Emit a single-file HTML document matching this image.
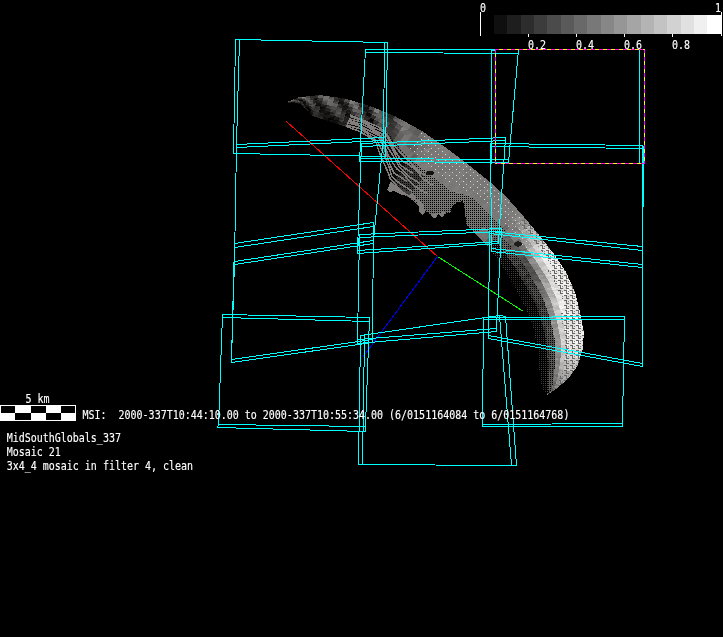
<!DOCTYPE html>
<html><head><meta charset="utf-8"><title>MSI mosaic</title>
<style>
html,body{margin:0;padding:0;background:#000;overflow:hidden}
svg{display:block}
text{font-family:"DejaVu Sans Mono","Liberation Mono",monospace;font-size:10px;fill:#fff;white-space:pre;stroke:#fff;stroke-width:0.12px}
.c{fill:none;stroke:#0ff;stroke-width:1}
</style></head><body>
<svg width="723" height="637" viewBox="0 0 723 637">
<rect width="723" height="637" fill="#000"/>
<g shape-rendering="crispEdges">
<polygon points="288.0,103.0 287.9,102.9 290.4,102.9" fill="rgb(38,35,35)"/><polygon points="288.0,103.0 290.4,102.9 290.6,103.2" fill="rgb(33,30,30)"/><polygon points="287.9,102.9 287.8,102.8 290.2,102.7" fill="rgb(59,56,56)"/><polygon points="287.9,102.9 290.2,102.7 290.4,102.9" fill="rgb(43,40,40)"/><polygon points="287.8,102.8 287.6,102.6 290.1,102.4" fill="rgb(52,49,49)"/><polygon points="287.8,102.8 290.1,102.4 290.2,102.7" fill="rgb(47,44,44)"/><polygon points="287.6,102.6 287.5,102.5 289.9,102.2" fill="rgb(22,19,19)"/><polygon points="287.6,102.6 289.9,102.2 290.1,102.4" fill="rgb(35,32,32)"/><polygon points="287.5,102.5 287.4,102.4 289.7,101.9" fill="rgb(7,4,4)"/><polygon points="287.5,102.5 289.7,101.9 289.9,102.2" fill="rgb(19,16,16)"/><polygon points="287.4,102.4 287.2,102.2 289.6,101.6" fill="rgb(15,12,12)"/><polygon points="287.4,102.4 289.6,101.6 289.7,101.9" fill="rgb(15,12,12)"/><polygon points="287.2,102.2 287.1,102.1 289.4,101.4" fill="rgb(57,54,54)"/><polygon points="287.2,102.2 289.4,101.4 289.6,101.6" fill="rgb(68,65,65)"/><polygon points="287.1,102.1 287.0,102.0 289.2,101.1" fill="rgb(92,89,89)"/><polygon points="287.1,102.1 289.2,101.1 289.4,101.4" fill="rgb(94,91,91)"/>
<polygon points="290.6,103.2 290.4,102.9 293.0,103.0" fill="rgb(45,42,42)"/><polygon points="290.6,103.2 293.0,103.0 293.2,103.4" fill="rgb(54,51,51)"/><polygon points="290.4,102.9 290.2,102.7 292.8,102.6" fill="rgb(37,34,34)"/><polygon points="290.4,102.9 292.8,102.6 293.0,103.0" fill="rgb(32,29,29)"/><polygon points="290.2,102.7 290.1,102.4 292.5,102.2" fill="rgb(35,32,32)"/><polygon points="290.2,102.7 292.5,102.2 292.8,102.6" fill="rgb(9,6,6)"/><polygon points="290.1,102.4 289.9,102.2 292.3,101.8" fill="rgb(27,24,24)"/><polygon points="290.1,102.4 292.3,101.8 292.5,102.2" fill="rgb(11,8,8)"/><polygon points="289.9,102.2 289.7,101.9 292.1,101.4" fill="rgb(23,20,20)"/><polygon points="289.9,102.2 292.1,101.4 292.3,101.8" fill="rgb(22,19,19)"/><polygon points="289.7,101.9 289.6,101.6 291.8,101.0" fill="rgb(62,59,59)"/><polygon points="289.7,101.9 291.8,101.0 292.1,101.4" fill="rgb(77,74,74)"/><polygon points="289.6,101.6 289.4,101.4 291.6,100.6" fill="rgb(95,92,92)"/><polygon points="289.6,101.6 291.6,100.6 291.8,101.0" fill="rgb(106,103,103)"/><polygon points="289.4,101.4 289.2,101.1 291.4,100.2" fill="rgb(122,119,119)"/><polygon points="289.4,101.4 291.4,100.2 291.6,100.6" fill="rgb(115,112,112)"/>
<polygon points="293.2,103.4 293.0,103.0 295.5,103.1" fill="rgb(23,20,20)"/><polygon points="293.2,103.4 295.5,103.1 295.8,103.6" fill="rgb(9,6,6)"/><polygon points="293.0,103.0 292.8,102.6 295.2,102.5" fill="rgb(1,0,0)"/><polygon points="293.0,103.0 295.2,102.5 295.5,103.1" fill="rgb(5,2,2)"/><polygon points="292.8,102.6 292.5,102.2 295.0,102.0" fill="rgb(22,19,19)"/><polygon points="292.8,102.6 295.0,102.0 295.2,102.5" fill="rgb(15,12,12)"/><polygon points="292.5,102.2 292.3,101.8 294.7,101.4" fill="rgb(34,31,31)"/><polygon points="292.5,102.2 294.7,101.4 295.0,102.0" fill="rgb(41,38,38)"/><polygon points="292.3,101.8 292.1,101.4 294.4,100.9" fill="rgb(71,68,68)"/><polygon points="292.3,101.8 294.4,100.9 294.7,101.4" fill="rgb(67,64,64)"/><polygon points="292.1,101.4 291.8,101.0 294.2,100.4" fill="rgb(107,104,104)"/><polygon points="292.1,101.4 294.2,100.4 294.4,100.9" fill="rgb(104,101,101)"/><polygon points="291.8,101.0 291.6,100.6 293.9,99.8" fill="rgb(93,90,90)"/><polygon points="291.8,101.0 293.9,99.8 294.2,100.4" fill="rgb(102,99,99)"/><polygon points="291.6,100.6 291.4,100.2 293.6,99.3" fill="rgb(75,72,72)"/><polygon points="291.6,100.6 293.6,99.3 293.9,99.8" fill="rgb(85,82,82)"/>
<polygon points="295.8,103.6 295.5,103.1 298.1,103.1" fill="rgb(16,13,13)"/><polygon points="295.8,103.6 298.1,103.1 298.4,103.8" fill="rgb(3,0,0)"/><polygon points="295.5,103.1 295.2,102.5 297.8,102.5" fill="rgb(33,30,30)"/><polygon points="295.5,103.1 297.8,102.5 298.1,103.1" fill="rgb(9,6,6)"/><polygon points="295.2,102.5 295.0,102.0 297.4,101.8" fill="rgb(41,38,38)"/><polygon points="295.2,102.5 297.4,101.8 297.8,102.5" fill="rgb(51,48,48)"/><polygon points="295.0,102.0 294.7,101.4 297.1,101.1" fill="rgb(62,59,59)"/><polygon points="295.0,102.0 297.1,101.1 297.4,101.8" fill="rgb(72,69,69)"/><polygon points="294.7,101.4 294.4,100.9 296.8,100.4" fill="rgb(74,71,71)"/><polygon points="294.7,101.4 296.8,100.4 297.1,101.1" fill="rgb(92,89,89)"/><polygon points="294.4,100.9 294.2,100.4 296.4,99.8" fill="rgb(86,83,83)"/><polygon points="294.4,100.9 296.4,99.8 296.8,100.4" fill="rgb(80,77,77)"/><polygon points="294.2,100.4 293.9,99.8 296.1,99.1" fill="rgb(62,59,59)"/><polygon points="294.2,100.4 296.1,99.1 296.4,99.8" fill="rgb(46,43,43)"/><polygon points="293.9,99.8 293.6,99.3 295.8,98.4" fill="rgb(35,32,32)"/><polygon points="293.9,99.8 295.8,98.4 296.1,99.1" fill="rgb(32,29,29)"/>
<polygon points="298.4,103.8 298.1,103.1 300.6,103.2" fill="rgb(24,21,21)"/><polygon points="298.4,103.8 300.6,103.2 301.0,104.0" fill="rgb(20,17,17)"/><polygon points="298.1,103.1 297.8,102.5 300.2,102.4" fill="rgb(54,51,51)"/><polygon points="298.1,103.1 300.2,102.4 300.6,103.2" fill="rgb(57,54,54)"/><polygon points="297.8,102.5 297.4,101.8 299.9,101.6" fill="rgb(65,62,62)"/><polygon points="297.8,102.5 299.9,101.6 300.2,102.4" fill="rgb(71,68,68)"/><polygon points="297.4,101.8 297.1,101.1 299.5,100.8" fill="rgb(59,56,56)"/><polygon points="297.4,101.8 299.5,100.8 299.9,101.6" fill="rgb(77,74,74)"/><polygon points="297.1,101.1 296.8,100.4 299.1,99.9" fill="rgb(61,58,58)"/><polygon points="297.1,101.1 299.1,99.9 299.5,100.8" fill="rgb(71,68,68)"/><polygon points="296.8,100.4 296.4,99.8 298.8,99.1" fill="rgb(43,40,40)"/><polygon points="296.8,100.4 298.8,99.1 299.1,99.9" fill="rgb(28,25,25)"/><polygon points="296.4,99.8 296.1,99.1 298.4,98.3" fill="rgb(20,17,17)"/><polygon points="296.4,99.8 298.4,98.3 298.8,99.1" fill="rgb(28,25,25)"/><polygon points="296.1,99.1 295.8,98.4 298.0,97.5" fill="rgb(29,26,26)"/><polygon points="296.1,99.1 298.0,97.5 298.4,98.3" fill="rgb(41,38,38)"/>
<polygon points="301.0,104.0 300.6,103.2 303.1,105.2" fill="rgb(32,29,29)"/><polygon points="301.0,104.0 303.1,105.2 303.2,106.4" fill="rgb(30,27,27)"/><polygon points="300.6,103.2 300.2,102.4 302.9,104.1" fill="rgb(43,40,40)"/><polygon points="300.6,103.2 302.9,104.1 303.1,105.2" fill="rgb(63,60,60)"/><polygon points="300.2,102.4 299.9,101.6 302.8,102.9" fill="rgb(44,41,41)"/><polygon points="300.2,102.4 302.8,102.9 302.9,104.1" fill="rgb(47,44,44)"/><polygon points="299.9,101.6 299.5,100.8 302.7,101.7" fill="rgb(36,33,33)"/><polygon points="299.9,101.6 302.7,101.7 302.8,102.9" fill="rgb(49,46,46)"/><polygon points="299.5,100.8 299.1,99.9 302.6,100.5" fill="rgb(10,7,7)"/><polygon points="299.5,100.8 302.6,100.5 302.7,101.7" fill="rgb(21,18,18)"/><polygon points="299.1,99.9 298.8,99.1 302.4,99.3" fill="rgb(26,23,23)"/><polygon points="299.1,99.9 302.4,99.3 302.6,100.5" fill="rgb(35,32,32)"/><polygon points="298.8,99.1 298.4,98.3 302.3,98.2" fill="rgb(62,59,59)"/><polygon points="298.8,99.1 302.3,98.2 302.4,99.3" fill="rgb(63,60,60)"/><polygon points="298.4,98.3 298.0,97.5 302.2,97.0" fill="rgb(90,87,87)"/><polygon points="298.4,98.3 302.2,97.0 302.3,98.2" fill="rgb(94,91,91)"/>
<polygon points="303.2,106.4 303.1,105.2 305.5,107.3" fill="rgb(39,36,36)"/><polygon points="303.2,106.4 305.5,107.3 305.4,108.8" fill="rgb(53,50,50)"/><polygon points="303.1,105.2 302.9,104.1 305.6,105.7" fill="rgb(51,48,48)"/><polygon points="303.1,105.2 305.6,105.7 305.5,107.3" fill="rgb(28,25,25)"/><polygon points="302.9,104.1 302.8,102.9 305.8,104.2" fill="rgb(15,12,12)"/><polygon points="302.9,104.1 305.8,104.2 305.6,105.7" fill="rgb(17,14,14)"/><polygon points="302.8,102.9 302.7,101.7 305.9,102.7" fill="rgb(9,6,6)"/><polygon points="302.8,102.9 305.9,102.7 305.8,104.2" fill="rgb(16,13,13)"/><polygon points="302.7,101.7 302.6,100.5 306.0,101.1" fill="rgb(31,28,28)"/><polygon points="302.7,101.7 306.0,101.1 305.9,102.7" fill="rgb(22,19,19)"/><polygon points="302.6,100.5 302.4,99.3 306.1,99.6" fill="rgb(48,45,45)"/><polygon points="302.6,100.5 306.1,99.6 306.0,101.1" fill="rgb(60,57,57)"/><polygon points="302.4,99.3 302.3,98.2 306.3,98.0" fill="rgb(97,94,94)"/><polygon points="302.4,99.3 306.3,98.0 306.1,99.6" fill="rgb(102,99,99)"/><polygon points="302.3,98.2 302.2,97.0 306.4,96.5" fill="rgb(133,130,130)"/><polygon points="302.3,98.2 306.4,96.5 306.3,98.0" fill="rgb(125,122,122)"/>
<polygon points="305.4,108.8 305.5,107.3 308.0,109.3" fill="rgb(24,21,21)"/><polygon points="305.4,108.8 308.0,109.3 307.6,111.2" fill="rgb(27,24,24)"/><polygon points="305.5,107.3 305.6,105.7 308.4,107.4" fill="rgb(20,17,17)"/><polygon points="305.5,107.3 308.4,107.4 308.0,109.3" fill="rgb(2,0,0)"/><polygon points="305.6,105.7 305.8,104.2 308.7,105.5" fill="rgb(27,24,24)"/><polygon points="305.6,105.7 308.7,105.5 308.4,107.4" fill="rgb(23,20,20)"/><polygon points="305.8,104.2 305.9,102.7 309.1,103.6" fill="rgb(45,42,42)"/><polygon points="305.8,104.2 309.1,103.6 308.7,105.5" fill="rgb(43,40,40)"/><polygon points="305.9,102.7 306.0,101.1 309.5,101.7" fill="rgb(65,62,62)"/><polygon points="305.9,102.7 309.5,101.7 309.1,103.6" fill="rgb(65,62,62)"/><polygon points="306.0,101.1 306.1,99.6 309.9,99.8" fill="rgb(86,83,83)"/><polygon points="306.0,101.1 309.9,99.8 309.5,101.7" fill="rgb(101,98,98)"/><polygon points="306.1,99.6 306.3,98.0 310.2,97.9" fill="rgb(91,88,88)"/><polygon points="306.1,99.6 310.2,97.9 309.9,99.8" fill="rgb(91,88,88)"/><polygon points="306.3,98.0 306.4,96.5 310.6,96.0" fill="rgb(73,70,70)"/><polygon points="306.3,98.0 310.6,96.0 310.2,97.9" fill="rgb(72,69,69)"/>
<polygon points="307.6,111.2 308.0,109.3 310.4,111.3" fill="rgb(5,2,2)"/><polygon points="307.6,111.2 310.4,111.3 309.8,113.6" fill="rgb(0,0,0)"/><polygon points="308.0,109.3 308.4,107.4 311.1,109.1" fill="rgb(3,0,0)"/><polygon points="308.0,109.3 311.1,109.1 310.4,111.3" fill="rgb(7,4,4)"/><polygon points="308.4,107.4 308.7,105.5 311.7,106.8" fill="rgb(29,26,26)"/><polygon points="308.4,107.4 311.7,106.8 311.1,109.1" fill="rgb(36,33,33)"/><polygon points="308.7,105.5 309.1,103.6 312.3,104.5" fill="rgb(56,53,53)"/><polygon points="308.7,105.5 312.3,104.5 311.7,106.8" fill="rgb(80,77,77)"/><polygon points="309.1,103.6 309.5,101.7 312.9,102.3" fill="rgb(91,88,88)"/><polygon points="309.1,103.6 312.9,102.3 312.3,104.5" fill="rgb(78,75,75)"/><polygon points="309.5,101.7 309.9,99.8 313.6,100.0" fill="rgb(76,73,73)"/><polygon points="309.5,101.7 313.6,100.0 312.9,102.3" fill="rgb(79,76,76)"/><polygon points="309.9,99.8 310.2,97.9 314.2,97.8" fill="rgb(54,51,51)"/><polygon points="309.9,99.8 314.2,97.8 313.6,100.0" fill="rgb(47,44,44)"/><polygon points="310.2,97.9 310.6,96.0 314.8,95.5" fill="rgb(42,39,39)"/><polygon points="310.2,97.9 314.8,95.5 314.2,97.8" fill="rgb(46,43,43)"/>
<polygon points="309.8,113.6 310.4,111.3 312.9,113.4" fill="rgb(18,15,15)"/><polygon points="309.8,113.6 312.9,113.4 312.0,116.0" fill="rgb(18,15,15)"/><polygon points="310.4,111.3 311.1,109.1 313.8,110.8" fill="rgb(30,27,27)"/><polygon points="310.4,111.3 313.8,110.8 312.9,113.4" fill="rgb(30,27,27)"/><polygon points="311.1,109.1 311.7,106.8 314.6,108.1" fill="rgb(61,58,58)"/><polygon points="311.1,109.1 314.6,108.1 313.8,110.8" fill="rgb(58,55,55)"/><polygon points="311.7,106.8 312.3,104.5 315.5,105.5" fill="rgb(83,80,80)"/><polygon points="311.7,106.8 315.5,105.5 314.6,108.1" fill="rgb(65,62,62)"/><polygon points="312.3,104.5 312.9,102.3 316.4,102.9" fill="rgb(49,46,46)"/><polygon points="312.3,104.5 316.4,102.9 315.5,105.5" fill="rgb(75,72,72)"/><polygon points="312.9,102.3 313.6,100.0 317.2,100.2" fill="rgb(39,36,36)"/><polygon points="312.9,102.3 317.2,100.2 316.4,102.9" fill="rgb(28,25,25)"/><polygon points="313.6,100.0 314.2,97.8 318.1,97.6" fill="rgb(25,22,22)"/><polygon points="313.6,100.0 318.1,97.6 317.2,100.2" fill="rgb(11,8,8)"/><polygon points="314.2,97.8 314.8,95.5 319.0,95.0" fill="rgb(38,35,35)"/><polygon points="314.2,97.8 319.0,95.0 318.1,97.6" fill="rgb(51,48,48)"/>
<polygon points="312.0,116.0 312.9,113.4 318.1,114.9" fill="rgb(50,47,47)"/><polygon points="312.0,116.0 318.1,114.9 317.2,117.6" fill="rgb(45,42,42)"/><polygon points="312.9,113.4 313.8,110.8 318.9,112.1" fill="rgb(49,46,46)"/><polygon points="312.9,113.4 318.9,112.1 318.1,114.9" fill="rgb(52,49,49)"/><polygon points="313.8,110.8 314.6,108.1 319.8,109.4" fill="rgb(48,45,45)"/><polygon points="313.8,110.8 319.8,109.4 318.9,112.1" fill="rgb(65,62,62)"/><polygon points="314.6,108.1 315.5,105.5 320.7,106.7" fill="rgb(44,41,41)"/><polygon points="314.6,108.1 320.7,106.7 319.8,109.4" fill="rgb(51,48,48)"/><polygon points="315.5,105.5 316.4,102.9 321.6,103.9" fill="rgb(20,17,17)"/><polygon points="315.5,105.5 321.6,103.9 320.7,106.7" fill="rgb(17,14,14)"/><polygon points="316.4,102.9 317.2,100.2 322.4,101.2" fill="rgb(31,28,28)"/><polygon points="316.4,102.9 322.4,101.2 321.6,103.9" fill="rgb(36,33,33)"/><polygon points="317.2,100.2 318.1,97.6 323.3,98.4" fill="rgb(57,54,54)"/><polygon points="317.2,100.2 323.3,98.4 322.4,101.2" fill="rgb(55,52,52)"/><polygon points="318.1,97.6 319.0,95.0 324.2,95.7" fill="rgb(99,96,96)"/><polygon points="318.1,97.6 324.2,95.7 323.3,98.4" fill="rgb(97,94,94)"/>
<polygon points="317.2,117.6 318.1,114.9 323.3,116.4" fill="rgb(36,33,33)"/><polygon points="317.2,117.6 323.3,116.4 322.4,119.2" fill="rgb(44,41,41)"/><polygon points="318.1,114.9 318.9,112.1 324.1,113.5" fill="rgb(37,34,34)"/><polygon points="318.1,114.9 324.1,113.5 323.3,116.4" fill="rgb(28,25,25)"/><polygon points="318.9,112.1 319.8,109.4 325.0,110.7" fill="rgb(14,11,11)"/><polygon points="318.9,112.1 325.0,110.7 324.1,113.5" fill="rgb(21,18,18)"/><polygon points="319.8,109.4 320.7,106.7 325.9,107.8" fill="rgb(10,7,7)"/><polygon points="319.8,109.4 325.9,107.8 325.0,110.7" fill="rgb(23,20,20)"/><polygon points="320.7,106.7 321.6,103.9 326.8,105.0" fill="rgb(38,35,35)"/><polygon points="320.7,106.7 326.8,105.0 325.9,107.8" fill="rgb(24,21,21)"/><polygon points="321.6,103.9 322.4,101.2 327.6,102.1" fill="rgb(69,66,66)"/><polygon points="321.6,103.9 327.6,102.1 326.8,105.0" fill="rgb(70,67,67)"/><polygon points="322.4,101.2 323.3,98.4 328.5,99.2" fill="rgb(109,106,106)"/><polygon points="322.4,101.2 328.5,99.2 327.6,102.1" fill="rgb(92,89,89)"/><polygon points="323.3,98.4 324.2,95.7 329.4,96.4" fill="rgb(113,110,110)"/><polygon points="323.3,98.4 329.4,96.4 328.5,99.2" fill="rgb(113,110,110)"/>
<polygon points="322.4,119.2 323.3,116.4 328.5,117.8" fill="rgb(18,15,15)"/><polygon points="322.4,119.2 328.5,117.8 327.6,120.8" fill="rgb(18,15,15)"/><polygon points="323.3,116.4 324.1,113.5 329.4,114.9" fill="rgb(20,17,17)"/><polygon points="323.3,116.4 329.4,114.9 328.5,117.8" fill="rgb(28,25,25)"/><polygon points="324.1,113.5 325.0,110.7 330.2,111.9" fill="rgb(24,21,21)"/><polygon points="324.1,113.5 330.2,111.9 329.4,114.9" fill="rgb(14,11,11)"/><polygon points="325.0,110.7 325.9,107.8 331.1,108.9" fill="rgb(35,32,32)"/><polygon points="325.0,110.7 331.1,108.9 330.2,111.9" fill="rgb(39,36,36)"/><polygon points="325.9,107.8 326.8,105.0 332.0,106.0" fill="rgb(52,49,49)"/><polygon points="325.9,107.8 332.0,106.0 331.1,108.9" fill="rgb(68,65,65)"/><polygon points="326.8,105.0 327.6,102.1 332.9,103.0" fill="rgb(107,104,104)"/><polygon points="326.8,105.0 332.9,103.0 332.0,106.0" fill="rgb(103,100,100)"/><polygon points="327.6,102.1 328.5,99.2 333.7,100.1" fill="rgb(113,110,110)"/><polygon points="327.6,102.1 333.7,100.1 332.9,103.0" fill="rgb(106,103,103)"/><polygon points="328.5,99.2 329.4,96.4 334.6,97.1" fill="rgb(79,76,76)"/><polygon points="328.5,99.2 334.6,97.1 333.7,100.1" fill="rgb(96,93,93)"/>
<polygon points="327.6,120.8 328.5,117.8 333.7,119.3" fill="rgb(5,2,2)"/><polygon points="327.6,120.8 333.7,119.3 332.8,122.4" fill="rgb(19,16,16)"/><polygon points="328.5,117.8 329.4,114.9 334.6,116.2" fill="rgb(28,25,25)"/><polygon points="328.5,117.8 334.6,116.2 333.7,119.3" fill="rgb(12,9,9)"/><polygon points="329.4,114.9 330.2,111.9 335.4,113.2" fill="rgb(33,30,30)"/><polygon points="329.4,114.9 335.4,113.2 334.6,116.2" fill="rgb(48,45,45)"/><polygon points="330.2,111.9 331.1,108.9 336.3,110.1" fill="rgb(72,69,69)"/><polygon points="330.2,111.9 336.3,110.1 335.4,113.2" fill="rgb(57,54,54)"/><polygon points="331.1,108.9 332.0,106.0 337.2,107.0" fill="rgb(78,75,75)"/><polygon points="331.1,108.9 337.2,107.0 336.3,110.1" fill="rgb(78,75,75)"/><polygon points="332.0,106.0 332.9,103.0 338.1,104.0" fill="rgb(99,96,96)"/><polygon points="332.0,106.0 338.1,104.0 337.2,107.0" fill="rgb(96,93,93)"/><polygon points="332.9,103.0 333.7,100.1 338.9,100.9" fill="rgb(54,51,51)"/><polygon points="332.9,103.0 338.9,100.9 338.1,104.0" fill="rgb(73,70,70)"/><polygon points="333.7,100.1 334.6,97.1 339.8,97.8" fill="rgb(49,46,46)"/><polygon points="333.7,100.1 339.8,97.8 338.9,100.9" fill="rgb(40,37,37)"/>
<polygon points="332.8,122.4 333.7,119.3 338.9,120.8" fill="rgb(13,10,10)"/><polygon points="332.8,122.4 338.9,120.8 338.0,124.0" fill="rgb(18,15,15)"/><polygon points="333.7,119.3 334.6,116.2 339.8,117.6" fill="rgb(28,25,25)"/><polygon points="333.7,119.3 339.8,117.6 338.9,120.8" fill="rgb(25,22,22)"/><polygon points="334.6,116.2 335.4,113.2 340.6,114.4" fill="rgb(76,73,73)"/><polygon points="334.6,116.2 340.6,114.4 339.8,117.6" fill="rgb(67,64,64)"/><polygon points="335.4,113.2 336.3,110.1 341.5,111.2" fill="rgb(77,74,74)"/><polygon points="335.4,113.2 341.5,111.2 340.6,114.4" fill="rgb(88,85,85)"/><polygon points="336.3,110.1 337.2,107.0 342.4,108.1" fill="rgb(65,62,62)"/><polygon points="336.3,110.1 342.4,108.1 341.5,111.2" fill="rgb(77,74,74)"/><polygon points="337.2,107.0 338.1,104.0 343.2,104.9" fill="rgb(52,49,49)"/><polygon points="337.2,107.0 343.2,104.9 342.4,108.1" fill="rgb(35,32,32)"/><polygon points="338.1,104.0 338.9,100.9 344.1,101.7" fill="rgb(18,15,15)"/><polygon points="338.1,104.0 344.1,101.7 343.2,104.9" fill="rgb(19,16,16)"/><polygon points="338.9,100.9 339.8,97.8 345.0,98.5" fill="rgb(26,23,23)"/><polygon points="338.9,100.9 345.0,98.5 344.1,101.7" fill="rgb(36,33,33)"/>
<polygon points="338.0,124.0 338.9,120.8 343.0,122.2" fill="rgb(31,28,28)"/><polygon points="338.0,124.0 343.0,122.2 342.0,125.4" fill="rgb(35,32,32)"/><polygon points="338.9,120.8 339.8,117.6 344.0,119.1" fill="rgb(45,42,42)"/><polygon points="338.9,120.8 344.0,119.1 343.0,122.2" fill="rgb(67,64,64)"/><polygon points="339.8,117.6 340.6,114.4 345.0,115.9" fill="rgb(56,53,53)"/><polygon points="339.8,117.6 345.0,115.9 344.0,119.1" fill="rgb(59,56,56)"/><polygon points="340.6,114.4 341.5,111.2 346.0,112.7" fill="rgb(50,47,47)"/><polygon points="340.6,114.4 346.0,112.7 345.0,115.9" fill="rgb(59,56,56)"/><polygon points="341.5,111.2 342.4,108.1 347.0,109.5" fill="rgb(26,23,23)"/><polygon points="341.5,111.2 347.0,109.5 346.0,112.7" fill="rgb(40,37,37)"/><polygon points="342.4,108.1 343.2,104.9 348.0,106.3" fill="rgb(21,18,18)"/><polygon points="342.4,108.1 348.0,106.3 347.0,109.5" fill="rgb(22,19,19)"/><polygon points="343.2,104.9 344.1,101.7 349.0,103.2" fill="rgb(42,39,39)"/><polygon points="343.2,104.9 349.0,103.2 348.0,106.3" fill="rgb(28,25,25)"/><polygon points="344.1,101.7 345.0,98.5 350.0,100.0" fill="rgb(82,79,79)"/><polygon points="344.1,101.7 350.0,100.0 349.0,103.2" fill="rgb(75,72,72)"/>
<polygon points="342.0,125.4 343.0,122.2 347.1,123.6" fill="rgb(31,28,28)"/><polygon points="342.0,125.4 347.1,123.6 346.0,126.8" fill="rgb(53,50,50)"/><polygon points="343.0,122.2 344.0,119.1 348.2,120.5" fill="rgb(35,32,32)"/><polygon points="343.0,122.2 348.2,120.5 347.1,123.6" fill="rgb(43,40,40)"/><polygon points="344.0,119.1 345.0,115.9 349.4,117.3" fill="rgb(37,34,34)"/><polygon points="344.0,119.1 349.4,117.3 348.2,120.5" fill="rgb(33,30,30)"/><polygon points="345.0,115.9 346.0,112.7 350.5,114.2" fill="rgb(14,11,11)"/><polygon points="345.0,115.9 350.5,114.2 349.4,117.3" fill="rgb(19,16,16)"/><polygon points="346.0,112.7 347.0,109.5 351.6,111.0" fill="rgb(24,21,21)"/><polygon points="346.0,112.7 351.6,111.0 350.5,114.2" fill="rgb(31,28,28)"/><polygon points="347.0,109.5 348.0,106.3 352.8,107.8" fill="rgb(40,37,37)"/><polygon points="347.0,109.5 352.8,107.8 351.6,111.0" fill="rgb(52,49,49)"/><polygon points="348.0,106.3 349.0,103.2 353.9,104.7" fill="rgb(84,81,81)"/><polygon points="348.0,106.3 353.9,104.7 352.8,107.8" fill="rgb(85,82,82)"/><polygon points="349.0,103.2 350.0,100.0 355.0,101.5" fill="rgb(128,125,125)"/><polygon points="349.0,103.2 355.0,101.5 353.9,104.7" fill="rgb(120,117,117)"/>
<polygon points="346.0,126.8 347.1,123.6 351.2,125.0" fill="rgb(31,28,28)"/><polygon points="346.0,126.8 351.2,125.0 350.0,128.2" fill="rgb(36,33,33)"/><polygon points="347.1,123.6 348.2,120.5 352.5,121.9" fill="rgb(30,27,27)"/><polygon points="347.1,123.6 352.5,121.9 351.2,125.0" fill="rgb(17,14,14)"/><polygon points="348.2,120.5 349.4,117.3 353.8,118.8" fill="rgb(17,14,14)"/><polygon points="348.2,120.5 353.8,118.8 352.5,121.9" fill="rgb(14,11,11)"/><polygon points="349.4,117.3 350.5,114.2 355.0,115.6" fill="rgb(28,25,25)"/><polygon points="349.4,117.3 355.0,115.6 353.8,118.8" fill="rgb(33,30,30)"/><polygon points="350.5,114.2 351.6,111.0 356.2,112.4" fill="rgb(57,54,54)"/><polygon points="350.5,114.2 356.2,112.4 355.0,115.6" fill="rgb(59,56,56)"/><polygon points="351.6,111.0 352.8,107.8 357.5,109.3" fill="rgb(92,89,89)"/><polygon points="351.6,111.0 357.5,109.3 356.2,112.4" fill="rgb(105,102,102)"/><polygon points="352.8,107.8 353.9,104.7 358.8,106.2" fill="rgb(114,111,111)"/><polygon points="352.8,107.8 358.8,106.2 357.5,109.3" fill="rgb(119,116,116)"/><polygon points="353.9,104.7 355.0,101.5 360.0,103.0" fill="rgb(107,104,104)"/><polygon points="353.9,104.7 360.0,103.0 358.8,106.2" fill="rgb(88,85,85)"/>
<polygon points="350.0,128.2 351.2,125.0 355.4,126.5" fill="rgb(13,10,10)"/><polygon points="350.0,128.2 355.4,126.5 354.0,129.6" fill="rgb(24,21,21)"/><polygon points="351.2,125.0 352.5,121.9 356.8,123.3" fill="rgb(23,20,20)"/><polygon points="351.2,125.0 356.8,123.3 355.4,126.5" fill="rgb(3,0,0)"/><polygon points="352.5,121.9 353.8,118.8 358.1,120.2" fill="rgb(22,19,19)"/><polygon points="352.5,121.9 358.1,120.2 356.8,123.3" fill="rgb(31,28,28)"/><polygon points="353.8,118.8 355.0,115.6 359.5,117.0" fill="rgb(50,47,47)"/><polygon points="353.8,118.8 359.5,117.0 358.1,120.2" fill="rgb(55,52,52)"/><polygon points="355.0,115.6 356.2,112.4 360.9,113.9" fill="rgb(76,73,73)"/><polygon points="355.0,115.6 360.9,113.9 359.5,117.0" fill="rgb(92,89,89)"/><polygon points="356.2,112.4 357.5,109.3 362.2,110.8" fill="rgb(99,96,96)"/><polygon points="356.2,112.4 362.2,110.8 360.9,113.9" fill="rgb(102,99,99)"/><polygon points="357.5,109.3 358.8,106.2 363.6,107.6" fill="rgb(61,58,58)"/><polygon points="357.5,109.3 363.6,107.6 362.2,110.8" fill="rgb(76,73,73)"/><polygon points="358.8,106.2 360.0,103.0 365.0,104.5" fill="rgb(45,42,42)"/><polygon points="358.8,106.2 365.0,104.5 363.6,107.6" fill="rgb(31,28,28)"/>
<polygon points="354.0,129.6 355.4,126.5 359.5,127.9" fill="rgb(25,22,22)"/><polygon points="354.0,129.6 359.5,127.9 358.0,131.0" fill="rgb(28,25,25)"/><polygon points="355.4,126.5 356.8,123.3 361.0,124.8" fill="rgb(27,24,24)"/><polygon points="355.4,126.5 361.0,124.8 359.5,127.9" fill="rgb(48,45,45)"/><polygon points="356.8,123.3 358.1,120.2 362.5,121.6" fill="rgb(58,55,55)"/><polygon points="356.8,123.3 362.5,121.6 361.0,124.8" fill="rgb(61,58,58)"/><polygon points="358.1,120.2 359.5,117.0 364.0,118.5" fill="rgb(91,88,88)"/><polygon points="358.1,120.2 364.0,118.5 362.5,121.6" fill="rgb(86,83,83)"/><polygon points="359.5,117.0 360.9,113.9 365.5,115.4" fill="rgb(62,59,59)"/><polygon points="359.5,117.0 365.5,115.4 364.0,118.5" fill="rgb(70,67,67)"/><polygon points="360.9,113.9 362.2,110.8 367.0,112.2" fill="rgb(49,46,46)"/><polygon points="360.9,113.9 367.0,112.2 365.5,115.4" fill="rgb(44,41,41)"/><polygon points="362.2,110.8 363.6,107.6 368.5,109.1" fill="rgb(19,16,16)"/><polygon points="362.2,110.8 368.5,109.1 367.0,112.2" fill="rgb(22,19,19)"/><polygon points="363.6,107.6 365.0,104.5 370.0,106.0" fill="rgb(36,33,33)"/><polygon points="363.6,107.6 370.0,106.0 368.5,109.1" fill="rgb(16,13,13)"/>
<polygon points="358.0,131.0 359.5,127.9 363.3,130.2" fill="rgb(37,34,34)"/><polygon points="358.0,131.0 363.3,130.2 361.6,133.4" fill="rgb(33,30,30)"/><polygon points="359.5,127.9 361.0,124.8 365.0,127.1" fill="rgb(42,39,39)"/><polygon points="359.5,127.9 365.0,127.1 363.3,130.2" fill="rgb(50,47,47)"/><polygon points="361.0,124.8 362.5,121.6 366.6,123.9" fill="rgb(66,63,63)"/><polygon points="361.0,124.8 366.6,123.9 365.0,127.1" fill="rgb(63,60,60)"/><polygon points="362.5,121.6 364.0,118.5 368.3,120.7" fill="rgb(40,37,37)"/><polygon points="362.5,121.6 368.3,120.7 366.6,123.9" fill="rgb(65,62,62)"/><polygon points="364.0,118.5 365.5,115.4 370.0,117.6" fill="rgb(40,37,37)"/><polygon points="364.0,118.5 370.0,117.6 368.3,120.7" fill="rgb(45,42,42)"/><polygon points="365.5,115.4 367.0,112.2 371.6,114.4" fill="rgb(10,7,7)"/><polygon points="365.5,115.4 371.6,114.4 370.0,117.6" fill="rgb(15,12,12)"/><polygon points="367.0,112.2 368.5,109.1 373.3,111.2" fill="rgb(24,21,21)"/><polygon points="367.0,112.2 373.3,111.2 371.6,114.4" fill="rgb(44,41,41)"/><polygon points="368.5,109.1 370.0,106.0 375.0,108.0" fill="rgb(70,67,67)"/><polygon points="368.5,109.1 375.0,108.0 373.3,111.2" fill="rgb(66,63,63)"/>
<polygon points="361.6,133.4 363.3,130.2 367.1,132.6" fill="rgb(43,40,40)"/><polygon points="361.6,133.4 367.1,132.6 365.2,135.8" fill="rgb(57,54,54)"/><polygon points="363.3,130.2 365.0,127.1 368.9,129.4" fill="rgb(56,53,53)"/><polygon points="363.3,130.2 368.9,129.4 367.1,132.6" fill="rgb(40,37,37)"/><polygon points="365.0,127.1 366.6,123.9 370.8,126.2" fill="rgb(25,22,22)"/><polygon points="365.0,127.1 370.8,126.2 368.9,129.4" fill="rgb(46,43,43)"/><polygon points="366.6,123.9 368.3,120.7 372.6,122.9" fill="rgb(22,19,19)"/><polygon points="366.6,123.9 372.6,122.9 370.8,126.2" fill="rgb(26,23,23)"/><polygon points="368.3,120.7 370.0,117.6 374.4,119.7" fill="rgb(9,6,6)"/><polygon points="368.3,120.7 374.4,119.7 372.6,122.9" fill="rgb(8,5,5)"/><polygon points="370.0,117.6 371.6,114.4 376.3,116.5" fill="rgb(51,48,48)"/><polygon points="370.0,117.6 376.3,116.5 374.4,119.7" fill="rgb(43,40,40)"/><polygon points="371.6,114.4 373.3,111.2 378.1,113.3" fill="rgb(74,71,71)"/><polygon points="371.6,114.4 378.1,113.3 376.3,116.5" fill="rgb(98,95,95)"/><polygon points="373.3,111.2 375.0,108.0 380.0,110.1" fill="rgb(123,120,120)"/><polygon points="373.3,111.2 380.0,110.1 378.1,113.3" fill="rgb(127,124,124)"/>
<polygon points="365.2,135.8 367.1,132.6 370.8,134.9" fill="rgb(24,21,21)"/><polygon points="365.2,135.8 370.8,134.9 368.8,138.2" fill="rgb(45,42,42)"/><polygon points="367.1,132.6 368.9,129.4 372.9,131.7" fill="rgb(14,11,11)"/><polygon points="367.1,132.6 372.9,131.7 370.8,134.9" fill="rgb(36,33,33)"/><polygon points="368.9,129.4 370.8,126.2 374.9,128.4" fill="rgb(18,15,15)"/><polygon points="368.9,129.4 374.9,128.4 372.9,131.7" fill="rgb(15,12,12)"/><polygon points="370.8,126.2 372.6,122.9 376.9,125.2" fill="rgb(30,27,27)"/><polygon points="370.8,126.2 376.9,125.2 374.9,128.4" fill="rgb(41,38,38)"/><polygon points="372.6,122.9 374.4,119.7 378.9,121.9" fill="rgb(50,47,47)"/><polygon points="372.6,122.9 378.9,121.9 376.9,125.2" fill="rgb(46,43,43)"/><polygon points="374.4,119.7 376.3,116.5 380.9,118.6" fill="rgb(91,88,88)"/><polygon points="374.4,119.7 380.9,118.6 378.9,121.9" fill="rgb(83,80,80)"/><polygon points="376.3,116.5 378.1,113.3 383.0,115.4" fill="rgb(99,96,96)"/><polygon points="376.3,116.5 383.0,115.4 380.9,118.6" fill="rgb(101,98,98)"/><polygon points="378.1,113.3 380.0,110.1 385.0,112.1" fill="rgb(89,86,86)"/><polygon points="378.1,113.3 385.0,112.1 383.0,115.4" fill="rgb(93,90,90)"/>
<polygon points="368.8,138.2 370.8,134.9 374.6,137.3" fill="rgb(21,18,18)"/><polygon points="368.8,138.2 374.6,137.3 372.4,140.6" fill="rgb(21,18,18)"/><polygon points="370.8,134.9 372.9,131.7 376.8,134.0" fill="rgb(34,31,31)"/><polygon points="370.8,134.9 376.8,134.0 374.6,137.3" fill="rgb(21,18,18)"/><polygon points="372.9,131.7 374.9,128.4 379.0,130.7" fill="rgb(41,38,38)"/><polygon points="372.9,131.7 379.0,130.7 376.8,134.0" fill="rgb(32,29,29)"/><polygon points="374.9,128.4 376.9,125.2 381.2,127.4" fill="rgb(63,60,60)"/><polygon points="374.9,128.4 381.2,127.4 379.0,130.7" fill="rgb(54,51,51)"/><polygon points="376.9,125.2 378.9,121.9 383.4,124.1" fill="rgb(84,81,81)"/><polygon points="376.9,125.2 383.4,124.1 381.2,127.4" fill="rgb(78,75,75)"/><polygon points="378.9,121.9 380.9,118.6 385.6,120.8" fill="rgb(105,102,102)"/><polygon points="378.9,121.9 385.6,120.8 383.4,124.1" fill="rgb(100,97,97)"/><polygon points="380.9,118.6 383.0,115.4 387.8,117.5" fill="rgb(74,71,71)"/><polygon points="380.9,118.6 387.8,117.5 385.6,120.8" fill="rgb(82,79,79)"/><polygon points="383.0,115.4 385.0,112.1 390.0,114.2" fill="rgb(69,66,66)"/><polygon points="383.0,115.4 390.0,114.2 387.8,117.5" fill="rgb(46,43,43)"/>
<polygon points="372.4,140.6 374.6,137.3 378.4,139.7" fill="rgb(45,42,42)"/><polygon points="372.4,140.6 378.4,139.7 376.0,143.0" fill="rgb(35,32,32)"/><polygon points="374.6,137.3 376.8,134.0 380.8,136.3" fill="rgb(52,49,49)"/><polygon points="374.6,137.3 380.8,136.3 378.4,139.7" fill="rgb(61,58,58)"/><polygon points="376.8,134.0 379.0,130.7 383.1,132.9" fill="rgb(70,67,67)"/><polygon points="376.8,134.0 383.1,132.9 380.8,136.3" fill="rgb(73,70,70)"/><polygon points="379.0,130.7 381.2,127.4 385.5,129.6" fill="rgb(93,90,90)"/><polygon points="379.0,130.7 385.5,129.6 383.1,132.9" fill="rgb(101,98,98)"/><polygon points="381.2,127.4 383.4,124.1 387.9,126.2" fill="rgb(82,79,79)"/><polygon points="381.2,127.4 387.9,126.2 385.5,129.6" fill="rgb(96,93,93)"/><polygon points="383.4,124.1 385.6,120.8 390.2,122.9" fill="rgb(76,73,73)"/><polygon points="383.4,124.1 390.2,122.9 387.9,126.2" fill="rgb(74,71,71)"/><polygon points="385.6,120.8 387.8,117.5 392.6,119.6" fill="rgb(49,46,46)"/><polygon points="385.6,120.8 392.6,119.6 390.2,122.9" fill="rgb(47,44,44)"/><polygon points="387.8,117.5 390.0,114.2 395.0,116.2" fill="rgb(37,34,34)"/><polygon points="387.8,117.5 395.0,116.2 392.6,119.6" fill="rgb(39,36,36)"/>
<polygon points="376.0,143.0 378.4,139.7 381.3,146.5" fill="rgb(47,44,44)"/><polygon points="376.0,143.0 381.3,146.5 378.6,150.4" fill="rgb(66,63,63)"/><polygon points="378.4,139.7 380.8,136.3 384.1,142.6" fill="rgb(68,65,65)"/><polygon points="378.4,139.7 384.1,142.6 381.3,146.5" fill="rgb(65,62,62)"/><polygon points="380.8,136.3 383.1,132.9 386.8,138.7" fill="rgb(71,68,68)"/><polygon points="380.8,136.3 386.8,138.7 384.1,142.6" fill="rgb(92,89,89)"/><polygon points="383.1,132.9 385.5,129.6 389.5,134.8" fill="rgb(88,85,85)"/><polygon points="383.1,132.9 389.5,134.8 386.8,138.7" fill="rgb(82,79,79)"/><polygon points="385.5,129.6 387.9,126.2 392.2,130.9" fill="rgb(58,55,55)"/><polygon points="385.5,129.6 392.2,130.9 389.5,134.8" fill="rgb(57,54,54)"/><polygon points="387.9,126.2 390.2,122.9 394.9,127.0" fill="rgb(48,45,45)"/><polygon points="387.9,126.2 394.9,127.0 392.2,130.9" fill="rgb(53,50,50)"/><polygon points="390.2,122.9 392.6,119.6 397.7,123.1" fill="rgb(52,49,49)"/><polygon points="390.2,122.9 397.7,123.1 394.9,127.0" fill="rgb(60,57,57)"/><polygon points="392.6,119.6 395.0,116.2 400.4,119.2" fill="rgb(80,77,77)"/><polygon points="392.6,119.6 400.4,119.2 397.7,123.1" fill="rgb(100,97,97)"/>
<polygon points="378.6,150.4 381.3,146.5 384.3,153.3" fill="rgb(88,85,85)"/><polygon points="378.6,150.4 384.3,153.3 381.2,157.8" fill="rgb(76,73,73)"/><polygon points="381.3,146.5 384.1,142.6 387.4,148.9" fill="rgb(71,68,68)"/><polygon points="381.3,146.5 387.4,148.9 384.3,153.3" fill="rgb(91,88,88)"/><polygon points="384.1,142.6 386.8,138.7 390.4,144.4" fill="rgb(67,64,64)"/><polygon points="384.1,142.6 390.4,144.4 387.4,148.9" fill="rgb(68,65,65)"/><polygon points="386.8,138.7 389.5,134.8 393.5,140.0" fill="rgb(50,47,47)"/><polygon points="386.8,138.7 393.5,140.0 390.4,144.4" fill="rgb(61,58,58)"/><polygon points="389.5,134.8 392.2,130.9 396.6,135.5" fill="rgb(61,58,58)"/><polygon points="389.5,134.8 396.6,135.5 393.5,140.0" fill="rgb(62,59,59)"/><polygon points="392.2,130.9 394.9,127.0 399.6,131.0" fill="rgb(66,63,63)"/><polygon points="392.2,130.9 399.6,131.0 396.6,135.5" fill="rgb(74,71,71)"/><polygon points="394.9,127.0 397.7,123.1 402.7,126.6" fill="rgb(84,81,81)"/><polygon points="394.9,127.0 402.7,126.6 399.6,131.0" fill="rgb(91,88,88)"/><polygon points="397.7,123.1 400.4,119.2 405.8,122.1" fill="rgb(108,105,105)"/><polygon points="397.7,123.1 405.8,122.1 402.7,126.6" fill="rgb(117,114,114)"/>
<polygon points="381.2,157.8 384.3,153.3 387.2,160.2" fill="rgb(62,59,59)"/><polygon points="381.2,157.8 387.2,160.2 383.8,165.2" fill="rgb(62,59,59)"/><polygon points="384.3,153.3 387.4,148.9 390.6,155.2" fill="rgb(66,63,63)"/><polygon points="384.3,153.3 390.6,155.2 387.2,160.2" fill="rgb(64,61,61)"/><polygon points="387.4,148.9 390.4,144.4 394.1,150.2" fill="rgb(70,67,67)"/><polygon points="387.4,148.9 394.1,150.2 390.6,155.2" fill="rgb(69,66,66)"/><polygon points="390.4,144.4 393.5,140.0 397.5,145.1" fill="rgb(79,76,76)"/><polygon points="390.4,144.4 397.5,145.1 394.1,150.2" fill="rgb(77,74,74)"/><polygon points="393.5,140.0 396.6,135.5 400.9,140.1" fill="rgb(92,89,89)"/><polygon points="393.5,140.0 400.9,140.1 397.5,145.1" fill="rgb(96,93,93)"/><polygon points="396.6,135.5 399.6,131.0 404.4,135.1" fill="rgb(101,98,98)"/><polygon points="396.6,135.5 404.4,135.1 400.9,140.1" fill="rgb(99,96,96)"/><polygon points="399.6,131.0 402.7,126.6 407.8,130.1" fill="rgb(130,127,127)"/><polygon points="399.6,131.0 407.8,130.1 404.4,135.1" fill="rgb(107,104,104)"/><polygon points="402.7,126.6 405.8,122.1 411.2,125.1" fill="rgb(121,118,118)"/><polygon points="402.7,126.6 411.2,125.1 407.8,130.1" fill="rgb(119,116,116)"/>
<polygon points="383.8,165.2 387.2,160.2 390.2,167.0" fill="rgb(62,59,59)"/><polygon points="383.8,165.2 390.2,167.0 386.4,172.6" fill="rgb(84,81,81)"/><polygon points="387.2,160.2 390.6,155.2 393.9,161.5" fill="rgb(86,83,83)"/><polygon points="387.2,160.2 393.9,161.5 390.2,167.0" fill="rgb(79,76,76)"/><polygon points="390.6,155.2 394.1,150.2 397.7,155.9" fill="rgb(88,85,85)"/><polygon points="390.6,155.2 397.7,155.9 393.9,161.5" fill="rgb(91,88,88)"/><polygon points="394.1,150.2 397.5,145.1 401.5,150.3" fill="rgb(85,82,82)"/><polygon points="394.1,150.2 401.5,150.3 397.7,155.9" fill="rgb(96,93,93)"/><polygon points="397.5,145.1 400.9,140.1 405.3,144.8" fill="rgb(107,104,104)"/><polygon points="397.5,145.1 405.3,144.8 401.5,150.3" fill="rgb(117,114,114)"/><polygon points="400.9,140.1 404.4,135.1 409.1,139.2" fill="rgb(121,118,118)"/><polygon points="400.9,140.1 409.1,139.2 405.3,144.8" fill="rgb(122,119,119)"/><polygon points="404.4,135.1 407.8,130.1 412.8,133.6" fill="rgb(109,106,106)"/><polygon points="404.4,135.1 412.8,133.6 409.1,139.2" fill="rgb(118,115,115)"/><polygon points="407.8,130.1 411.2,125.1 416.6,128.0" fill="rgb(99,96,96)"/><polygon points="407.8,130.1 416.6,128.0 412.8,133.6" fill="rgb(100,97,97)"/>
<polygon points="386.4,172.6 390.2,167.0 393.1,173.9" fill="rgb(76,73,73)"/><polygon points="386.4,172.6 393.1,173.9 389.0,180.0" fill="rgb(70,67,67)"/><polygon points="390.2,167.0 393.9,161.5 397.2,167.8" fill="rgb(80,77,77)"/><polygon points="390.2,167.0 397.2,167.8 393.1,173.9" fill="rgb(86,83,83)"/><polygon points="393.9,161.5 397.7,155.9 401.4,161.6" fill="rgb(89,86,86)"/><polygon points="393.9,161.5 401.4,161.6 397.2,167.8" fill="rgb(110,107,107)"/><polygon points="397.7,155.9 401.5,150.3 405.5,155.5" fill="rgb(110,107,107)"/><polygon points="397.7,155.9 405.5,155.5 401.4,161.6" fill="rgb(112,109,109)"/><polygon points="401.5,150.3 405.3,144.8 409.6,149.4" fill="rgb(113,110,110)"/><polygon points="401.5,150.3 409.6,149.4 405.5,155.5" fill="rgb(115,112,112)"/><polygon points="405.3,144.8 409.1,139.2 413.8,143.2" fill="rgb(103,100,100)"/><polygon points="405.3,144.8 413.8,143.2 409.6,149.4" fill="rgb(89,86,86)"/><polygon points="409.1,139.2 412.8,133.6 417.9,137.1" fill="rgb(103,100,100)"/><polygon points="409.1,139.2 417.9,137.1 413.8,143.2" fill="rgb(102,99,99)"/><polygon points="412.8,133.6 416.6,128.0 422.0,131.0" fill="rgb(93,90,90)"/><polygon points="412.8,133.6 422.0,131.0 417.9,137.1" fill="rgb(94,91,91)"/>
<polygon points="389.0,180.0 393.1,173.9 397.1,177.3" fill="rgb(101,98,98)"/><polygon points="389.0,180.0 397.1,177.3 392.8,183.4" fill="rgb(85,82,82)"/><polygon points="393.1,173.9 397.2,167.8 401.3,171.1" fill="rgb(110,107,107)"/><polygon points="393.1,173.9 401.3,171.1 397.1,177.3" fill="rgb(97,94,94)"/><polygon points="397.2,167.8 401.4,161.6 405.6,165.0" fill="rgb(97,94,94)"/><polygon points="397.2,167.8 405.6,165.0 401.3,171.1" fill="rgb(102,99,99)"/><polygon points="401.4,161.6 405.5,155.5 409.8,158.9" fill="rgb(115,112,112)"/><polygon points="401.4,161.6 409.8,158.9 405.6,165.0" fill="rgb(101,98,98)"/><polygon points="405.5,155.5 409.6,149.4 414.1,152.7" fill="rgb(111,108,108)"/><polygon points="405.5,155.5 414.1,152.7 409.8,158.9" fill="rgb(118,115,115)"/><polygon points="409.6,149.4 413.8,143.2 418.3,146.6" fill="rgb(101,98,98)"/><polygon points="409.6,149.4 418.3,146.6 414.1,152.7" fill="rgb(97,94,94)"/><polygon points="413.8,143.2 417.9,137.1 422.6,140.5" fill="rgb(101,98,98)"/><polygon points="413.8,143.2 422.6,140.5 418.3,146.6" fill="rgb(107,104,104)"/><polygon points="417.9,137.1 422.0,131.0 426.8,134.3" fill="rgb(117,114,114)"/><polygon points="417.9,137.1 426.8,134.3 422.6,140.5" fill="rgb(113,110,110)"/>
<polygon points="392.8,183.4 397.1,177.3 401.0,180.7" fill="rgb(111,108,108)"/><polygon points="392.8,183.4 401.0,180.7 396.6,186.8" fill="rgb(95,92,92)"/><polygon points="397.1,177.3 401.3,171.1 405.4,174.5" fill="rgb(100,97,97)"/><polygon points="397.1,177.3 405.4,174.5 401.0,180.7" fill="rgb(103,100,100)"/><polygon points="401.3,171.1 405.6,165.0 409.7,168.4" fill="rgb(117,114,114)"/><polygon points="401.3,171.1 409.7,168.4 405.4,174.5" fill="rgb(105,102,102)"/><polygon points="405.6,165.0 409.8,158.9 414.1,162.2" fill="rgb(112,109,109)"/><polygon points="405.6,165.0 414.1,162.2 409.7,168.4" fill="rgb(96,93,93)"/><polygon points="409.8,158.9 414.1,152.7 418.5,156.1" fill="rgb(97,94,94)"/><polygon points="409.8,158.9 418.5,156.1 414.1,162.2" fill="rgb(103,100,100)"/><polygon points="414.1,152.7 418.3,146.6 422.9,150.0" fill="rgb(116,113,113)"/><polygon points="414.1,152.7 422.9,150.0 418.5,156.1" fill="rgb(117,114,114)"/><polygon points="418.3,146.6 422.6,140.5 427.2,143.8" fill="rgb(122,119,119)"/><polygon points="418.3,146.6 427.2,143.8 422.9,150.0" fill="rgb(111,108,108)"/><polygon points="422.6,140.5 426.8,134.3 431.6,137.7" fill="rgb(123,120,120)"/><polygon points="422.6,140.5 431.6,137.7 427.2,143.8" fill="rgb(121,118,118)"/>
<polygon points="396.6,186.8 401.0,180.7 404.9,184.1" fill="rgb(112,109,109)"/><polygon points="396.6,186.8 404.9,184.1 400.4,190.2" fill="rgb(102,99,99)"/><polygon points="401.0,180.7 405.4,174.5 409.4,177.9" fill="rgb(126,123,123)"/><polygon points="401.0,180.7 409.4,177.9 404.9,184.1" fill="rgb(106,103,103)"/><polygon points="405.4,174.5 409.7,168.4 413.9,171.8" fill="rgb(130,127,127)"/><polygon points="405.4,174.5 413.9,171.8 409.4,177.9" fill="rgb(128,125,125)"/><polygon points="409.7,168.4 414.1,162.2 418.4,165.6" fill="rgb(105,102,102)"/><polygon points="409.7,168.4 418.4,165.6 413.9,171.8" fill="rgb(117,114,114)"/><polygon points="414.1,162.2 418.5,156.1 422.9,159.5" fill="rgb(129,126,126)"/><polygon points="414.1,162.2 422.9,159.5 418.4,165.6" fill="rgb(133,130,130)"/><polygon points="418.5,156.1 422.9,150.0 427.4,153.3" fill="rgb(120,117,117)"/><polygon points="418.5,156.1 427.4,153.3 422.9,159.5" fill="rgb(115,112,112)"/><polygon points="422.9,150.0 427.2,143.8 431.9,147.2" fill="rgb(115,112,112)"/><polygon points="422.9,150.0 431.9,147.2 427.4,153.3" fill="rgb(135,132,132)"/><polygon points="427.2,143.8 431.6,137.7 436.4,141.0" fill="rgb(115,112,112)"/><polygon points="427.2,143.8 436.4,141.0 431.9,147.2" fill="rgb(125,122,122)"/>
<polygon points="400.4,190.2 404.9,184.1 408.8,187.4" fill="rgb(113,110,110)"/><polygon points="400.4,190.2 408.8,187.4 404.2,193.6" fill="rgb(117,114,114)"/><polygon points="404.9,184.1 409.4,177.9 413.4,181.3" fill="rgb(123,120,120)"/><polygon points="404.9,184.1 413.4,181.3 408.8,187.4" fill="rgb(115,112,112)"/><polygon points="409.4,177.9 413.9,171.8 418.1,175.1" fill="rgb(124,121,121)"/><polygon points="409.4,177.9 418.1,175.1 413.4,181.3" fill="rgb(121,118,118)"/><polygon points="413.9,171.8 418.4,165.6 422.7,169.0" fill="rgb(127,124,124)"/><polygon points="413.9,171.8 422.7,169.0 418.1,175.1" fill="rgb(125,122,122)"/><polygon points="418.4,165.6 422.9,159.5 427.3,162.8" fill="rgb(121,118,118)"/><polygon points="418.4,165.6 427.3,162.8 422.7,169.0" fill="rgb(127,124,124)"/><polygon points="422.9,159.5 427.4,153.3 431.9,156.7" fill="rgb(123,120,120)"/><polygon points="422.9,159.5 431.9,156.7 427.3,162.8" fill="rgb(119,116,116)"/><polygon points="427.4,153.3 431.9,147.2 436.6,150.5" fill="rgb(119,116,116)"/><polygon points="427.4,153.3 436.6,150.5 431.9,156.7" fill="rgb(123,120,120)"/><polygon points="431.9,147.2 436.4,141.0 441.2,144.4" fill="rgb(123,120,120)"/><polygon points="431.9,147.2 441.2,144.4 436.6,150.5" fill="rgb(122,119,119)"/>
<polygon points="404.2,193.6 408.8,187.4 412.8,190.8" fill="rgb(113,110,110)"/><polygon points="404.2,193.6 412.8,190.8 408.0,197.0" fill="rgb(115,112,112)"/><polygon points="408.8,187.4 413.4,181.3 417.5,184.7" fill="rgb(117,114,114)"/><polygon points="408.8,187.4 417.5,184.7 412.8,190.8" fill="rgb(122,119,119)"/><polygon points="413.4,181.3 418.1,175.1 422.2,178.5" fill="rgb(116,113,113)"/><polygon points="413.4,181.3 422.2,178.5 417.5,184.7" fill="rgb(124,121,121)"/><polygon points="418.1,175.1 422.7,169.0 427.0,172.3" fill="rgb(127,124,124)"/><polygon points="418.1,175.1 427.0,172.3 422.2,178.5" fill="rgb(119,116,116)"/><polygon points="422.7,169.0 427.3,162.8 431.8,166.2" fill="rgb(128,125,125)"/><polygon points="422.7,169.0 431.8,166.2 427.0,172.3" fill="rgb(126,123,123)"/><polygon points="427.3,162.8 431.9,156.7 436.5,160.0" fill="rgb(128,125,125)"/><polygon points="427.3,162.8 436.5,160.0 431.8,166.2" fill="rgb(121,118,118)"/><polygon points="431.9,156.7 436.6,150.5 441.2,153.9" fill="rgb(122,119,119)"/><polygon points="431.9,156.7 441.2,153.9 436.5,160.0" fill="rgb(122,119,119)"/><polygon points="436.6,150.5 441.2,144.4 446.0,147.7" fill="rgb(128,125,125)"/><polygon points="436.6,150.5 446.0,147.7 441.2,153.9" fill="rgb(124,121,121)"/>
<polygon points="408.0,197.0 412.8,190.8 417.6,194.6" fill="rgb(115,112,112)"/><polygon points="408.0,197.0 417.6,194.6 412.8,200.8" fill="rgb(116,113,113)"/><polygon points="412.8,190.8 417.5,184.7 422.4,188.5" fill="rgb(117,114,114)"/><polygon points="412.8,190.8 422.4,188.5 417.6,194.6" fill="rgb(114,111,111)"/><polygon points="417.5,184.7 422.2,178.5 427.1,182.3" fill="rgb(117,114,114)"/><polygon points="417.5,184.7 427.1,182.3 422.4,188.5" fill="rgb(124,121,121)"/><polygon points="422.2,178.5 427.0,172.3 431.9,176.2" fill="rgb(121,118,118)"/><polygon points="422.2,178.5 431.9,176.2 427.1,182.3" fill="rgb(128,125,125)"/><polygon points="427.0,172.3 431.8,166.2 436.7,170.0" fill="rgb(121,118,118)"/><polygon points="427.0,172.3 436.7,170.0 431.9,176.2" fill="rgb(121,118,118)"/><polygon points="431.8,166.2 436.5,160.0 441.4,163.8" fill="rgb(124,121,121)"/><polygon points="431.8,166.2 441.4,163.8 436.7,170.0" fill="rgb(120,117,117)"/><polygon points="436.5,160.0 441.2,153.9 446.2,157.7" fill="rgb(122,119,119)"/><polygon points="436.5,160.0 446.2,157.7 441.4,163.8" fill="rgb(128,125,125)"/><polygon points="441.2,153.9 446.0,147.7 451.0,151.5" fill="rgb(127,124,124)"/><polygon points="441.2,153.9 451.0,151.5 446.2,157.7" fill="rgb(127,124,124)"/>
<polygon points="412.8,200.8 417.6,194.6 422.4,198.4" fill="rgb(118,115,115)"/><polygon points="412.8,200.8 422.4,198.4 417.6,204.6" fill="rgb(121,118,118)"/><polygon points="417.6,194.6 422.4,188.5 427.2,192.3" fill="rgb(123,120,120)"/><polygon points="417.6,194.6 427.2,192.3 422.4,198.4" fill="rgb(119,116,116)"/><polygon points="422.4,188.5 427.1,182.3 432.0,186.1" fill="rgb(123,120,120)"/><polygon points="422.4,188.5 432.0,186.1 427.2,192.3" fill="rgb(116,113,113)"/><polygon points="427.1,182.3 431.9,176.2 436.8,179.9" fill="rgb(126,123,123)"/><polygon points="427.1,182.3 436.8,179.9 432.0,186.1" fill="rgb(123,120,120)"/><polygon points="431.9,176.2 436.7,170.0 441.6,173.8" fill="rgb(126,123,123)"/><polygon points="431.9,176.2 441.6,173.8 436.8,179.9" fill="rgb(125,122,122)"/><polygon points="436.7,170.0 441.4,163.8 446.4,167.6" fill="rgb(121,118,118)"/><polygon points="436.7,170.0 446.4,167.6 441.6,173.8" fill="rgb(119,116,116)"/><polygon points="441.4,163.8 446.2,157.7 451.2,161.5" fill="rgb(128,125,125)"/><polygon points="441.4,163.8 451.2,161.5 446.4,167.6" fill="rgb(120,117,117)"/><polygon points="446.2,157.7 451.0,151.5 456.0,155.3" fill="rgb(123,120,120)"/><polygon points="446.2,157.7 456.0,155.3 451.2,161.5" fill="rgb(122,119,119)"/>
<polygon points="417.6,204.6 422.4,198.4 427.2,202.2" fill="rgb(115,112,112)"/><polygon points="417.6,204.6 427.2,202.2 422.4,208.4" fill="rgb(119,116,116)"/><polygon points="422.4,198.4 427.2,192.3 432.0,196.1" fill="rgb(124,121,121)"/><polygon points="422.4,198.4 432.0,196.1 427.2,202.2" fill="rgb(116,113,113)"/><polygon points="427.2,192.3 432.0,186.1 436.9,189.9" fill="rgb(123,120,120)"/><polygon points="427.2,192.3 436.9,189.9 432.0,196.1" fill="rgb(119,116,116)"/><polygon points="432.0,186.1 436.8,179.9 441.7,183.8" fill="rgb(124,121,121)"/><polygon points="432.0,186.1 441.7,183.8 436.9,189.9" fill="rgb(122,119,119)"/><polygon points="436.8,179.9 441.6,173.8 446.5,177.6" fill="rgb(120,117,117)"/><polygon points="436.8,179.9 446.5,177.6 441.7,183.8" fill="rgb(120,117,117)"/><polygon points="441.6,173.8 446.4,167.6 451.4,171.4" fill="rgb(121,118,118)"/><polygon points="441.6,173.8 451.4,171.4 446.5,177.6" fill="rgb(128,125,125)"/><polygon points="446.4,167.6 451.2,161.5 456.2,165.3" fill="rgb(123,120,120)"/><polygon points="446.4,167.6 456.2,165.3 451.4,171.4" fill="rgb(121,118,118)"/><polygon points="451.2,161.5 456.0,155.3 461.0,159.1" fill="rgb(128,125,125)"/><polygon points="451.2,161.5 461.0,159.1 456.2,165.3" fill="rgb(128,125,125)"/>
<polygon points="422.4,208.4 427.2,202.2 432.1,206.0" fill="rgb(116,113,113)"/><polygon points="422.4,208.4 432.1,206.0 427.2,212.2" fill="rgb(113,110,110)"/><polygon points="427.2,202.2 432.0,196.1 436.9,199.9" fill="rgb(116,113,113)"/><polygon points="427.2,202.2 436.9,199.9 432.1,206.0" fill="rgb(115,112,112)"/><polygon points="432.0,196.1 436.9,189.9 441.8,193.7" fill="rgb(119,116,116)"/><polygon points="432.0,196.1 441.8,193.7 436.9,199.9" fill="rgb(117,114,114)"/><polygon points="436.9,189.9 441.7,183.8 446.6,187.5" fill="rgb(121,118,118)"/><polygon points="436.9,189.9 446.6,187.5 441.8,193.7" fill="rgb(121,118,118)"/><polygon points="441.7,183.8 446.5,177.6 451.4,181.4" fill="rgb(124,121,121)"/><polygon points="441.7,183.8 451.4,181.4 446.6,187.5" fill="rgb(127,124,124)"/><polygon points="446.5,177.6 451.4,171.4 456.3,175.2" fill="rgb(126,123,123)"/><polygon points="446.5,177.6 456.3,175.2 451.4,181.4" fill="rgb(123,120,120)"/><polygon points="451.4,171.4 456.2,165.3 461.1,169.1" fill="rgb(123,120,120)"/><polygon points="451.4,171.4 461.1,169.1 456.3,175.2" fill="rgb(124,121,121)"/><polygon points="456.2,165.3 461.0,159.1 466.0,162.9" fill="rgb(122,119,119)"/><polygon points="456.2,165.3 466.0,162.9 461.1,169.1" fill="rgb(122,119,119)"/>
<polygon points="427.2,212.2 432.1,206.0 436.9,209.8" fill="rgb(112,109,109)"/><polygon points="427.2,212.2 436.9,209.8 432.0,216.0" fill="rgb(114,111,111)"/><polygon points="432.1,206.0 436.9,199.9 441.8,203.7" fill="rgb(123,120,120)"/><polygon points="432.1,206.0 441.8,203.7 436.9,209.8" fill="rgb(115,112,112)"/><polygon points="436.9,199.9 441.8,193.7 446.6,197.5" fill="rgb(121,118,118)"/><polygon points="436.9,199.9 446.6,197.5 441.8,203.7" fill="rgb(122,119,119)"/><polygon points="441.8,193.7 446.6,187.5 451.5,191.3" fill="rgb(127,124,124)"/><polygon points="441.8,193.7 451.5,191.3 446.6,197.5" fill="rgb(120,117,117)"/><polygon points="446.6,187.5 451.4,181.4 456.4,185.2" fill="rgb(121,118,118)"/><polygon points="446.6,187.5 456.4,185.2 451.5,191.3" fill="rgb(121,118,118)"/><polygon points="451.4,181.4 456.3,175.2 461.2,179.0" fill="rgb(122,119,119)"/><polygon points="451.4,181.4 461.2,179.0 456.4,185.2" fill="rgb(123,120,120)"/><polygon points="456.3,175.2 461.1,169.1 466.1,172.9" fill="rgb(128,125,125)"/><polygon points="456.3,175.2 466.1,172.9 461.2,179.0" fill="rgb(127,124,124)"/><polygon points="461.1,169.1 466.0,162.9 471.0,166.7" fill="rgb(127,124,124)"/><polygon points="461.1,169.1 471.0,166.7 466.1,172.9" fill="rgb(119,116,116)"/>
<polygon points="432.0,216.0 436.9,209.8 441.4,209.5" fill="rgb(112,109,109)"/><polygon points="432.0,216.0 441.4,209.5 436.6,215.2" fill="rgb(119,116,116)"/><polygon points="436.9,209.8 441.8,203.7 446.2,203.9" fill="rgb(123,120,120)"/><polygon points="436.9,209.8 446.2,203.9 441.4,209.5" fill="rgb(119,116,116)"/><polygon points="441.8,203.7 446.6,197.5 451.0,198.2" fill="rgb(122,119,119)"/><polygon points="441.8,203.7 451.0,198.2 446.2,203.9" fill="rgb(116,113,113)"/><polygon points="446.6,197.5 451.5,191.3 455.8,192.6" fill="rgb(122,119,119)"/><polygon points="446.6,197.5 455.8,192.6 451.0,198.2" fill="rgb(127,124,124)"/><polygon points="451.5,191.3 456.4,185.2 460.6,186.9" fill="rgb(127,124,124)"/><polygon points="451.5,191.3 460.6,186.9 455.8,192.6" fill="rgb(127,124,124)"/><polygon points="456.4,185.2 461.2,179.0 465.4,181.3" fill="rgb(128,125,125)"/><polygon points="456.4,185.2 465.4,181.3 460.6,186.9" fill="rgb(121,118,118)"/><polygon points="461.2,179.0 466.1,172.9 470.2,175.6" fill="rgb(120,117,117)"/><polygon points="461.2,179.0 470.2,175.6 465.4,181.3" fill="rgb(120,117,117)"/><polygon points="466.1,172.9 471.0,166.7 475.0,170.0" fill="rgb(124,121,121)"/><polygon points="466.1,172.9 475.0,170.0 470.2,175.6" fill="rgb(125,122,122)"/>
<polygon points="436.6,215.2 441.4,209.5 445.9,209.3" fill="rgb(121,118,118)"/><polygon points="436.6,215.2 445.9,209.3 441.2,214.4" fill="rgb(119,116,116)"/><polygon points="441.4,209.5 446.2,203.9 450.6,204.1" fill="rgb(120,117,117)"/><polygon points="441.4,209.5 450.6,204.1 445.9,209.3" fill="rgb(121,118,118)"/><polygon points="446.2,203.9 451.0,198.2 455.4,199.0" fill="rgb(121,118,118)"/><polygon points="446.2,203.9 455.4,199.0 450.6,204.1" fill="rgb(122,119,119)"/><polygon points="451.0,198.2 455.8,192.6 460.1,193.8" fill="rgb(119,116,116)"/><polygon points="451.0,198.2 460.1,193.8 455.4,199.0" fill="rgb(126,123,123)"/><polygon points="455.8,192.6 460.6,186.9 464.8,188.7" fill="rgb(121,118,118)"/><polygon points="455.8,192.6 464.8,188.7 460.1,193.8" fill="rgb(128,125,125)"/><polygon points="460.6,186.9 465.4,181.3 469.6,183.5" fill="rgb(125,122,122)"/><polygon points="460.6,186.9 469.6,183.5 464.8,188.7" fill="rgb(122,119,119)"/><polygon points="465.4,181.3 470.2,175.6 474.3,178.4" fill="rgb(120,117,117)"/><polygon points="465.4,181.3 474.3,178.4 469.6,183.5" fill="rgb(121,118,118)"/><polygon points="470.2,175.6 475.0,170.0 479.0,173.2" fill="rgb(125,122,122)"/><polygon points="470.2,175.6 479.0,173.2 474.3,178.4" fill="rgb(125,122,122)"/>
<polygon points="441.2,214.4 445.9,209.3 450.4,209.0" fill="rgb(113,110,110)"/><polygon points="441.2,214.4 450.4,209.0 445.8,213.6" fill="rgb(112,109,109)"/><polygon points="445.9,209.3 450.6,204.1 455.1,204.3" fill="rgb(119,116,116)"/><polygon points="445.9,209.3 455.1,204.3 450.4,209.0" fill="rgb(120,117,117)"/><polygon points="450.6,204.1 455.4,199.0 459.8,199.7" fill="rgb(120,117,117)"/><polygon points="450.6,204.1 459.8,199.7 455.1,204.3" fill="rgb(118,115,115)"/><polygon points="455.4,199.0 460.1,193.8 464.4,195.0" fill="rgb(124,121,121)"/><polygon points="455.4,199.0 464.4,195.0 459.8,199.7" fill="rgb(118,115,115)"/><polygon points="460.1,193.8 464.8,188.7 469.1,190.4" fill="rgb(122,119,119)"/><polygon points="460.1,193.8 469.1,190.4 464.4,195.0" fill="rgb(123,120,120)"/><polygon points="464.8,188.7 469.6,183.5 473.7,185.8" fill="rgb(128,125,125)"/><polygon points="464.8,188.7 473.7,185.8 469.1,190.4" fill="rgb(125,122,122)"/><polygon points="469.6,183.5 474.3,178.4 478.4,181.1" fill="rgb(127,124,124)"/><polygon points="469.6,183.5 478.4,181.1 473.7,185.8" fill="rgb(123,120,120)"/><polygon points="474.3,178.4 479.0,173.2 483.0,176.5" fill="rgb(121,118,118)"/><polygon points="474.3,178.4 483.0,176.5 478.4,181.1" fill="rgb(121,118,118)"/>
<polygon points="445.8,213.6 450.4,209.0 455.0,208.7" fill="rgb(121,118,118)"/><polygon points="445.8,213.6 455.0,208.7 450.4,212.8" fill="rgb(119,116,116)"/><polygon points="450.4,209.0 455.1,204.3 459.5,204.5" fill="rgb(117,114,114)"/><polygon points="450.4,209.0 459.5,204.5 455.0,208.7" fill="rgb(114,111,111)"/><polygon points="455.1,204.3 459.8,199.7 464.1,200.4" fill="rgb(121,118,118)"/><polygon points="455.1,204.3 464.1,200.4 459.5,204.5" fill="rgb(123,120,120)"/><polygon points="459.8,199.7 464.4,195.0 468.7,196.3" fill="rgb(122,119,119)"/><polygon points="459.8,199.7 468.7,196.3 464.1,200.4" fill="rgb(121,118,118)"/><polygon points="464.4,195.0 469.1,190.4 473.3,192.1" fill="rgb(125,122,122)"/><polygon points="464.4,195.0 473.3,192.1 468.7,196.3" fill="rgb(128,125,125)"/><polygon points="469.1,190.4 473.7,185.8 477.9,188.0" fill="rgb(121,118,118)"/><polygon points="469.1,190.4 477.9,188.0 473.3,192.1" fill="rgb(119,116,116)"/><polygon points="473.7,185.8 478.4,181.1 482.4,183.9" fill="rgb(122,119,119)"/><polygon points="473.7,185.8 482.4,183.9 477.9,188.0" fill="rgb(123,120,120)"/><polygon points="478.4,181.1 483.0,176.5 487.0,179.7" fill="rgb(125,122,122)"/><polygon points="478.4,181.1 487.0,179.7 482.4,183.9" fill="rgb(120,117,117)"/>
<polygon points="450.4,212.8 455.0,208.7 459.5,208.4" fill="rgb(120,117,117)"/><polygon points="450.4,212.8 459.5,208.4 455.0,212.0" fill="rgb(119,116,116)"/><polygon points="455.0,208.7 459.5,204.5 464.0,204.8" fill="rgb(119,116,116)"/><polygon points="455.0,208.7 464.0,204.8 459.5,208.4" fill="rgb(116,113,113)"/><polygon points="459.5,204.5 464.1,200.4 468.5,201.1" fill="rgb(126,123,123)"/><polygon points="459.5,204.5 468.5,201.1 464.0,204.8" fill="rgb(119,116,116)"/><polygon points="464.1,200.4 468.7,196.3 473.0,197.5" fill="rgb(126,123,123)"/><polygon points="464.1,200.4 473.0,197.5 468.5,201.1" fill="rgb(121,118,118)"/><polygon points="468.7,196.3 473.3,192.1 477.5,193.9" fill="rgb(121,118,118)"/><polygon points="468.7,196.3 477.5,193.9 473.0,197.5" fill="rgb(126,123,123)"/><polygon points="473.3,192.1 477.9,188.0 482.0,190.2" fill="rgb(121,118,118)"/><polygon points="473.3,192.1 482.0,190.2 477.5,193.9" fill="rgb(128,125,125)"/><polygon points="477.9,188.0 482.4,183.9 486.5,186.6" fill="rgb(123,120,120)"/><polygon points="477.9,188.0 486.5,186.6 482.0,190.2" fill="rgb(120,117,117)"/><polygon points="482.4,183.9 487.0,179.7 491.0,183.0" fill="rgb(121,118,118)"/><polygon points="482.4,183.9 491.0,183.0 486.5,186.6" fill="rgb(123,120,120)"/>
<polygon points="455.0,212.0 459.5,208.4 462.5,211.7" fill="rgb(118,115,115)"/><polygon points="455.0,212.0 462.5,211.7 458.0,215.4" fill="rgb(121,118,118)"/><polygon points="459.5,208.4 464.0,204.8 467.0,208.0" fill="rgb(115,112,112)"/><polygon points="459.5,208.4 467.0,208.0 462.5,211.7" fill="rgb(118,115,115)"/><polygon points="464.0,204.8 468.5,201.1 471.5,204.3" fill="rgb(118,115,115)"/><polygon points="464.0,204.8 471.5,204.3 467.0,208.0" fill="rgb(126,123,123)"/><polygon points="468.5,201.1 473.0,197.5 476.0,200.6" fill="rgb(120,117,117)"/><polygon points="468.5,201.1 476.0,200.6 471.5,204.3" fill="rgb(119,116,116)"/><polygon points="473.0,197.5 477.5,193.9 480.5,196.8" fill="rgb(119,116,116)"/><polygon points="473.0,197.5 480.5,196.8 476.0,200.6" fill="rgb(122,119,119)"/><polygon points="477.5,193.9 482.0,190.2 485.0,193.1" fill="rgb(127,124,124)"/><polygon points="477.5,193.9 485.0,193.1 480.5,196.8" fill="rgb(127,124,124)"/><polygon points="482.0,190.2 486.5,186.6 489.5,189.4" fill="rgb(126,123,123)"/><polygon points="482.0,190.2 489.5,189.4 485.0,193.1" fill="rgb(128,125,125)"/><polygon points="486.5,186.6 491.0,183.0 494.0,185.7" fill="rgb(128,125,125)"/><polygon points="486.5,186.6 494.0,185.7 489.5,189.4" fill="rgb(122,119,119)"/>
<polygon points="458.0,215.4 462.5,211.7 465.5,215.0" fill="rgb(113,110,110)"/><polygon points="458.0,215.4 465.5,215.0 461.0,218.8" fill="rgb(121,118,118)"/><polygon points="462.5,211.7 467.0,208.0 470.0,211.2" fill="rgb(121,118,118)"/><polygon points="462.5,211.7 470.0,211.2 465.5,215.0" fill="rgb(114,111,111)"/><polygon points="467.0,208.0 471.5,204.3 474.5,207.4" fill="rgb(123,120,120)"/><polygon points="467.0,208.0 474.5,207.4 470.0,211.2" fill="rgb(120,117,117)"/><polygon points="471.5,204.3 476.0,200.6 479.0,203.6" fill="rgb(122,119,119)"/><polygon points="471.5,204.3 479.0,203.6 474.5,207.4" fill="rgb(122,119,119)"/><polygon points="476.0,200.6 480.5,196.8 483.5,199.8" fill="rgb(120,117,117)"/><polygon points="476.0,200.6 483.5,199.8 479.0,203.6" fill="rgb(119,116,116)"/><polygon points="480.5,196.8 485.0,193.1 488.0,196.0" fill="rgb(121,118,118)"/><polygon points="480.5,196.8 488.0,196.0 483.5,199.8" fill="rgb(122,119,119)"/><polygon points="485.0,193.1 489.5,189.4 492.5,192.2" fill="rgb(128,125,125)"/><polygon points="485.0,193.1 492.5,192.2 488.0,196.0" fill="rgb(120,117,117)"/><polygon points="489.5,189.4 494.0,185.7 497.0,188.4" fill="rgb(128,125,125)"/><polygon points="489.5,189.4 497.0,188.4 492.5,192.2" fill="rgb(121,118,118)"/>
<polygon points="461.0,218.8 465.5,215.0 468.5,218.3" fill="rgb(115,112,112)"/><polygon points="461.0,218.8 468.5,218.3 464.0,222.2" fill="rgb(120,117,117)"/><polygon points="465.5,215.0 470.0,211.2 473.0,214.4" fill="rgb(122,119,119)"/><polygon points="465.5,215.0 473.0,214.4 468.5,218.3" fill="rgb(118,115,115)"/><polygon points="470.0,211.2 474.5,207.4 477.5,210.5" fill="rgb(116,113,113)"/><polygon points="470.0,211.2 477.5,210.5 473.0,214.4" fill="rgb(121,118,118)"/><polygon points="474.5,207.4 479.0,203.6 482.0,206.6" fill="rgb(122,119,119)"/><polygon points="474.5,207.4 482.0,206.6 477.5,210.5" fill="rgb(127,124,124)"/><polygon points="479.0,203.6 483.5,199.8 486.5,202.8" fill="rgb(120,117,117)"/><polygon points="479.0,203.6 486.5,202.8 482.0,206.6" fill="rgb(122,119,119)"/><polygon points="483.5,199.8 488.0,196.0 491.0,198.9" fill="rgb(127,124,124)"/><polygon points="483.5,199.8 491.0,198.9 486.5,202.8" fill="rgb(119,116,116)"/><polygon points="488.0,196.0 492.5,192.2 495.5,195.0" fill="rgb(123,120,120)"/><polygon points="488.0,196.0 495.5,195.0 491.0,198.9" fill="rgb(127,124,124)"/><polygon points="492.5,192.2 497.0,188.4 500.0,191.1" fill="rgb(126,123,123)"/><polygon points="492.5,192.2 500.0,191.1 495.5,195.0" fill="rgb(119,116,116)"/>
<polygon points="464.0,222.2 468.5,218.3 471.5,221.6" fill="rgb(112,109,109)"/><polygon points="464.0,222.2 471.5,221.6 467.0,225.6" fill="rgb(112,109,109)"/><polygon points="468.5,218.3 473.0,214.4 476.0,217.7" fill="rgb(123,120,120)"/><polygon points="468.5,218.3 476.0,217.7 471.5,221.6" fill="rgb(116,113,113)"/><polygon points="473.0,214.4 477.5,210.5 480.5,213.7" fill="rgb(123,120,120)"/><polygon points="473.0,214.4 480.5,213.7 476.0,217.7" fill="rgb(125,122,122)"/><polygon points="477.5,210.5 482.0,206.6 485.0,209.7" fill="rgb(122,119,119)"/><polygon points="477.5,210.5 485.0,209.7 480.5,213.7" fill="rgb(121,118,118)"/><polygon points="482.0,206.6 486.5,202.8 489.5,205.7" fill="rgb(128,125,125)"/><polygon points="482.0,206.6 489.5,205.7 485.0,209.7" fill="rgb(125,122,122)"/><polygon points="486.5,202.8 491.0,198.9 494.0,201.8" fill="rgb(121,118,118)"/><polygon points="486.5,202.8 494.0,201.8 489.5,205.7" fill="rgb(126,123,123)"/><polygon points="491.0,198.9 495.5,195.0 498.5,197.8" fill="rgb(122,119,119)"/><polygon points="491.0,198.9 498.5,197.8 494.0,201.8" fill="rgb(121,118,118)"/><polygon points="495.5,195.0 500.0,191.1 503.0,193.8" fill="rgb(119,116,116)"/><polygon points="495.5,195.0 503.0,193.8 498.5,197.8" fill="rgb(126,123,123)"/>
<polygon points="467.0,225.6 471.5,221.6 474.5,224.9" fill="rgb(121,118,118)"/><polygon points="467.0,225.6 474.5,224.9 470.0,229.0" fill="rgb(118,115,115)"/><polygon points="471.5,221.6 476.0,217.7 479.0,220.9" fill="rgb(123,120,120)"/><polygon points="471.5,221.6 479.0,220.9 474.5,224.9" fill="rgb(114,111,111)"/><polygon points="476.0,217.7 480.5,213.7 483.5,216.8" fill="rgb(118,115,115)"/><polygon points="476.0,217.7 483.5,216.8 479.0,220.9" fill="rgb(121,118,118)"/><polygon points="480.5,213.7 485.0,209.7 488.0,212.8" fill="rgb(128,125,125)"/><polygon points="480.5,213.7 488.0,212.8 483.5,216.8" fill="rgb(128,125,125)"/><polygon points="485.0,209.7 489.5,205.7 492.5,208.7" fill="rgb(122,119,119)"/><polygon points="485.0,209.7 492.5,208.7 488.0,212.8" fill="rgb(121,118,118)"/><polygon points="489.5,205.7 494.0,201.8 497.0,204.6" fill="rgb(123,120,120)"/><polygon points="489.5,205.7 497.0,204.6 492.5,208.7" fill="rgb(123,120,120)"/><polygon points="494.0,201.8 498.5,197.8 501.5,200.6" fill="rgb(128,125,125)"/><polygon points="494.0,201.8 501.5,200.6 497.0,204.6" fill="rgb(120,117,117)"/><polygon points="498.5,197.8 503.0,193.8 506.0,196.5" fill="rgb(127,124,124)"/><polygon points="498.5,197.8 506.0,196.5 501.5,200.6" fill="rgb(126,123,123)"/>
<polygon points="470.0,229.0 474.5,224.9 477.3,227.6" fill="rgb(120,117,117)"/><polygon points="470.0,229.0 477.3,227.6 472.8,231.6" fill="rgb(119,116,116)"/><polygon points="474.5,224.9 479.0,220.9 481.9,223.7" fill="rgb(120,117,117)"/><polygon points="474.5,224.9 481.9,223.7 477.3,227.6" fill="rgb(117,114,114)"/><polygon points="479.0,220.9 483.5,216.8 486.4,219.7" fill="rgb(119,116,116)"/><polygon points="479.0,220.9 486.4,219.7 481.9,223.7" fill="rgb(120,117,117)"/><polygon points="483.5,216.8 488.0,212.8 490.9,215.8" fill="rgb(126,123,123)"/><polygon points="483.5,216.8 490.9,215.8 486.4,219.7" fill="rgb(119,116,116)"/><polygon points="488.0,212.8 492.5,208.7 495.4,211.8" fill="rgb(120,117,117)"/><polygon points="488.0,212.8 495.4,211.8 490.9,215.8" fill="rgb(126,123,123)"/><polygon points="492.5,208.7 497.0,204.6 499.9,207.8" fill="rgb(121,118,118)"/><polygon points="492.5,208.7 499.9,207.8 495.4,211.8" fill="rgb(119,116,116)"/><polygon points="497.0,204.6 501.5,200.6 504.5,203.9" fill="rgb(119,116,116)"/><polygon points="497.0,204.6 504.5,203.9 499.9,207.8" fill="rgb(124,121,121)"/><polygon points="501.5,200.6 506.0,196.5 509.0,199.9" fill="rgb(122,119,119)"/><polygon points="501.5,200.6 509.0,199.9 504.5,203.9" fill="rgb(128,125,125)"/>
<polygon points="472.8,231.6 477.3,227.6 480.2,230.3" fill="rgb(120,117,117)"/><polygon points="472.8,231.6 480.2,230.3 475.6,234.2" fill="rgb(121,118,118)"/><polygon points="477.3,227.6 481.9,223.7 484.7,226.5" fill="rgb(116,113,113)"/><polygon points="477.3,227.6 484.7,226.5 480.2,230.3" fill="rgb(115,112,112)"/><polygon points="481.9,223.7 486.4,219.7 489.2,222.6" fill="rgb(117,114,114)"/><polygon points="481.9,223.7 489.2,222.6 484.7,226.5" fill="rgb(121,118,118)"/><polygon points="486.4,219.7 490.9,215.8 493.8,218.8" fill="rgb(125,122,122)"/><polygon points="486.4,219.7 493.8,218.8 489.2,222.6" fill="rgb(123,120,120)"/><polygon points="490.9,215.8 495.4,211.8 498.4,214.9" fill="rgb(121,118,118)"/><polygon points="490.9,215.8 498.4,214.9 493.8,218.8" fill="rgb(123,120,120)"/><polygon points="495.4,211.8 499.9,207.8 502.9,211.0" fill="rgb(125,122,122)"/><polygon points="495.4,211.8 502.9,211.0 498.4,214.9" fill="rgb(125,122,122)"/><polygon points="499.9,207.8 504.5,203.9 507.4,207.2" fill="rgb(126,123,123)"/><polygon points="499.9,207.8 507.4,207.2 502.9,211.0" fill="rgb(127,124,124)"/><polygon points="504.5,203.9 509.0,199.9 512.0,203.3" fill="rgb(125,122,122)"/><polygon points="504.5,203.9 512.0,203.3 507.4,207.2" fill="rgb(120,117,117)"/>
<polygon points="475.6,234.2 480.2,230.3 483.0,233.0" fill="rgb(120,117,117)"/><polygon points="475.6,234.2 483.0,233.0 478.4,236.8" fill="rgb(115,112,112)"/><polygon points="480.2,230.3 484.7,226.5 487.5,229.3" fill="rgb(119,116,116)"/><polygon points="480.2,230.3 487.5,229.3 483.0,233.0" fill="rgb(118,115,115)"/><polygon points="484.7,226.5 489.2,222.6 492.1,225.5" fill="rgb(123,120,120)"/><polygon points="484.7,226.5 492.1,225.5 487.5,229.3" fill="rgb(118,115,115)"/><polygon points="489.2,222.6 493.8,218.8 496.7,221.8" fill="rgb(121,118,118)"/><polygon points="489.2,222.6 496.7,221.8 492.1,225.5" fill="rgb(121,118,118)"/><polygon points="493.8,218.8 498.4,214.9 501.3,218.0" fill="rgb(120,117,117)"/><polygon points="493.8,218.8 501.3,218.0 496.7,221.8" fill="rgb(127,124,124)"/><polygon points="498.4,214.9 502.9,211.0 505.9,214.2" fill="rgb(124,121,121)"/><polygon points="498.4,214.9 505.9,214.2 501.3,218.0" fill="rgb(122,119,119)"/><polygon points="502.9,211.0 507.4,207.2 510.4,210.5" fill="rgb(122,119,119)"/><polygon points="502.9,211.0 510.4,210.5 505.9,214.2" fill="rgb(128,125,125)"/><polygon points="507.4,207.2 512.0,203.3 515.0,206.7" fill="rgb(124,121,121)"/><polygon points="507.4,207.2 515.0,206.7 510.4,210.5" fill="rgb(121,118,118)"/>
<polygon points="478.4,236.8 483.0,233.0 485.8,235.7" fill="rgb(120,117,117)"/><polygon points="478.4,236.8 485.8,235.7 481.2,239.4" fill="rgb(118,115,115)"/><polygon points="483.0,233.0 487.5,229.3 490.4,232.1" fill="rgb(124,121,121)"/><polygon points="483.0,233.0 490.4,232.1 485.8,235.7" fill="rgb(115,112,112)"/><polygon points="487.5,229.3 492.1,225.5 495.0,228.4" fill="rgb(121,118,118)"/><polygon points="487.5,229.3 495.0,228.4 490.4,232.1" fill="rgb(124,121,121)"/><polygon points="492.1,225.5 496.7,221.8 499.6,224.8" fill="rgb(127,124,124)"/><polygon points="492.1,225.5 499.6,224.8 495.0,228.4" fill="rgb(127,124,124)"/><polygon points="496.7,221.8 501.3,218.0 504.2,221.1" fill="rgb(119,116,116)"/><polygon points="496.7,221.8 504.2,221.1 499.6,224.8" fill="rgb(121,118,118)"/><polygon points="501.3,218.0 505.9,214.2 508.8,217.4" fill="rgb(120,117,117)"/><polygon points="501.3,218.0 508.8,217.4 504.2,221.1" fill="rgb(120,117,117)"/><polygon points="505.9,214.2 510.4,210.5 513.4,213.8" fill="rgb(128,125,125)"/><polygon points="505.9,214.2 513.4,213.8 508.8,217.4" fill="rgb(124,121,121)"/><polygon points="510.4,210.5 515.0,206.7 518.0,210.1" fill="rgb(128,125,125)"/><polygon points="510.4,210.5 518.0,210.1 513.4,213.8" fill="rgb(122,119,119)"/>
<polygon points="481.2,239.4 485.8,235.7 488.6,238.4" fill="rgb(117,114,114)"/><polygon points="481.2,239.4 488.6,238.4 484.0,242.0" fill="rgb(113,110,110)"/><polygon points="485.8,235.7 490.4,232.1 493.2,234.9" fill="rgb(113,110,110)"/><polygon points="485.8,235.7 493.2,234.9 488.6,238.4" fill="rgb(119,116,116)"/><polygon points="490.4,232.1 495.0,228.4 497.9,231.3" fill="rgb(123,120,120)"/><polygon points="490.4,232.1 497.9,231.3 493.2,234.9" fill="rgb(114,111,111)"/><polygon points="495.0,228.4 499.6,224.8 502.5,227.8" fill="rgb(122,119,119)"/><polygon points="495.0,228.4 502.5,227.8 497.9,231.3" fill="rgb(122,119,119)"/><polygon points="499.6,224.8 504.2,221.1 507.1,224.2" fill="rgb(119,116,116)"/><polygon points="499.6,224.8 507.1,224.2 502.5,227.8" fill="rgb(121,118,118)"/><polygon points="504.2,221.1 508.8,217.4 511.8,220.6" fill="rgb(122,119,119)"/><polygon points="504.2,221.1 511.8,220.6 507.1,224.2" fill="rgb(122,119,119)"/><polygon points="508.8,217.4 513.4,213.8 516.4,217.1" fill="rgb(126,123,123)"/><polygon points="508.8,217.4 516.4,217.1 511.8,220.6" fill="rgb(129,126,126)"/><polygon points="513.4,213.8 518.0,210.1 521.0,213.5" fill="rgb(131,128,128)"/><polygon points="513.4,213.8 521.0,213.5 516.4,217.1" fill="rgb(127,124,124)"/>
<polygon points="484.0,242.0 488.6,238.4 491.3,241.7" fill="rgb(94,91,91)"/><polygon points="484.0,242.0 491.3,241.7 486.6,245.2" fill="rgb(103,100,100)"/><polygon points="488.6,238.4 493.2,234.9 496.0,238.2" fill="rgb(116,113,113)"/><polygon points="488.6,238.4 496.0,238.2 491.3,241.7" fill="rgb(102,99,99)"/><polygon points="493.2,234.9 497.9,231.3 500.7,234.7" fill="rgb(108,105,105)"/><polygon points="493.2,234.9 500.7,234.7 496.0,238.2" fill="rgb(105,102,102)"/><polygon points="497.9,231.3 502.5,227.8 505.4,231.2" fill="rgb(124,121,121)"/><polygon points="497.9,231.3 505.4,231.2 500.7,234.7" fill="rgb(118,115,115)"/><polygon points="502.5,227.8 507.1,224.2 510.1,227.8" fill="rgb(107,104,104)"/><polygon points="502.5,227.8 510.1,227.8 505.4,231.2" fill="rgb(108,105,105)"/><polygon points="507.1,224.2 511.8,220.6 514.8,224.3" fill="rgb(126,123,123)"/><polygon points="507.1,224.2 514.8,224.3 510.1,227.8" fill="rgb(130,127,127)"/><polygon points="511.8,220.6 516.4,217.1 519.5,220.8" fill="rgb(140,137,137)"/><polygon points="511.8,220.6 519.5,220.8 514.8,224.3" fill="rgb(125,122,122)"/><polygon points="516.4,217.1 521.0,213.5 524.2,217.3" fill="rgb(130,127,127)"/><polygon points="516.4,217.1 524.2,217.3 519.5,220.8" fill="rgb(145,142,142)"/>
<polygon points="486.6,245.2 491.3,241.7 494.0,245.0" fill="rgb(100,97,97)"/><polygon points="486.6,245.2 494.0,245.0 489.2,248.4" fill="rgb(97,94,94)"/><polygon points="491.3,241.7 496.0,238.2 498.8,241.6" fill="rgb(100,97,97)"/><polygon points="491.3,241.7 498.8,241.6 494.0,245.0" fill="rgb(118,115,115)"/><polygon points="496.0,238.2 500.7,234.7 503.5,238.2" fill="rgb(104,101,101)"/><polygon points="496.0,238.2 503.5,238.2 498.8,241.6" fill="rgb(111,108,108)"/><polygon points="500.7,234.7 505.4,231.2 508.3,234.8" fill="rgb(108,105,105)"/><polygon points="500.7,234.7 508.3,234.8 503.5,238.2" fill="rgb(110,107,107)"/><polygon points="505.4,231.2 510.1,227.8 513.1,231.3" fill="rgb(127,124,124)"/><polygon points="505.4,231.2 513.1,231.3 508.3,234.8" fill="rgb(131,128,128)"/><polygon points="510.1,227.8 514.8,224.3 517.9,227.9" fill="rgb(128,125,125)"/><polygon points="510.1,227.8 517.9,227.9 513.1,231.3" fill="rgb(123,120,120)"/><polygon points="514.8,224.3 519.5,220.8 522.6,224.5" fill="rgb(151,148,148)"/><polygon points="514.8,224.3 522.6,224.5 517.9,227.9" fill="rgb(136,133,133)"/><polygon points="519.5,220.8 524.2,217.3 527.4,221.1" fill="rgb(136,133,133)"/><polygon points="519.5,220.8 527.4,221.1 522.6,224.5" fill="rgb(161,158,158)"/>
<polygon points="489.2,248.4 494.0,245.0 496.7,248.3" fill="rgb(95,92,92)"/><polygon points="489.2,248.4 496.7,248.3 491.8,251.6" fill="rgb(106,103,103)"/><polygon points="494.0,245.0 498.8,241.6 501.5,244.9" fill="rgb(98,95,95)"/><polygon points="494.0,245.0 501.5,244.9 496.7,248.3" fill="rgb(111,108,108)"/><polygon points="498.8,241.6 503.5,238.2 506.4,241.6" fill="rgb(103,100,100)"/><polygon points="498.8,241.6 506.4,241.6 501.5,244.9" fill="rgb(95,92,92)"/><polygon points="503.5,238.2 508.3,234.8 511.2,238.2" fill="rgb(94,91,91)"/><polygon points="503.5,238.2 511.2,238.2 506.4,241.6" fill="rgb(109,106,106)"/><polygon points="508.3,234.8 513.1,231.3 516.1,234.9" fill="rgb(119,116,116)"/><polygon points="508.3,234.8 516.1,234.9 511.2,238.2" fill="rgb(126,123,123)"/><polygon points="513.1,231.3 517.9,227.9 520.9,231.6" fill="rgb(124,121,121)"/><polygon points="513.1,231.3 520.9,231.6 516.1,234.9" fill="rgb(139,136,136)"/><polygon points="517.9,227.9 522.6,224.5 525.8,228.2" fill="rgb(149,146,146)"/><polygon points="517.9,227.9 525.8,228.2 520.9,231.6" fill="rgb(153,150,150)"/><polygon points="522.6,224.5 527.4,221.1 530.6,224.9" fill="rgb(150,147,147)"/><polygon points="522.6,224.5 530.6,224.9 525.8,228.2" fill="rgb(154,151,151)"/>
<polygon points="491.8,251.6 496.7,248.3 499.3,251.5" fill="rgb(92,89,89)"/><polygon points="491.8,251.6 499.3,251.5 494.4,254.8" fill="rgb(104,101,101)"/><polygon points="496.7,248.3 501.5,244.9 504.2,248.3" fill="rgb(85,82,82)"/><polygon points="496.7,248.3 504.2,248.3 499.3,251.5" fill="rgb(95,92,92)"/><polygon points="501.5,244.9 506.4,241.6 509.2,245.0" fill="rgb(108,105,105)"/><polygon points="501.5,244.9 509.2,245.0 504.2,248.3" fill="rgb(113,110,110)"/><polygon points="506.4,241.6 511.2,238.2 514.1,241.8" fill="rgb(95,92,92)"/><polygon points="506.4,241.6 514.1,241.8 509.2,245.0" fill="rgb(93,90,90)"/><polygon points="511.2,238.2 516.1,234.9 519.0,238.5" fill="rgb(127,124,124)"/><polygon points="511.2,238.2 519.0,238.5 514.1,241.8" fill="rgb(128,125,125)"/><polygon points="516.1,234.9 520.9,231.6 523.9,235.2" fill="rgb(140,137,137)"/><polygon points="516.1,234.9 523.9,235.2 519.0,238.5" fill="rgb(128,125,125)"/><polygon points="520.9,231.6 525.8,228.2 528.9,232.0" fill="rgb(174,171,171)"/><polygon points="520.9,231.6 528.9,232.0 523.9,235.2" fill="rgb(159,156,156)"/><polygon points="525.8,228.2 530.6,224.9 533.8,228.7" fill="rgb(181,178,178)"/><polygon points="525.8,228.2 533.8,228.7 528.9,232.0" fill="rgb(173,170,170)"/>
<polygon points="494.4,254.8 499.3,251.5 502.0,254.8" fill="rgb(96,93,93)"/><polygon points="494.4,254.8 502.0,254.8 497.0,258.0" fill="rgb(77,74,74)"/><polygon points="499.3,251.5 504.2,248.3 507.0,251.6" fill="rgb(99,96,96)"/><polygon points="499.3,251.5 507.0,251.6 502.0,254.8" fill="rgb(83,80,80)"/><polygon points="504.2,248.3 509.2,245.0 512.0,248.4" fill="rgb(92,89,89)"/><polygon points="504.2,248.3 512.0,248.4 507.0,251.6" fill="rgb(105,102,102)"/><polygon points="509.2,245.0 514.1,241.8 517.0,245.2" fill="rgb(108,105,105)"/><polygon points="509.2,245.0 517.0,245.2 512.0,248.4" fill="rgb(90,87,87)"/><polygon points="514.1,241.8 519.0,238.5 522.0,242.1" fill="rgb(108,105,105)"/><polygon points="514.1,241.8 522.0,242.1 517.0,245.2" fill="rgb(113,110,110)"/><polygon points="519.0,238.5 523.9,235.2 527.0,238.9" fill="rgb(148,145,145)"/><polygon points="519.0,238.5 527.0,238.9 522.0,242.1" fill="rgb(144,141,141)"/><polygon points="523.9,235.2 528.9,232.0 532.0,235.7" fill="rgb(161,158,158)"/><polygon points="523.9,235.2 532.0,235.7 527.0,238.9" fill="rgb(165,162,162)"/><polygon points="528.9,232.0 533.8,228.7 537.0,232.5" fill="rgb(186,183,183)"/><polygon points="528.9,232.0 537.0,232.5 532.0,235.7" fill="rgb(191,188,188)"/>
<polygon points="497.0,258.0 502.0,254.8 504.3,258.3" fill="rgb(68,65,65)"/><polygon points="497.0,258.0 504.3,258.3 499.2,261.4" fill="rgb(83,80,80)"/><polygon points="502.0,254.8 507.0,251.6 509.4,255.1" fill="rgb(93,90,90)"/><polygon points="502.0,254.8 509.4,255.1 504.3,258.3" fill="rgb(73,70,70)"/><polygon points="507.0,251.6 512.0,248.4 514.5,252.0" fill="rgb(100,97,97)"/><polygon points="507.0,251.6 514.5,252.0 509.4,255.1" fill="rgb(80,77,77)"/><polygon points="512.0,248.4 517.0,245.2 519.6,248.9" fill="rgb(98,95,95)"/><polygon points="512.0,248.4 519.6,248.9 514.5,252.0" fill="rgb(97,94,94)"/><polygon points="517.0,245.2 522.0,242.1 524.8,245.8" fill="rgb(121,118,118)"/><polygon points="517.0,245.2 524.8,245.8 519.6,248.9" fill="rgb(112,109,109)"/><polygon points="522.0,242.1 527.0,238.9 529.9,242.7" fill="rgb(152,149,149)"/><polygon points="522.0,242.1 529.9,242.7 524.8,245.8" fill="rgb(157,154,154)"/><polygon points="527.0,238.9 532.0,235.7 535.0,239.5" fill="rgb(180,177,177)"/><polygon points="527.0,238.9 535.0,239.5 529.9,242.7" fill="rgb(187,184,184)"/><polygon points="532.0,235.7 537.0,232.5 540.1,236.4" fill="rgb(189,186,186)"/><polygon points="532.0,235.7 540.1,236.4 535.0,239.5" fill="rgb(188,185,185)"/>
<polygon points="499.2,261.4 504.3,258.3 506.6,261.7" fill="rgb(63,60,60)"/><polygon points="499.2,261.4 506.6,261.7 501.4,264.8" fill="rgb(79,76,76)"/><polygon points="504.3,258.3 509.4,255.1 511.9,258.7" fill="rgb(81,78,78)"/><polygon points="504.3,258.3 511.9,258.7 506.6,261.7" fill="rgb(74,71,71)"/><polygon points="509.4,255.1 514.5,252.0 517.1,255.6" fill="rgb(94,91,91)"/><polygon points="509.4,255.1 517.1,255.6 511.9,258.7" fill="rgb(94,91,91)"/><polygon points="514.5,252.0 519.6,248.9 522.3,252.6" fill="rgb(90,87,87)"/><polygon points="514.5,252.0 522.3,252.6 517.1,255.6" fill="rgb(82,79,79)"/><polygon points="519.6,248.9 524.8,245.8 527.5,249.5" fill="rgb(119,116,116)"/><polygon points="519.6,248.9 527.5,249.5 522.3,252.6" fill="rgb(109,106,106)"/><polygon points="524.8,245.8 529.9,242.7 532.8,246.4" fill="rgb(153,150,150)"/><polygon points="524.8,245.8 532.8,246.4 527.5,249.5" fill="rgb(161,158,158)"/><polygon points="529.9,242.7 535.0,239.5 538.0,243.4" fill="rgb(181,178,178)"/><polygon points="529.9,242.7 538.0,243.4 532.8,246.4" fill="rgb(191,188,188)"/><polygon points="535.0,239.5 540.1,236.4 543.2,240.3" fill="rgb(200,197,197)"/><polygon points="535.0,239.5 543.2,240.3 538.0,243.4" fill="rgb(187,184,184)"/>
<polygon points="501.4,264.8 506.6,261.7 508.9,265.2" fill="rgb(74,71,71)"/><polygon points="501.4,264.8 508.9,265.2 503.6,268.2" fill="rgb(59,56,56)"/><polygon points="506.6,261.7 511.9,258.7 514.3,262.2" fill="rgb(83,80,80)"/><polygon points="506.6,261.7 514.3,262.2 508.9,265.2" fill="rgb(84,81,81)"/><polygon points="511.9,258.7 517.1,255.6 519.6,259.2" fill="rgb(82,79,79)"/><polygon points="511.9,258.7 519.6,259.2 514.3,262.2" fill="rgb(69,66,66)"/><polygon points="517.1,255.6 522.3,252.6 525.0,256.2" fill="rgb(88,85,85)"/><polygon points="517.1,255.6 525.0,256.2 519.6,259.2" fill="rgb(84,81,81)"/><polygon points="522.3,252.6 527.5,249.5 530.3,253.2" fill="rgb(136,133,133)"/><polygon points="522.3,252.6 530.3,253.2 525.0,256.2" fill="rgb(113,110,110)"/><polygon points="527.5,249.5 532.8,246.4 535.6,250.2" fill="rgb(182,179,179)"/><polygon points="527.5,249.5 535.6,250.2 530.3,253.2" fill="rgb(186,183,183)"/><polygon points="532.8,246.4 538.0,243.4 541.0,247.2" fill="rgb(211,208,208)"/><polygon points="532.8,246.4 541.0,247.2 535.6,250.2" fill="rgb(213,210,210)"/><polygon points="538.0,243.4 543.2,240.3 546.3,244.2" fill="rgb(202,199,199)"/><polygon points="538.0,243.4 546.3,244.2 541.0,247.2" fill="rgb(224,221,221)"/>
<polygon points="503.6,268.2 508.9,265.2 511.2,268.7" fill="rgb(65,62,62)"/><polygon points="503.6,268.2 511.2,268.7 505.8,271.6" fill="rgb(78,75,75)"/><polygon points="508.9,265.2 514.3,262.2 516.7,265.7" fill="rgb(83,80,80)"/><polygon points="508.9,265.2 516.7,265.7 511.2,268.7" fill="rgb(62,59,59)"/><polygon points="514.3,262.2 519.6,259.2 522.1,262.8" fill="rgb(86,83,83)"/><polygon points="514.3,262.2 522.1,262.8 516.7,265.7" fill="rgb(90,87,87)"/><polygon points="519.6,259.2 525.0,256.2 527.6,259.9" fill="rgb(72,69,69)"/><polygon points="519.6,259.2 527.6,259.9 522.1,262.8" fill="rgb(80,77,77)"/><polygon points="525.0,256.2 530.3,253.2 533.0,256.9" fill="rgb(135,132,132)"/><polygon points="525.0,256.2 533.0,256.9 527.6,259.9" fill="rgb(118,115,115)"/><polygon points="530.3,253.2 535.6,250.2 538.5,254.0" fill="rgb(194,191,191)"/><polygon points="530.3,253.2 538.5,254.0 533.0,256.9" fill="rgb(176,173,173)"/><polygon points="535.6,250.2 541.0,247.2 543.9,251.0" fill="rgb(224,221,221)"/><polygon points="535.6,250.2 543.9,251.0 538.5,254.0" fill="rgb(206,203,203)"/><polygon points="541.0,247.2 546.3,244.2 549.4,248.1" fill="rgb(220,217,217)"/><polygon points="541.0,247.2 549.4,248.1 543.9,251.0" fill="rgb(232,229,229)"/>
<polygon points="505.8,271.6 511.2,268.7 513.6,272.1" fill="rgb(52,49,49)"/><polygon points="505.8,271.6 513.6,272.1 508.0,275.0" fill="rgb(53,50,50)"/><polygon points="511.2,268.7 516.7,265.7 519.1,269.2" fill="rgb(67,64,64)"/><polygon points="511.2,268.7 519.1,269.2 513.6,272.1" fill="rgb(62,59,59)"/><polygon points="516.7,265.7 522.1,262.8 524.7,266.4" fill="rgb(61,58,58)"/><polygon points="516.7,265.7 524.7,266.4 519.1,269.2" fill="rgb(65,62,62)"/><polygon points="522.1,262.8 527.6,259.9 530.2,263.5" fill="rgb(71,68,68)"/><polygon points="522.1,262.8 530.2,263.5 524.7,266.4" fill="rgb(92,89,89)"/><polygon points="527.6,259.9 533.0,256.9 535.8,260.6" fill="rgb(139,136,136)"/><polygon points="527.6,259.9 535.8,260.6 530.2,263.5" fill="rgb(145,142,142)"/><polygon points="533.0,256.9 538.5,254.0 541.4,257.8" fill="rgb(184,181,181)"/><polygon points="533.0,256.9 541.4,257.8 535.8,260.6" fill="rgb(202,199,199)"/><polygon points="538.5,254.0 543.9,251.0 546.9,254.9" fill="rgb(217,214,214)"/><polygon points="538.5,254.0 546.9,254.9 541.4,257.8" fill="rgb(229,226,226)"/><polygon points="543.9,251.0 549.4,248.1 552.5,252.0" fill="rgb(234,231,231)"/><polygon points="543.9,251.0 552.5,252.0 546.9,254.9" fill="rgb(227,224,224)"/>
<polygon points="508.0,275.0 513.6,272.1 515.5,275.6" fill="rgb(68,65,65)"/><polygon points="508.0,275.0 515.5,275.6 509.8,278.4" fill="rgb(60,57,57)"/><polygon points="513.6,272.1 519.1,269.2 521.1,272.8" fill="rgb(67,64,64)"/><polygon points="513.6,272.1 521.1,272.8 515.5,275.6" fill="rgb(76,73,73)"/><polygon points="519.1,269.2 524.7,266.4 526.8,270.0" fill="rgb(61,58,58)"/><polygon points="519.1,269.2 526.8,270.0 521.1,272.8" fill="rgb(86,83,83)"/><polygon points="524.7,266.4 530.2,263.5 532.5,267.2" fill="rgb(83,80,80)"/><polygon points="524.7,266.4 532.5,267.2 526.8,270.0" fill="rgb(76,73,73)"/><polygon points="530.2,263.5 535.8,260.6 538.2,264.4" fill="rgb(147,144,144)"/><polygon points="530.2,263.5 538.2,264.4 532.5,267.2" fill="rgb(133,130,130)"/><polygon points="535.8,260.6 541.4,257.8 543.9,261.6" fill="rgb(215,212,212)"/><polygon points="535.8,260.6 543.9,261.6 538.2,264.4" fill="rgb(204,201,201)"/><polygon points="541.4,257.8 546.9,254.9 549.5,258.8" fill="rgb(230,227,227)"/><polygon points="541.4,257.8 549.5,258.8 543.9,261.6" fill="rgb(242,239,239)"/><polygon points="546.9,254.9 552.5,252.0 555.2,256.0" fill="rgb(233,230,230)"/><polygon points="546.9,254.9 555.2,256.0 549.5,258.8" fill="rgb(225,222,222)"/>
<polygon points="509.8,278.4 515.5,275.6 517.4,279.1" fill="rgb(65,62,62)"/><polygon points="509.8,278.4 517.4,279.1 511.6,281.8" fill="rgb(45,42,42)"/><polygon points="515.5,275.6 521.1,272.8 523.2,276.4" fill="rgb(74,71,71)"/><polygon points="515.5,275.6 523.2,276.4 517.4,279.1" fill="rgb(58,55,55)"/><polygon points="521.1,272.8 526.8,270.0 529.0,273.6" fill="rgb(76,73,73)"/><polygon points="521.1,272.8 529.0,273.6 523.2,276.4" fill="rgb(86,83,83)"/><polygon points="526.8,270.0 532.5,267.2 534.8,270.9" fill="rgb(84,81,81)"/><polygon points="526.8,270.0 534.8,270.9 529.0,273.6" fill="rgb(86,83,83)"/><polygon points="532.5,267.2 538.2,264.4 540.5,268.2" fill="rgb(139,136,136)"/><polygon points="532.5,267.2 540.5,268.2 534.8,270.9" fill="rgb(130,127,127)"/><polygon points="538.2,264.4 543.9,261.6 546.3,265.4" fill="rgb(193,190,190)"/><polygon points="538.2,264.4 546.3,265.4 540.5,268.2" fill="rgb(196,193,193)"/><polygon points="543.9,261.6 549.5,258.8 552.1,262.7" fill="rgb(238,235,235)"/><polygon points="543.9,261.6 552.1,262.7 546.3,265.4" fill="rgb(233,230,230)"/><polygon points="549.5,258.8 555.2,256.0 557.9,260.0" fill="rgb(235,232,232)"/><polygon points="549.5,258.8 557.9,260.0 552.1,262.7" fill="rgb(246,243,243)"/>
<polygon points="511.6,281.8 517.4,279.1 519.3,282.6" fill="rgb(48,45,45)"/><polygon points="511.6,281.8 519.3,282.6 513.4,285.2" fill="rgb(51,48,48)"/><polygon points="517.4,279.1 523.2,276.4 525.2,279.9" fill="rgb(70,67,67)"/><polygon points="517.4,279.1 525.2,279.9 519.3,282.6" fill="rgb(52,49,49)"/><polygon points="523.2,276.4 529.0,273.6 531.1,277.2" fill="rgb(59,56,56)"/><polygon points="523.2,276.4 531.1,277.2 525.2,279.9" fill="rgb(69,66,66)"/><polygon points="529.0,273.6 534.8,270.9 537.0,274.6" fill="rgb(76,73,73)"/><polygon points="529.0,273.6 537.0,274.6 531.1,277.2" fill="rgb(83,80,80)"/><polygon points="534.8,270.9 540.5,268.2 542.9,271.9" fill="rgb(142,139,139)"/><polygon points="534.8,270.9 542.9,271.9 537.0,274.6" fill="rgb(152,149,149)"/><polygon points="540.5,268.2 546.3,265.4 548.8,269.3" fill="rgb(211,208,208)"/><polygon points="540.5,268.2 548.8,269.3 542.9,271.9" fill="rgb(200,197,197)"/><polygon points="546.3,265.4 552.1,262.7 554.7,266.6" fill="rgb(238,235,235)"/><polygon points="546.3,265.4 554.7,266.6 548.8,269.3" fill="rgb(234,231,231)"/><polygon points="552.1,262.7 557.9,260.0 560.6,264.0" fill="rgb(224,221,221)"/><polygon points="552.1,262.7 560.6,264.0 554.7,266.6" fill="rgb(247,244,244)"/>
<polygon points="513.4,285.2 519.3,282.6 521.2,286.0" fill="rgb(51,48,48)"/><polygon points="513.4,285.2 521.2,286.0 515.2,288.6" fill="rgb(48,45,45)"/><polygon points="519.3,282.6 525.2,279.9 527.2,283.5" fill="rgb(55,52,52)"/><polygon points="519.3,282.6 527.2,283.5 521.2,286.0" fill="rgb(70,67,67)"/><polygon points="525.2,279.9 531.1,277.2 533.2,280.9" fill="rgb(84,81,81)"/><polygon points="525.2,279.9 533.2,280.9 527.2,283.5" fill="rgb(81,78,78)"/><polygon points="531.1,277.2 537.0,274.6 539.2,278.3" fill="rgb(90,87,87)"/><polygon points="531.1,277.2 539.2,278.3 533.2,280.9" fill="rgb(86,83,83)"/><polygon points="537.0,274.6 542.9,271.9 545.3,275.7" fill="rgb(141,138,138)"/><polygon points="537.0,274.6 545.3,275.7 539.2,278.3" fill="rgb(159,156,156)"/><polygon points="542.9,271.9 548.8,269.3 551.3,273.1" fill="rgb(213,210,210)"/><polygon points="542.9,271.9 551.3,273.1 545.3,275.7" fill="rgb(207,204,204)"/><polygon points="548.8,269.3 554.7,266.6 557.3,270.6" fill="rgb(239,236,236)"/><polygon points="548.8,269.3 557.3,270.6 551.3,273.1" fill="rgb(233,230,230)"/><polygon points="554.7,266.6 560.6,264.0 563.3,268.0" fill="rgb(247,244,244)"/><polygon points="554.7,266.6 563.3,268.0 557.3,270.6" fill="rgb(241,238,238)"/>
<polygon points="515.2,288.6 521.2,286.0 523.1,289.5" fill="rgb(51,48,48)"/><polygon points="515.2,288.6 523.1,289.5 517.0,292.0" fill="rgb(70,67,67)"/><polygon points="521.2,286.0 527.2,283.5 529.2,287.0" fill="rgb(53,50,50)"/><polygon points="521.2,286.0 529.2,287.0 523.1,289.5" fill="rgb(67,64,64)"/><polygon points="527.2,283.5 533.2,280.9 535.4,284.5" fill="rgb(71,68,68)"/><polygon points="527.2,283.5 535.4,284.5 529.2,287.0" fill="rgb(67,64,64)"/><polygon points="533.2,280.9 539.2,278.3 541.5,282.0" fill="rgb(85,82,82)"/><polygon points="533.2,280.9 541.5,282.0 535.4,284.5" fill="rgb(105,102,102)"/><polygon points="539.2,278.3 545.3,275.7 547.6,279.5" fill="rgb(146,143,143)"/><polygon points="539.2,278.3 547.6,279.5 541.5,282.0" fill="rgb(161,158,158)"/><polygon points="545.3,275.7 551.3,273.1 553.8,277.0" fill="rgb(226,223,223)"/><polygon points="545.3,275.7 553.8,277.0 547.6,279.5" fill="rgb(204,201,201)"/><polygon points="551.3,273.1 557.3,270.6 559.9,274.5" fill="rgb(226,223,223)"/><polygon points="551.3,273.1 559.9,274.5 553.8,277.0" fill="rgb(238,235,235)"/><polygon points="557.3,270.6 563.3,268.0 566.0,272.0" fill="rgb(235,232,232)"/><polygon points="557.3,270.6 566.0,272.0 559.9,274.5" fill="rgb(238,235,235)"/>
<polygon points="517.0,292.0 523.1,289.5 524.9,292.8" fill="rgb(67,64,64)"/><polygon points="517.0,292.0 524.9,292.8 518.8,295.2" fill="rgb(49,46,46)"/><polygon points="523.1,289.5 529.2,287.0 531.0,290.4" fill="rgb(61,58,58)"/><polygon points="523.1,289.5 531.0,290.4 524.9,292.8" fill="rgb(61,58,58)"/><polygon points="529.2,287.0 535.4,284.5 537.2,288.0" fill="rgb(62,59,59)"/><polygon points="529.2,287.0 537.2,288.0 531.0,290.4" fill="rgb(85,82,82)"/><polygon points="535.4,284.5 541.5,282.0 543.3,285.6" fill="rgb(111,108,108)"/><polygon points="535.4,284.5 543.3,285.6 537.2,288.0" fill="rgb(109,106,106)"/><polygon points="541.5,282.0 547.6,279.5 549.4,283.2" fill="rgb(151,148,148)"/><polygon points="541.5,282.0 549.4,283.2 543.3,285.6" fill="rgb(175,172,172)"/><polygon points="547.6,279.5 553.8,277.0 555.5,280.8" fill="rgb(223,220,220)"/><polygon points="547.6,279.5 555.5,280.8 549.4,283.2" fill="rgb(215,212,212)"/><polygon points="553.8,277.0 559.9,274.5 561.7,278.4" fill="rgb(241,238,238)"/><polygon points="553.8,277.0 561.7,278.4 555.5,280.8" fill="rgb(233,230,230)"/><polygon points="559.9,274.5 566.0,272.0 567.8,276.0" fill="rgb(227,224,224)"/><polygon points="559.9,274.5 567.8,276.0 561.7,278.4" fill="rgb(223,220,220)"/>
<polygon points="518.8,295.2 524.9,292.8 526.7,296.1" fill="rgb(51,48,48)"/><polygon points="518.8,295.2 526.7,296.1 520.6,298.4" fill="rgb(46,43,43)"/><polygon points="524.9,292.8 531.0,290.4 532.9,293.8" fill="rgb(62,59,59)"/><polygon points="524.9,292.8 532.9,293.8 526.7,296.1" fill="rgb(74,71,71)"/><polygon points="531.0,290.4 537.2,288.0 539.0,291.5" fill="rgb(80,77,77)"/><polygon points="531.0,290.4 539.0,291.5 532.9,293.8" fill="rgb(85,82,82)"/><polygon points="537.2,288.0 543.3,285.6 545.1,289.2" fill="rgb(114,111,111)"/><polygon points="537.2,288.0 545.1,289.2 539.0,291.5" fill="rgb(101,98,98)"/><polygon points="543.3,285.6 549.4,283.2 551.2,286.9" fill="rgb(172,169,169)"/><polygon points="543.3,285.6 551.2,286.9 545.1,289.2" fill="rgb(169,166,166)"/><polygon points="549.4,283.2 555.5,280.8 557.4,284.6" fill="rgb(227,224,224)"/><polygon points="549.4,283.2 557.4,284.6 551.2,286.9" fill="rgb(219,216,216)"/><polygon points="555.5,280.8 561.7,278.4 563.5,282.3" fill="rgb(228,225,225)"/><polygon points="555.5,280.8 563.5,282.3 557.4,284.6" fill="rgb(238,235,235)"/><polygon points="561.7,278.4 567.8,276.0 569.6,280.0" fill="rgb(248,245,245)"/><polygon points="561.7,278.4 569.6,280.0 563.5,282.3" fill="rgb(227,224,224)"/>
<polygon points="520.6,298.4 526.7,296.1 528.5,299.4" fill="rgb(69,66,66)"/><polygon points="520.6,298.4 528.5,299.4 522.4,301.6" fill="rgb(45,42,42)"/><polygon points="526.7,296.1 532.9,293.8 534.6,297.2" fill="rgb(60,57,57)"/><polygon points="526.7,296.1 534.6,297.2 528.5,299.4" fill="rgb(60,57,57)"/><polygon points="532.9,293.8 539.0,291.5 540.8,295.0" fill="rgb(82,79,79)"/><polygon points="532.9,293.8 540.8,295.0 534.6,297.2" fill="rgb(88,85,85)"/><polygon points="539.0,291.5 545.1,289.2 546.9,292.8" fill="rgb(120,117,117)"/><polygon points="539.0,291.5 546.9,292.8 540.8,295.0" fill="rgb(108,105,105)"/><polygon points="545.1,289.2 551.2,286.9 553.0,290.6" fill="rgb(186,183,183)"/><polygon points="545.1,289.2 553.0,290.6 546.9,292.8" fill="rgb(171,168,168)"/><polygon points="551.2,286.9 557.4,284.6 559.1,288.4" fill="rgb(214,211,211)"/><polygon points="551.2,286.9 559.1,288.4 553.0,290.6" fill="rgb(233,230,230)"/><polygon points="557.4,284.6 563.5,282.3 565.3,286.2" fill="rgb(238,235,235)"/><polygon points="557.4,284.6 565.3,286.2 559.1,288.4" fill="rgb(240,237,237)"/><polygon points="563.5,282.3 569.6,280.0 571.4,284.0" fill="rgb(239,236,236)"/><polygon points="563.5,282.3 571.4,284.0 565.3,286.2" fill="rgb(248,245,245)"/>
<polygon points="522.4,301.6 528.5,299.4 530.3,302.7" fill="rgb(58,55,55)"/><polygon points="522.4,301.6 530.3,302.7 524.2,304.8" fill="rgb(68,65,65)"/><polygon points="528.5,299.4 534.6,297.2 536.5,300.6" fill="rgb(73,70,70)"/><polygon points="528.5,299.4 536.5,300.6 530.3,302.7" fill="rgb(78,75,75)"/><polygon points="534.6,297.2 540.8,295.0 542.6,298.5" fill="rgb(74,71,71)"/><polygon points="534.6,297.2 542.6,298.5 536.5,300.6" fill="rgb(83,80,80)"/><polygon points="540.8,295.0 546.9,292.8 548.7,296.4" fill="rgb(120,117,117)"/><polygon points="540.8,295.0 548.7,296.4 542.6,298.5" fill="rgb(113,110,110)"/><polygon points="546.9,292.8 553.0,290.6 554.8,294.3" fill="rgb(173,170,170)"/><polygon points="546.9,292.8 554.8,294.3 548.7,296.4" fill="rgb(184,181,181)"/><polygon points="553.0,290.6 559.1,288.4 561.0,292.2" fill="rgb(212,209,209)"/><polygon points="553.0,290.6 561.0,292.2 554.8,294.3" fill="rgb(235,232,232)"/><polygon points="559.1,288.4 565.3,286.2 567.1,290.1" fill="rgb(225,222,222)"/><polygon points="559.1,288.4 567.1,290.1 561.0,292.2" fill="rgb(221,218,218)"/><polygon points="565.3,286.2 571.4,284.0 573.2,288.0" fill="rgb(223,220,220)"/><polygon points="565.3,286.2 573.2,288.0 567.1,290.1" fill="rgb(247,244,244)"/>
<polygon points="524.2,304.8 530.3,302.7 532.1,306.0" fill="rgb(55,52,52)"/><polygon points="524.2,304.8 532.1,306.0 526.0,308.0" fill="rgb(49,46,46)"/><polygon points="530.3,302.7 536.5,300.6 538.2,304.0" fill="rgb(55,52,52)"/><polygon points="530.3,302.7 538.2,304.0 532.1,306.0" fill="rgb(55,52,52)"/><polygon points="536.5,300.6 542.6,298.5 544.4,302.0" fill="rgb(82,79,79)"/><polygon points="536.5,300.6 544.4,302.0 538.2,304.0" fill="rgb(81,78,78)"/><polygon points="542.6,298.5 548.7,296.4 550.5,300.0" fill="rgb(129,126,126)"/><polygon points="542.6,298.5 550.5,300.0 544.4,302.0" fill="rgb(130,127,127)"/><polygon points="548.7,296.4 554.8,294.3 556.6,298.0" fill="rgb(174,171,171)"/><polygon points="548.7,296.4 556.6,298.0 550.5,300.0" fill="rgb(189,186,186)"/><polygon points="554.8,294.3 561.0,292.2 562.8,296.0" fill="rgb(223,220,220)"/><polygon points="554.8,294.3 562.8,296.0 556.6,298.0" fill="rgb(235,232,232)"/><polygon points="561.0,292.2 567.1,290.1 568.9,294.0" fill="rgb(243,240,240)"/><polygon points="561.0,292.2 568.9,294.0 562.8,296.0" fill="rgb(245,242,242)"/><polygon points="567.1,290.1 573.2,288.0 575.0,292.0" fill="rgb(222,219,219)"/><polygon points="567.1,290.1 575.0,292.0 568.9,294.0" fill="rgb(245,242,242)"/>
<polygon points="526.0,308.0 532.1,306.0 533.5,309.7" fill="rgb(71,68,68)"/><polygon points="526.0,308.0 533.5,309.7 527.4,311.6" fill="rgb(72,69,69)"/><polygon points="532.1,306.0 538.2,304.0 539.5,307.7" fill="rgb(57,54,54)"/><polygon points="532.1,306.0 539.5,307.7 533.5,309.7" fill="rgb(60,57,57)"/><polygon points="538.2,304.0 544.4,302.0 545.6,305.8" fill="rgb(67,64,64)"/><polygon points="538.2,304.0 545.6,305.8 539.5,307.7" fill="rgb(65,62,62)"/><polygon points="544.4,302.0 550.5,300.0 551.7,303.8" fill="rgb(139,136,136)"/><polygon points="544.4,302.0 551.7,303.8 545.6,305.8" fill="rgb(138,135,135)"/><polygon points="550.5,300.0 556.6,298.0 557.8,301.9" fill="rgb(195,192,192)"/><polygon points="550.5,300.0 557.8,301.9 551.7,303.8" fill="rgb(201,198,198)"/><polygon points="556.6,298.0 562.8,296.0 563.9,299.9" fill="rgb(233,230,230)"/><polygon points="556.6,298.0 563.9,299.9 557.8,301.9" fill="rgb(223,220,220)"/><polygon points="562.8,296.0 568.9,294.0 569.9,297.9" fill="rgb(223,220,220)"/><polygon points="562.8,296.0 569.9,297.9 563.9,299.9" fill="rgb(223,220,220)"/><polygon points="568.9,294.0 575.0,292.0 576.0,296.0" fill="rgb(242,239,239)"/><polygon points="568.9,294.0 576.0,296.0 569.9,297.9" fill="rgb(226,223,223)"/>
<polygon points="527.4,311.6 533.5,309.7 534.8,313.3" fill="rgb(54,51,51)"/><polygon points="527.4,311.6 534.8,313.3 528.8,315.2" fill="rgb(57,54,54)"/><polygon points="533.5,309.7 539.5,307.7 540.8,311.4" fill="rgb(55,52,52)"/><polygon points="533.5,309.7 540.8,311.4 534.8,313.3" fill="rgb(62,59,59)"/><polygon points="539.5,307.7 545.6,305.8 546.9,309.5" fill="rgb(72,69,69)"/><polygon points="539.5,307.7 546.9,309.5 540.8,311.4" fill="rgb(84,81,81)"/><polygon points="545.6,305.8 551.7,303.8 552.9,307.6" fill="rgb(130,127,127)"/><polygon points="545.6,305.8 552.9,307.6 546.9,309.5" fill="rgb(129,126,126)"/><polygon points="551.7,303.8 557.8,301.9 558.9,305.7" fill="rgb(210,207,207)"/><polygon points="551.7,303.8 558.9,305.7 552.9,307.6" fill="rgb(197,194,194)"/><polygon points="557.8,301.9 563.9,299.9 565.0,303.8" fill="rgb(242,239,239)"/><polygon points="557.8,301.9 565.0,303.8 558.9,305.7" fill="rgb(235,232,232)"/><polygon points="563.9,299.9 569.9,297.9 571.0,301.9" fill="rgb(221,218,218)"/><polygon points="563.9,299.9 571.0,301.9 565.0,303.8" fill="rgb(232,229,229)"/><polygon points="569.9,297.9 576.0,296.0 577.0,300.0" fill="rgb(233,230,230)"/><polygon points="569.9,297.9 577.0,300.0 571.0,301.9" fill="rgb(242,239,239)"/>
<polygon points="528.8,315.2 534.8,313.3 536.2,316.9" fill="rgb(55,52,52)"/><polygon points="528.8,315.2 536.2,316.9 530.2,318.8" fill="rgb(65,62,62)"/><polygon points="534.8,313.3 540.8,311.4 542.2,315.1" fill="rgb(70,67,67)"/><polygon points="534.8,313.3 542.2,315.1 536.2,316.9" fill="rgb(61,58,58)"/><polygon points="540.8,311.4 546.9,309.5 548.1,313.2" fill="rgb(89,86,86)"/><polygon points="540.8,311.4 548.1,313.2 542.2,315.1" fill="rgb(68,65,65)"/><polygon points="546.9,309.5 552.9,307.6 554.1,311.4" fill="rgb(148,145,145)"/><polygon points="546.9,309.5 554.1,311.4 548.1,313.2" fill="rgb(130,127,127)"/><polygon points="552.9,307.6 558.9,305.7 560.1,309.6" fill="rgb(188,185,185)"/><polygon points="552.9,307.6 560.1,309.6 554.1,311.4" fill="rgb(194,191,191)"/><polygon points="558.9,305.7 565.0,303.8 566.0,307.7" fill="rgb(242,239,239)"/><polygon points="558.9,305.7 566.0,307.7 560.1,309.6" fill="rgb(248,245,245)"/><polygon points="565.0,303.8 571.0,301.9 572.0,305.9" fill="rgb(221,218,218)"/><polygon points="565.0,303.8 572.0,305.9 566.0,307.7" fill="rgb(234,231,231)"/><polygon points="571.0,301.9 577.0,300.0 578.0,304.0" fill="rgb(234,231,231)"/><polygon points="571.0,301.9 578.0,304.0 572.0,305.9" fill="rgb(243,240,240)"/>
<polygon points="530.2,318.8 536.2,316.9 537.5,320.6" fill="rgb(51,48,48)"/><polygon points="530.2,318.8 537.5,320.6 531.6,322.4" fill="rgb(59,56,56)"/><polygon points="536.2,316.9 542.2,315.1 543.5,318.8" fill="rgb(65,62,62)"/><polygon points="536.2,316.9 543.5,318.8 537.5,320.6" fill="rgb(79,76,76)"/><polygon points="542.2,315.1 548.1,313.2 549.4,317.0" fill="rgb(75,72,72)"/><polygon points="542.2,315.1 549.4,317.0 543.5,318.8" fill="rgb(95,92,92)"/><polygon points="548.1,313.2 554.1,311.4 555.3,315.2" fill="rgb(139,136,136)"/><polygon points="548.1,313.2 555.3,315.2 549.4,317.0" fill="rgb(137,134,134)"/><polygon points="554.1,311.4 560.1,309.6 561.2,313.4" fill="rgb(211,208,208)"/><polygon points="554.1,311.4 561.2,313.4 555.3,315.2" fill="rgb(206,203,203)"/><polygon points="560.1,309.6 566.0,307.7 567.1,311.6" fill="rgb(224,221,221)"/><polygon points="560.1,309.6 567.1,311.6 561.2,313.4" fill="rgb(238,235,235)"/><polygon points="566.0,307.7 572.0,305.9 573.1,309.8" fill="rgb(223,220,220)"/><polygon points="566.0,307.7 573.1,309.8 567.1,311.6" fill="rgb(243,240,240)"/><polygon points="572.0,305.9 578.0,304.0 579.0,308.0" fill="rgb(240,237,237)"/><polygon points="572.0,305.9 579.0,308.0 573.1,309.8" fill="rgb(243,240,240)"/>
<polygon points="531.6,322.4 537.5,320.6 538.9,324.2" fill="rgb(63,60,60)"/><polygon points="531.6,322.4 538.9,324.2 533.0,326.0" fill="rgb(56,53,53)"/><polygon points="537.5,320.6 543.5,318.8 544.8,322.5" fill="rgb(67,64,64)"/><polygon points="537.5,320.6 544.8,322.5 538.9,324.2" fill="rgb(67,64,64)"/><polygon points="543.5,318.8 549.4,317.0 550.6,320.8" fill="rgb(97,94,94)"/><polygon points="543.5,318.8 550.6,320.8 544.8,322.5" fill="rgb(74,71,71)"/><polygon points="549.4,317.0 555.3,315.2 556.5,319.0" fill="rgb(159,156,156)"/><polygon points="549.4,317.0 556.5,319.0 550.6,320.8" fill="rgb(135,132,132)"/><polygon points="555.3,315.2 561.2,313.4 562.4,317.2" fill="rgb(199,196,196)"/><polygon points="555.3,315.2 562.4,317.2 556.5,319.0" fill="rgb(201,198,198)"/><polygon points="561.2,313.4 567.1,311.6 568.2,315.5" fill="rgb(246,243,243)"/><polygon points="561.2,313.4 568.2,315.5 562.4,317.2" fill="rgb(235,232,232)"/><polygon points="567.1,311.6 573.1,309.8 574.1,313.8" fill="rgb(231,228,228)"/><polygon points="567.1,311.6 574.1,313.8 568.2,315.5" fill="rgb(245,242,242)"/><polygon points="573.1,309.8 579.0,308.0 580.0,312.0" fill="rgb(227,224,224)"/><polygon points="573.1,309.8 580.0,312.0 574.1,313.8" fill="rgb(233,230,230)"/>
<polygon points="533.0,326.0 538.9,324.2 539.7,328.1" fill="rgb(61,58,58)"/><polygon points="533.0,326.0 539.7,328.1 533.8,329.8" fill="rgb(67,64,64)"/><polygon points="538.9,324.2 544.8,322.5 545.5,326.4" fill="rgb(77,74,74)"/><polygon points="538.9,324.2 545.5,326.4 539.7,328.1" fill="rgb(74,71,71)"/><polygon points="544.8,322.5 550.6,320.8 551.4,324.6" fill="rgb(82,79,79)"/><polygon points="544.8,322.5 551.4,324.6 545.5,326.4" fill="rgb(81,78,78)"/><polygon points="550.6,320.8 556.5,319.0 557.3,322.9" fill="rgb(139,136,136)"/><polygon points="550.6,320.8 557.3,322.9 551.4,324.6" fill="rgb(158,155,155)"/><polygon points="556.5,319.0 562.4,317.2 563.2,321.2" fill="rgb(212,209,209)"/><polygon points="556.5,319.0 563.2,321.2 557.3,322.9" fill="rgb(214,211,211)"/><polygon points="562.4,317.2 568.2,315.5 569.0,319.4" fill="rgb(225,222,222)"/><polygon points="562.4,317.2 569.0,319.4 563.2,321.2" fill="rgb(233,230,230)"/><polygon points="568.2,315.5 574.1,313.8 574.9,317.7" fill="rgb(242,239,239)"/><polygon points="568.2,315.5 574.9,317.7 569.0,319.4" fill="rgb(237,234,234)"/><polygon points="574.1,313.8 580.0,312.0 580.8,316.0" fill="rgb(224,221,221)"/><polygon points="574.1,313.8 580.8,316.0 574.9,317.7" fill="rgb(233,230,230)"/>
<polygon points="533.8,329.8 539.7,328.1 540.5,331.9" fill="rgb(70,67,67)"/><polygon points="533.8,329.8 540.5,331.9 534.6,333.6" fill="rgb(52,49,49)"/><polygon points="539.7,328.1 545.5,326.4 546.4,330.2" fill="rgb(61,58,58)"/><polygon points="539.7,328.1 546.4,330.2 540.5,331.9" fill="rgb(65,62,62)"/><polygon points="545.5,326.4 551.4,324.6 552.2,328.5" fill="rgb(91,88,88)"/><polygon points="545.5,326.4 552.2,328.5 546.4,330.2" fill="rgb(95,92,92)"/><polygon points="551.4,324.6 557.3,322.9 558.1,326.8" fill="rgb(139,136,136)"/><polygon points="551.4,324.6 558.1,326.8 552.2,328.5" fill="rgb(139,136,136)"/><polygon points="557.3,322.9 563.2,321.2 564.0,325.1" fill="rgb(201,198,198)"/><polygon points="557.3,322.9 564.0,325.1 558.1,326.8" fill="rgb(203,200,200)"/><polygon points="563.2,321.2 569.0,319.4 569.9,323.4" fill="rgb(235,232,232)"/><polygon points="563.2,321.2 569.9,323.4 564.0,325.1" fill="rgb(225,222,222)"/><polygon points="569.0,319.4 574.9,317.7 575.7,321.7" fill="rgb(230,227,227)"/><polygon points="569.0,319.4 575.7,321.7 569.9,323.4" fill="rgb(226,223,223)"/><polygon points="574.9,317.7 580.8,316.0 581.6,320.0" fill="rgb(248,245,245)"/><polygon points="574.9,317.7 581.6,320.0 575.7,321.7" fill="rgb(241,238,238)"/>
<polygon points="534.6,333.6 540.5,331.9 541.3,335.7" fill="rgb(49,46,46)"/><polygon points="534.6,333.6 541.3,335.7 535.4,337.4" fill="rgb(73,70,70)"/><polygon points="540.5,331.9 546.4,330.2 547.1,334.0" fill="rgb(59,56,56)"/><polygon points="540.5,331.9 547.1,334.0 541.3,335.7" fill="rgb(67,64,64)"/><polygon points="546.4,330.2 552.2,328.5 553.0,332.4" fill="rgb(99,96,96)"/><polygon points="546.4,330.2 553.0,332.4 547.1,334.0" fill="rgb(94,91,91)"/><polygon points="552.2,328.5 558.1,326.8 558.9,330.7" fill="rgb(155,152,152)"/><polygon points="552.2,328.5 558.9,330.7 553.0,332.4" fill="rgb(146,143,143)"/><polygon points="558.1,326.8 564.0,325.1 564.8,329.0" fill="rgb(199,196,196)"/><polygon points="558.1,326.8 564.8,329.0 558.9,330.7" fill="rgb(211,208,208)"/><polygon points="564.0,325.1 569.9,323.4 570.6,327.4" fill="rgb(223,220,220)"/><polygon points="564.0,325.1 570.6,327.4 564.8,329.0" fill="rgb(226,223,223)"/><polygon points="569.9,323.4 575.7,321.7 576.5,325.7" fill="rgb(231,228,228)"/><polygon points="569.9,323.4 576.5,325.7 570.6,327.4" fill="rgb(221,218,218)"/><polygon points="575.7,321.7 581.6,320.0 582.4,324.0" fill="rgb(232,229,229)"/><polygon points="575.7,321.7 582.4,324.0 576.5,325.7" fill="rgb(243,240,240)"/>
<polygon points="535.4,337.4 541.3,335.7 542.1,339.6" fill="rgb(65,62,62)"/><polygon points="535.4,337.4 542.1,339.6 536.2,341.2" fill="rgb(60,57,57)"/><polygon points="541.3,335.7 547.1,334.0 548.0,337.9" fill="rgb(74,71,71)"/><polygon points="541.3,335.7 548.0,337.9 542.1,339.6" fill="rgb(69,66,66)"/><polygon points="547.1,334.0 553.0,332.4 553.8,336.2" fill="rgb(76,73,73)"/><polygon points="547.1,334.0 553.8,336.2 548.0,337.9" fill="rgb(89,86,86)"/><polygon points="553.0,332.4 558.9,330.7 559.7,334.6" fill="rgb(146,143,143)"/><polygon points="553.0,332.4 559.7,334.6 553.8,336.2" fill="rgb(155,152,152)"/><polygon points="558.9,330.7 564.8,329.0 565.6,332.9" fill="rgb(219,216,216)"/><polygon points="558.9,330.7 565.6,332.9 559.7,334.6" fill="rgb(206,203,203)"/><polygon points="564.8,329.0 570.6,327.4 571.5,331.3" fill="rgb(237,234,234)"/><polygon points="564.8,329.0 571.5,331.3 565.6,332.9" fill="rgb(241,238,238)"/><polygon points="570.6,327.4 576.5,325.7 577.3,329.6" fill="rgb(232,229,229)"/><polygon points="570.6,327.4 577.3,329.6 571.5,331.3" fill="rgb(227,224,224)"/><polygon points="576.5,325.7 582.4,324.0 583.2,328.0" fill="rgb(241,238,238)"/><polygon points="576.5,325.7 583.2,328.0 577.3,329.6" fill="rgb(245,242,242)"/>
<polygon points="536.2,341.2 542.1,339.6 542.9,343.4" fill="rgb(67,64,64)"/><polygon points="536.2,341.2 542.9,343.4 537.0,345.0" fill="rgb(65,62,62)"/><polygon points="542.1,339.6 548.0,337.9 548.8,341.8" fill="rgb(80,77,77)"/><polygon points="542.1,339.6 548.8,341.8 542.9,343.4" fill="rgb(75,72,72)"/><polygon points="548.0,337.9 553.8,336.2 554.6,340.1" fill="rgb(90,87,87)"/><polygon points="548.0,337.9 554.6,340.1 548.8,341.8" fill="rgb(84,81,81)"/><polygon points="553.8,336.2 559.7,334.6 560.5,338.5" fill="rgb(143,140,140)"/><polygon points="553.8,336.2 560.5,338.5 554.6,340.1" fill="rgb(152,149,149)"/><polygon points="559.7,334.6 565.6,332.9 566.4,336.9" fill="rgb(196,193,193)"/><polygon points="559.7,334.6 566.4,336.9 560.5,338.5" fill="rgb(205,202,202)"/><polygon points="565.6,332.9 571.5,331.3 572.2,335.2" fill="rgb(242,239,239)"/><polygon points="565.6,332.9 572.2,335.2 566.4,336.9" fill="rgb(240,237,237)"/><polygon points="571.5,331.3 577.3,329.6 578.1,333.6" fill="rgb(238,235,235)"/><polygon points="571.5,331.3 578.1,333.6 572.2,335.2" fill="rgb(228,225,225)"/><polygon points="577.3,329.6 583.2,328.0 584.0,332.0" fill="rgb(232,229,229)"/><polygon points="577.3,329.6 584.0,332.0 578.1,333.6" fill="rgb(233,230,230)"/>
<polygon points="537.0,345.0 542.9,343.4 543.2,346.8" fill="rgb(63,60,60)"/><polygon points="537.0,345.0 543.2,346.8 537.4,348.4" fill="rgb(57,54,54)"/><polygon points="542.9,343.4 548.8,341.8 549.0,345.2" fill="rgb(75,72,72)"/><polygon points="542.9,343.4 549.0,345.2 543.2,346.8" fill="rgb(82,79,79)"/><polygon points="548.8,341.8 554.6,340.1 554.8,343.6" fill="rgb(77,74,74)"/><polygon points="548.8,341.8 554.8,343.6 549.0,345.2" fill="rgb(90,87,87)"/><polygon points="554.6,340.1 560.5,338.5 560.5,342.0" fill="rgb(156,153,153)"/><polygon points="554.6,340.1 560.5,342.0 554.8,343.6" fill="rgb(145,142,142)"/><polygon points="560.5,338.5 566.4,336.9 566.3,340.4" fill="rgb(207,204,204)"/><polygon points="560.5,338.5 566.3,340.4 560.5,342.0" fill="rgb(221,218,218)"/><polygon points="566.4,336.9 572.2,335.2 572.1,338.8" fill="rgb(222,219,219)"/><polygon points="566.4,336.9 572.1,338.8 566.3,340.4" fill="rgb(236,233,233)"/><polygon points="572.2,335.2 578.1,333.6 577.9,337.2" fill="rgb(225,222,222)"/><polygon points="572.2,335.2 577.9,337.2 572.1,338.8" fill="rgb(242,239,239)"/><polygon points="578.1,333.6 584.0,332.0 583.7,335.6" fill="rgb(247,244,244)"/><polygon points="578.1,333.6 583.7,335.6 577.9,337.2" fill="rgb(235,232,232)"/>
<polygon points="537.4,348.4 543.2,346.8 543.5,350.2" fill="rgb(49,46,46)"/><polygon points="537.4,348.4 543.5,350.2 537.8,351.8" fill="rgb(62,59,59)"/><polygon points="543.2,346.8 549.0,345.2 549.2,348.6" fill="rgb(71,68,68)"/><polygon points="543.2,346.8 549.2,348.6 543.5,350.2" fill="rgb(76,73,73)"/><polygon points="549.0,345.2 554.8,343.6 554.9,347.1" fill="rgb(86,83,83)"/><polygon points="549.0,345.2 554.9,347.1 549.2,348.6" fill="rgb(90,87,87)"/><polygon points="554.8,343.6 560.5,342.0 560.6,345.5" fill="rgb(157,154,154)"/><polygon points="554.8,343.6 560.6,345.5 554.9,347.1" fill="rgb(149,146,146)"/><polygon points="560.5,342.0 566.3,340.4 566.3,343.9" fill="rgb(205,202,202)"/><polygon points="560.5,342.0 566.3,343.9 560.6,345.5" fill="rgb(220,217,217)"/><polygon points="566.3,340.4 572.1,338.8 572.0,342.4" fill="rgb(226,223,223)"/><polygon points="566.3,340.4 572.0,342.4 566.3,343.9" fill="rgb(240,237,237)"/><polygon points="572.1,338.8 577.9,337.2 577.7,340.8" fill="rgb(231,228,228)"/><polygon points="572.1,338.8 577.7,340.8 572.0,342.4" fill="rgb(242,239,239)"/><polygon points="577.9,337.2 583.7,335.6 583.4,339.2" fill="rgb(224,221,221)"/><polygon points="577.9,337.2 583.4,339.2 577.7,340.8" fill="rgb(248,245,245)"/>
<polygon points="537.8,351.8 543.5,350.2 543.8,353.6" fill="rgb(56,53,53)"/><polygon points="537.8,351.8 543.8,353.6 538.2,355.2" fill="rgb(47,44,44)"/><polygon points="543.5,350.2 549.2,348.6 549.4,352.1" fill="rgb(64,61,61)"/><polygon points="543.5,350.2 549.4,352.1 543.8,353.6" fill="rgb(67,64,64)"/><polygon points="549.2,348.6 554.9,347.1 555.0,350.6" fill="rgb(72,69,69)"/><polygon points="549.2,348.6 555.0,350.6 549.4,352.1" fill="rgb(83,80,80)"/><polygon points="554.9,347.1 560.6,345.5 560.7,349.0" fill="rgb(146,143,143)"/><polygon points="554.9,347.1 560.7,349.0 555.0,350.6" fill="rgb(154,151,151)"/><polygon points="560.6,345.5 566.3,343.9 566.3,347.4" fill="rgb(203,200,200)"/><polygon points="560.6,345.5 566.3,347.4 560.7,349.0" fill="rgb(201,198,198)"/><polygon points="566.3,343.9 572.0,342.4 571.9,345.9" fill="rgb(227,224,224)"/><polygon points="566.3,343.9 571.9,345.9 566.3,347.4" fill="rgb(241,238,238)"/><polygon points="572.0,342.4 577.7,340.8 577.5,344.4" fill="rgb(247,244,244)"/><polygon points="572.0,342.4 577.5,344.4 571.9,345.9" fill="rgb(235,232,232)"/><polygon points="577.7,340.8 583.4,339.2 583.1,342.8" fill="rgb(227,224,224)"/><polygon points="577.7,340.8 583.1,342.8 577.5,344.4" fill="rgb(243,240,240)"/>
<polygon points="538.2,355.2 543.8,353.6 544.1,357.1" fill="rgb(57,54,54)"/><polygon points="538.2,355.2 544.1,357.1 538.6,358.6" fill="rgb(52,49,49)"/><polygon points="543.8,353.6 549.4,352.1 549.6,355.6" fill="rgb(60,57,57)"/><polygon points="543.8,353.6 549.6,355.6 544.1,357.1" fill="rgb(78,75,75)"/><polygon points="549.4,352.1 555.0,350.6 555.2,354.0" fill="rgb(94,91,91)"/><polygon points="549.4,352.1 555.2,354.0 549.6,355.6" fill="rgb(89,86,86)"/><polygon points="555.0,350.6 560.7,349.0 560.7,352.5" fill="rgb(146,143,143)"/><polygon points="555.0,350.6 560.7,352.5 555.2,354.0" fill="rgb(148,145,145)"/><polygon points="560.7,349.0 566.3,347.4 566.2,351.0" fill="rgb(197,194,194)"/><polygon points="560.7,349.0 566.2,351.0 560.7,352.5" fill="rgb(218,215,215)"/><polygon points="566.3,347.4 571.9,345.9 571.8,349.4" fill="rgb(227,224,224)"/><polygon points="566.3,347.4 571.8,349.4 566.2,351.0" fill="rgb(235,232,232)"/><polygon points="571.9,345.9 577.5,344.4 577.3,347.9" fill="rgb(240,237,237)"/><polygon points="571.9,345.9 577.3,347.9 571.8,349.4" fill="rgb(240,237,237)"/><polygon points="577.5,344.4 583.1,342.8 582.8,346.4" fill="rgb(231,228,228)"/><polygon points="577.5,344.4 582.8,346.4 577.3,347.9" fill="rgb(226,223,223)"/>
<polygon points="538.6,358.6 544.1,357.1 544.4,360.5" fill="rgb(61,58,58)"/><polygon points="538.6,358.6 544.4,360.5 539.0,362.0" fill="rgb(49,46,46)"/><polygon points="544.1,357.1 549.6,355.6 549.9,359.0" fill="rgb(80,77,77)"/><polygon points="544.1,357.1 549.9,359.0 544.4,360.5" fill="rgb(66,63,63)"/><polygon points="549.6,355.6 555.2,354.0 555.3,357.5" fill="rgb(95,92,92)"/><polygon points="549.6,355.6 555.3,357.5 549.9,359.0" fill="rgb(79,76,76)"/><polygon points="555.2,354.0 560.7,352.5 560.8,356.0" fill="rgb(140,137,137)"/><polygon points="555.2,354.0 560.8,356.0 555.3,357.5" fill="rgb(137,134,134)"/><polygon points="560.7,352.5 566.2,351.0 566.2,354.5" fill="rgb(196,193,193)"/><polygon points="560.7,352.5 566.2,354.5 560.8,356.0" fill="rgb(190,187,187)"/><polygon points="566.2,351.0 571.8,349.4 571.6,353.0" fill="rgb(210,207,207)"/><polygon points="566.2,351.0 571.6,353.0 566.2,354.5" fill="rgb(230,227,227)"/><polygon points="571.8,349.4 577.3,347.9 577.1,351.5" fill="rgb(219,216,216)"/><polygon points="571.8,349.4 577.1,351.5 571.6,353.0" fill="rgb(218,215,215)"/><polygon points="577.3,347.9 582.8,346.4 582.5,350.0" fill="rgb(221,218,218)"/><polygon points="577.3,347.9 582.5,350.0 577.1,351.5" fill="rgb(226,223,223)"/>
<polygon points="539.0,362.0 544.4,360.5 544.5,363.7" fill="rgb(58,55,55)"/><polygon points="539.0,362.0 544.5,363.7 539.2,365.2" fill="rgb(64,61,61)"/><polygon points="544.4,360.5 549.9,359.0 549.8,362.2" fill="rgb(75,72,72)"/><polygon points="544.4,360.5 549.8,362.2 544.5,363.7" fill="rgb(67,64,64)"/><polygon points="549.9,359.0 555.3,357.5 555.1,360.7" fill="rgb(98,95,95)"/><polygon points="549.9,359.0 555.1,360.7 549.8,362.2" fill="rgb(95,92,92)"/><polygon points="555.3,357.5 560.8,356.0 560.4,359.2" fill="rgb(128,125,125)"/><polygon points="555.3,357.5 560.4,359.2 555.1,360.7" fill="rgb(150,147,147)"/><polygon points="560.8,356.0 566.2,354.5 565.6,357.7" fill="rgb(204,201,201)"/><polygon points="560.8,356.0 565.6,357.7 560.4,359.2" fill="rgb(200,197,197)"/><polygon points="566.2,354.5 571.6,353.0 570.9,356.2" fill="rgb(207,204,204)"/><polygon points="566.2,354.5 570.9,356.2 565.6,357.7" fill="rgb(226,223,223)"/><polygon points="571.6,353.0 577.1,351.5 576.2,354.7" fill="rgb(223,220,220)"/><polygon points="571.6,353.0 576.2,354.7 570.9,356.2" fill="rgb(205,202,202)"/><polygon points="577.1,351.5 582.5,350.0 581.5,353.2" fill="rgb(207,204,204)"/><polygon points="577.1,351.5 581.5,353.2 576.2,354.7" fill="rgb(233,230,230)"/>
<polygon points="539.2,365.2 544.5,363.7 544.5,366.9" fill="rgb(64,61,61)"/><polygon points="539.2,365.2 544.5,366.9 539.4,368.4" fill="rgb(53,50,50)"/><polygon points="544.5,363.7 549.8,362.2 549.7,365.4" fill="rgb(59,56,56)"/><polygon points="544.5,363.7 549.7,365.4 544.5,366.9" fill="rgb(61,58,58)"/><polygon points="549.8,362.2 555.1,360.7 554.8,363.9" fill="rgb(78,75,75)"/><polygon points="549.8,362.2 554.8,363.9 549.7,365.4" fill="rgb(93,90,90)"/><polygon points="555.1,360.7 560.4,359.2 560.0,362.4" fill="rgb(133,130,130)"/><polygon points="555.1,360.7 560.0,362.4 554.8,363.9" fill="rgb(127,124,124)"/><polygon points="560.4,359.2 565.6,357.7 565.1,360.9" fill="rgb(198,195,195)"/><polygon points="560.4,359.2 565.1,360.9 560.0,362.4" fill="rgb(195,192,192)"/><polygon points="565.6,357.7 570.9,356.2 570.2,359.4" fill="rgb(201,198,198)"/><polygon points="565.6,357.7 570.2,359.4 565.1,360.9" fill="rgb(221,218,218)"/><polygon points="570.9,356.2 576.2,354.7 575.4,357.9" fill="rgb(216,213,213)"/><polygon points="570.9,356.2 575.4,357.9 570.2,359.4" fill="rgb(221,218,218)"/><polygon points="576.2,354.7 581.5,353.2 580.5,356.4" fill="rgb(220,217,217)"/><polygon points="576.2,354.7 580.5,356.4 575.4,357.9" fill="rgb(226,223,223)"/>
<polygon points="539.4,368.4 544.5,366.9 544.6,370.1" fill="rgb(68,65,65)"/><polygon points="539.4,368.4 544.6,370.1 539.6,371.6" fill="rgb(69,66,66)"/><polygon points="544.5,366.9 549.7,365.4 549.6,368.6" fill="rgb(62,59,59)"/><polygon points="544.5,366.9 549.6,368.6 544.6,370.1" fill="rgb(76,73,73)"/><polygon points="549.7,365.4 554.8,363.9 554.6,367.1" fill="rgb(86,83,83)"/><polygon points="549.7,365.4 554.6,367.1 549.6,368.6" fill="rgb(92,89,89)"/><polygon points="554.8,363.9 560.0,362.4 559.5,365.6" fill="rgb(132,129,129)"/><polygon points="554.8,363.9 559.5,365.6 554.6,367.1" fill="rgb(145,142,142)"/><polygon points="560.0,362.4 565.1,360.9 564.5,364.1" fill="rgb(182,179,179)"/><polygon points="560.0,362.4 564.5,364.1 559.5,365.6" fill="rgb(174,171,171)"/><polygon points="565.1,360.9 570.2,359.4 569.5,362.6" fill="rgb(196,193,193)"/><polygon points="565.1,360.9 569.5,362.6 564.5,364.1" fill="rgb(193,190,190)"/><polygon points="570.2,359.4 575.4,357.9 574.5,361.1" fill="rgb(206,203,203)"/><polygon points="570.2,359.4 574.5,361.1 569.5,362.6" fill="rgb(194,191,191)"/><polygon points="575.4,357.9 580.5,356.4 579.5,359.6" fill="rgb(209,206,206)"/><polygon points="575.4,357.9 579.5,359.6 574.5,361.1" fill="rgb(200,197,197)"/>
<polygon points="539.6,371.6 544.6,370.1 544.6,373.3" fill="rgb(60,57,57)"/><polygon points="539.6,371.6 544.6,373.3 539.8,374.8" fill="rgb(60,57,57)"/><polygon points="544.6,370.1 549.6,368.6 549.5,371.8" fill="rgb(72,69,69)"/><polygon points="544.6,370.1 549.5,371.8 544.6,373.3" fill="rgb(81,78,78)"/><polygon points="549.6,368.6 554.6,367.1 554.3,370.3" fill="rgb(71,68,68)"/><polygon points="549.6,368.6 554.3,370.3 549.5,371.8" fill="rgb(95,92,92)"/><polygon points="554.6,367.1 559.5,365.6 559.1,368.8" fill="rgb(130,127,127)"/><polygon points="554.6,367.1 559.1,368.8 554.3,370.3" fill="rgb(133,130,130)"/><polygon points="559.5,365.6 564.5,364.1 564.0,367.3" fill="rgb(179,176,176)"/><polygon points="559.5,365.6 564.0,367.3 559.1,368.8" fill="rgb(184,181,181)"/><polygon points="564.5,364.1 569.5,362.6 568.8,365.8" fill="rgb(193,190,190)"/><polygon points="564.5,364.1 568.8,365.8 564.0,367.3" fill="rgb(194,191,191)"/><polygon points="569.5,362.6 574.5,361.1 573.7,364.3" fill="rgb(213,210,210)"/><polygon points="569.5,362.6 573.7,364.3 568.8,365.8" fill="rgb(188,185,185)"/><polygon points="574.5,361.1 579.5,359.6 578.5,362.8" fill="rgb(208,205,205)"/><polygon points="574.5,361.1 578.5,362.8 573.7,364.3" fill="rgb(208,205,205)"/>
<polygon points="539.8,374.8 544.6,373.3 544.7,376.5" fill="rgb(47,44,44)"/><polygon points="539.8,374.8 544.7,376.5 540.0,378.0" fill="rgb(63,60,60)"/><polygon points="544.6,373.3 549.5,371.8 549.4,375.0" fill="rgb(76,73,73)"/><polygon points="544.6,373.3 549.4,375.0 544.7,376.5" fill="rgb(83,80,80)"/><polygon points="549.5,371.8 554.3,370.3 554.1,373.5" fill="rgb(80,77,77)"/><polygon points="549.5,371.8 554.1,373.5 549.4,375.0" fill="rgb(99,96,96)"/><polygon points="554.3,370.3 559.1,368.8 558.8,372.0" fill="rgb(128,125,125)"/><polygon points="554.3,370.3 558.8,372.0 554.1,373.5" fill="rgb(127,124,124)"/><polygon points="559.1,368.8 564.0,367.3 563.4,370.5" fill="rgb(179,176,176)"/><polygon points="559.1,368.8 563.4,370.5 558.8,372.0" fill="rgb(155,152,152)"/><polygon points="564.0,367.3 568.8,365.8 568.1,369.0" fill="rgb(195,192,192)"/><polygon points="564.0,367.3 568.1,369.0 563.4,370.5" fill="rgb(193,190,190)"/><polygon points="568.8,365.8 573.7,364.3 572.8,367.5" fill="rgb(189,186,186)"/><polygon points="568.8,365.8 572.8,367.5 568.1,369.0" fill="rgb(204,201,201)"/><polygon points="573.7,364.3 578.5,362.8 577.5,366.0" fill="rgb(195,192,192)"/><polygon points="573.7,364.3 577.5,366.0 572.8,367.5" fill="rgb(198,195,195)"/>
<polygon points="540.0,378.0 544.7,376.5 545.0,378.9" fill="rgb(61,58,58)"/><polygon points="540.0,378.0 545.0,378.9 540.6,380.4" fill="rgb(68,65,65)"/><polygon points="544.7,376.5 549.4,375.0 549.4,377.4" fill="rgb(63,60,60)"/><polygon points="544.7,376.5 549.4,377.4 545.0,378.9" fill="rgb(69,66,66)"/><polygon points="549.4,375.0 554.1,373.5 553.7,376.0" fill="rgb(83,80,80)"/><polygon points="549.4,375.0 553.7,376.0 549.4,377.4" fill="rgb(87,84,84)"/><polygon points="554.1,373.5 558.8,372.0 558.1,374.5" fill="rgb(134,131,131)"/><polygon points="554.1,373.5 558.1,374.5 553.7,376.0" fill="rgb(119,116,116)"/><polygon points="558.8,372.0 563.4,370.5 562.5,373.0" fill="rgb(171,168,168)"/><polygon points="558.8,372.0 562.5,373.0 558.1,374.5" fill="rgb(160,157,157)"/><polygon points="563.4,370.5 568.1,369.0 566.9,371.6" fill="rgb(182,179,179)"/><polygon points="563.4,370.5 566.9,371.6 562.5,373.0" fill="rgb(176,173,173)"/><polygon points="568.1,369.0 572.8,367.5 571.2,370.1" fill="rgb(188,185,185)"/><polygon points="568.1,369.0 571.2,370.1 566.9,371.6" fill="rgb(201,198,198)"/><polygon points="572.8,367.5 577.5,366.0 575.6,368.6" fill="rgb(197,194,194)"/><polygon points="572.8,367.5 575.6,368.6 571.2,370.1" fill="rgb(201,198,198)"/>
<polygon points="540.6,380.4 545.0,378.9 545.3,381.4" fill="rgb(55,52,52)"/><polygon points="540.6,380.4 545.3,381.4 541.2,382.8" fill="rgb(55,52,52)"/><polygon points="545.0,378.9 549.4,377.4 549.3,379.9" fill="rgb(66,63,63)"/><polygon points="545.0,378.9 549.3,379.9 545.3,381.4" fill="rgb(74,71,71)"/><polygon points="549.4,377.4 553.7,376.0 553.4,378.4" fill="rgb(89,86,86)"/><polygon points="549.4,377.4 553.4,378.4 549.3,379.9" fill="rgb(93,90,90)"/><polygon points="553.7,376.0 558.1,374.5 557.5,377.0" fill="rgb(108,105,105)"/><polygon points="553.7,376.0 557.5,377.0 553.4,378.4" fill="rgb(128,125,125)"/><polygon points="558.1,374.5 562.5,373.0 561.5,375.6" fill="rgb(167,164,164)"/><polygon points="558.1,374.5 561.5,375.6 557.5,377.0" fill="rgb(158,155,155)"/><polygon points="562.5,373.0 566.9,371.6 565.6,374.1" fill="rgb(163,160,160)"/><polygon points="562.5,373.0 565.6,374.1 561.5,375.6" fill="rgb(170,167,167)"/><polygon points="566.9,371.6 571.2,370.1 569.6,372.6" fill="rgb(168,165,165)"/><polygon points="566.9,371.6 569.6,372.6 565.6,374.1" fill="rgb(173,170,170)"/><polygon points="571.2,370.1 575.6,368.6 573.7,371.2" fill="rgb(199,196,196)"/><polygon points="571.2,370.1 573.7,371.2 569.6,372.6" fill="rgb(191,188,188)"/>
<polygon points="541.2,382.8 545.3,381.4 545.5,383.8" fill="rgb(65,62,62)"/><polygon points="541.2,382.8 545.5,383.8 541.8,385.2" fill="rgb(68,65,65)"/><polygon points="545.3,381.4 549.3,379.9 549.3,382.4" fill="rgb(83,80,80)"/><polygon points="545.3,381.4 549.3,382.4 545.5,383.8" fill="rgb(75,72,72)"/><polygon points="549.3,379.9 553.4,378.4 553.0,380.9" fill="rgb(88,85,85)"/><polygon points="549.3,379.9 553.0,380.9 549.3,382.4" fill="rgb(88,85,85)"/><polygon points="553.4,378.4 557.5,377.0 556.8,379.5" fill="rgb(124,121,121)"/><polygon points="553.4,378.4 556.8,379.5 553.0,380.9" fill="rgb(121,118,118)"/><polygon points="557.5,377.0 561.5,375.6 560.5,378.1" fill="rgb(155,152,152)"/><polygon points="557.5,377.0 560.5,378.1 556.8,379.5" fill="rgb(142,139,139)"/><polygon points="561.5,375.6 565.6,374.1 564.3,376.6" fill="rgb(173,170,170)"/><polygon points="561.5,375.6 564.3,376.6 560.5,378.1" fill="rgb(167,164,164)"/><polygon points="565.6,374.1 569.6,372.6 568.0,375.2" fill="rgb(183,180,180)"/><polygon points="565.6,374.1 568.0,375.2 564.3,376.6" fill="rgb(164,161,161)"/><polygon points="569.6,372.6 573.7,371.2 571.8,373.8" fill="rgb(173,170,170)"/><polygon points="569.6,372.6 571.8,373.8 568.0,375.2" fill="rgb(169,166,166)"/>
<polygon points="541.8,385.2 545.5,383.8 545.8,386.2" fill="rgb(68,65,65)"/><polygon points="541.8,385.2 545.8,386.2 542.4,387.6" fill="rgb(72,69,69)"/><polygon points="545.5,383.8 549.3,382.4 549.3,384.8" fill="rgb(76,73,73)"/><polygon points="545.5,383.8 549.3,384.8 545.8,386.2" fill="rgb(68,65,65)"/><polygon points="549.3,382.4 553.0,380.9 552.7,383.4" fill="rgb(94,91,91)"/><polygon points="549.3,382.4 552.7,383.4 549.3,384.8" fill="rgb(93,90,90)"/><polygon points="553.0,380.9 556.8,379.5 556.1,382.0" fill="rgb(117,114,114)"/><polygon points="553.0,380.9 556.1,382.0 552.7,383.4" fill="rgb(108,105,105)"/><polygon points="556.8,379.5 560.5,378.1 559.6,380.6" fill="rgb(139,136,136)"/><polygon points="556.8,379.5 559.6,380.6 556.1,382.0" fill="rgb(142,139,139)"/><polygon points="560.5,378.1 564.3,376.6 563.0,379.2" fill="rgb(156,153,153)"/><polygon points="560.5,378.1 563.0,379.2 559.6,380.6" fill="rgb(160,157,157)"/><polygon points="564.3,376.6 568.0,375.2 566.5,377.8" fill="rgb(173,170,170)"/><polygon points="564.3,376.6 566.5,377.8 563.0,379.2" fill="rgb(181,178,178)"/><polygon points="568.0,375.2 571.8,373.8 569.9,376.4" fill="rgb(164,161,161)"/><polygon points="568.0,375.2 569.9,376.4 566.5,377.8" fill="rgb(179,176,176)"/>
<polygon points="542.4,387.6 545.8,386.2 546.1,388.6" fill="rgb(47,44,44)"/><polygon points="542.4,387.6 546.1,388.6 543.0,390.0" fill="rgb(50,47,47)"/><polygon points="545.8,386.2 549.3,384.8 549.2,387.2" fill="rgb(80,77,77)"/><polygon points="545.8,386.2 549.2,387.2 546.1,388.6" fill="rgb(74,71,71)"/><polygon points="549.3,384.8 552.7,383.4 552.4,385.9" fill="rgb(96,93,93)"/><polygon points="549.3,384.8 552.4,385.9 549.2,387.2" fill="rgb(83,80,80)"/><polygon points="552.7,383.4 556.1,382.0 555.5,384.5" fill="rgb(98,95,95)"/><polygon points="552.7,383.4 555.5,384.5 552.4,385.9" fill="rgb(109,106,106)"/><polygon points="556.1,382.0 559.6,380.6 558.6,383.1" fill="rgb(141,138,138)"/><polygon points="556.1,382.0 558.6,383.1 555.5,384.5" fill="rgb(150,147,147)"/><polygon points="559.6,380.6 563.0,379.2 561.8,381.8" fill="rgb(168,165,165)"/><polygon points="559.6,380.6 561.8,381.8 558.6,383.1" fill="rgb(154,151,151)"/><polygon points="563.0,379.2 566.5,377.8 564.9,380.4" fill="rgb(160,157,157)"/><polygon points="563.0,379.2 564.9,380.4 561.8,381.8" fill="rgb(152,149,149)"/><polygon points="566.5,377.8 569.9,376.4 568.0,379.0" fill="rgb(175,172,172)"/><polygon points="566.5,377.8 568.0,379.0 564.9,380.4" fill="rgb(163,160,160)"/>
<polygon points="543.0,390.0 546.1,388.6 546.5,389.6" fill="rgb(51,48,48)"/><polygon points="543.0,390.0 546.5,389.6 543.8,390.8" fill="rgb(47,44,44)"/><polygon points="546.1,388.6 549.2,387.2 549.2,388.4" fill="rgb(58,55,55)"/><polygon points="546.1,388.6 549.2,388.4 546.5,389.6" fill="rgb(77,74,74)"/><polygon points="549.2,387.2 552.4,385.9 552.0,387.1" fill="rgb(74,71,71)"/><polygon points="549.2,387.2 552.0,387.1 549.2,388.4" fill="rgb(98,95,95)"/><polygon points="552.4,385.9 555.5,384.5 554.7,385.9" fill="rgb(97,94,94)"/><polygon points="552.4,385.9 554.7,385.9 552.0,387.1" fill="rgb(119,116,116)"/><polygon points="555.5,384.5 558.6,383.1 557.4,384.7" fill="rgb(122,119,119)"/><polygon points="555.5,384.5 557.4,384.7 554.7,385.9" fill="rgb(119,116,116)"/><polygon points="558.6,383.1 561.8,381.8 560.1,383.4" fill="rgb(154,151,151)"/><polygon points="558.6,383.1 560.1,383.4 557.4,384.7" fill="rgb(140,137,137)"/><polygon points="561.8,381.8 564.9,380.4 562.9,382.2" fill="rgb(163,160,160)"/><polygon points="561.8,381.8 562.9,382.2 560.1,383.4" fill="rgb(148,145,145)"/><polygon points="564.9,380.4 568.0,379.0 565.6,381.0" fill="rgb(153,150,150)"/><polygon points="564.9,380.4 565.6,381.0 562.9,382.2" fill="rgb(173,170,170)"/>
<polygon points="543.8,390.8 546.5,389.6 546.9,390.5" fill="rgb(66,63,63)"/><polygon points="543.8,390.8 546.9,390.5 544.6,391.6" fill="rgb(70,67,67)"/><polygon points="546.5,389.6 549.2,388.4 549.2,389.5" fill="rgb(78,75,75)"/><polygon points="546.5,389.6 549.2,389.5 546.9,390.5" fill="rgb(60,57,57)"/><polygon points="549.2,388.4 552.0,387.1 551.6,388.4" fill="rgb(88,85,85)"/><polygon points="549.2,388.4 551.6,388.4 549.2,389.5" fill="rgb(90,87,87)"/><polygon points="552.0,387.1 554.7,385.9 553.9,387.3" fill="rgb(104,101,101)"/><polygon points="552.0,387.1 553.9,387.3 551.6,388.4" fill="rgb(118,115,115)"/><polygon points="554.7,385.9 557.4,384.7 556.2,386.2" fill="rgb(119,116,116)"/><polygon points="554.7,385.9 556.2,386.2 553.9,387.3" fill="rgb(139,136,136)"/><polygon points="557.4,384.7 560.1,383.4 558.6,385.1" fill="rgb(147,144,144)"/><polygon points="557.4,384.7 558.6,385.1 556.2,386.2" fill="rgb(127,124,124)"/><polygon points="560.1,383.4 562.9,382.2 560.9,384.1" fill="rgb(137,134,134)"/><polygon points="560.1,383.4 560.9,384.1 558.6,385.1" fill="rgb(155,152,152)"/><polygon points="562.9,382.2 565.6,381.0 563.2,383.0" fill="rgb(169,166,166)"/><polygon points="562.9,382.2 563.2,383.0 560.9,384.1" fill="rgb(148,145,145)"/>
<polygon points="544.6,391.6 546.9,390.5 547.3,391.5" fill="rgb(55,52,52)"/><polygon points="544.6,391.6 547.3,391.5 545.4,392.4" fill="rgb(67,64,64)"/><polygon points="546.9,390.5 549.2,389.5 549.2,390.5" fill="rgb(63,60,60)"/><polygon points="546.9,390.5 549.2,390.5 547.3,391.5" fill="rgb(82,79,79)"/><polygon points="549.2,389.5 551.6,388.4 551.2,389.6" fill="rgb(84,81,81)"/><polygon points="549.2,389.5 551.2,389.6 549.2,390.5" fill="rgb(72,69,69)"/><polygon points="551.6,388.4 553.9,387.3 553.1,388.7" fill="rgb(99,96,96)"/><polygon points="551.6,388.4 553.1,388.7 551.2,389.6" fill="rgb(104,101,101)"/><polygon points="553.9,387.3 556.2,386.2 555.0,387.8" fill="rgb(118,115,115)"/><polygon points="553.9,387.3 555.0,387.8 553.1,388.7" fill="rgb(125,122,122)"/><polygon points="556.2,386.2 558.6,385.1 556.9,386.9" fill="rgb(124,121,121)"/><polygon points="556.2,386.2 556.9,386.9 555.0,387.8" fill="rgb(142,139,139)"/><polygon points="558.6,385.1 560.9,384.1 558.9,385.9" fill="rgb(140,137,137)"/><polygon points="558.6,385.1 558.9,385.9 556.9,386.9" fill="rgb(148,145,145)"/><polygon points="560.9,384.1 563.2,383.0 560.8,385.0" fill="rgb(158,155,155)"/><polygon points="560.9,384.1 560.8,385.0 558.9,385.9" fill="rgb(152,149,149)"/>
<polygon points="545.4,392.4 547.3,391.5 547.7,392.4" fill="rgb(57,54,54)"/><polygon points="545.4,392.4 547.7,392.4 546.2,393.2" fill="rgb(68,65,65)"/><polygon points="547.3,391.5 549.2,390.5 549.2,391.6" fill="rgb(85,82,82)"/><polygon points="547.3,391.5 549.2,391.6 547.7,392.4" fill="rgb(80,77,77)"/><polygon points="549.2,390.5 551.2,389.6 550.8,390.9" fill="rgb(86,83,83)"/><polygon points="549.2,390.5 550.8,390.9 549.2,391.6" fill="rgb(78,75,75)"/><polygon points="551.2,389.6 553.1,388.7 552.3,390.1" fill="rgb(87,84,84)"/><polygon points="551.2,389.6 552.3,390.1 550.8,390.9" fill="rgb(112,109,109)"/><polygon points="553.1,388.7 555.0,387.8 553.8,389.3" fill="rgb(120,117,117)"/><polygon points="553.1,388.7 553.8,389.3 552.3,390.1" fill="rgb(123,120,120)"/><polygon points="555.0,387.8 556.9,386.9 555.4,388.6" fill="rgb(122,119,119)"/><polygon points="555.0,387.8 555.4,388.6 553.8,389.3" fill="rgb(130,127,127)"/><polygon points="556.9,386.9 558.9,385.9 556.9,387.8" fill="rgb(151,148,148)"/><polygon points="556.9,386.9 556.9,387.8 555.4,388.6" fill="rgb(147,144,144)"/><polygon points="558.9,385.9 560.8,385.0 558.4,387.0" fill="rgb(152,149,149)"/><polygon points="558.9,385.9 558.4,387.0 556.9,387.8" fill="rgb(144,141,141)"/>
<polygon points="546.2,393.2 547.7,392.4 548.1,393.4" fill="rgb(58,55,55)"/><polygon points="546.2,393.2 548.1,393.4 547.0,394.0" fill="rgb(71,68,68)"/><polygon points="547.7,392.4 549.2,391.6 549.2,392.8" fill="rgb(69,66,66)"/><polygon points="547.7,392.4 549.2,392.8 548.1,393.4" fill="rgb(77,74,74)"/><polygon points="549.2,391.6 550.8,390.9 550.4,392.1" fill="rgb(87,84,84)"/><polygon points="549.2,391.6 550.4,392.1 549.2,392.8" fill="rgb(95,92,92)"/><polygon points="550.8,390.9 552.3,390.1 551.5,391.5" fill="rgb(105,102,102)"/><polygon points="550.8,390.9 551.5,391.5 550.4,392.1" fill="rgb(90,87,87)"/><polygon points="552.3,390.1 553.8,389.3 552.6,390.9" fill="rgb(94,91,91)"/><polygon points="552.3,390.1 552.6,390.9 551.5,391.5" fill="rgb(101,98,98)"/><polygon points="553.8,389.3 555.4,388.6 553.8,390.2" fill="rgb(118,115,115)"/><polygon points="553.8,389.3 553.8,390.2 552.6,390.9" fill="rgb(122,119,119)"/><polygon points="555.4,388.6 556.9,387.8 554.9,389.6" fill="rgb(141,138,138)"/><polygon points="555.4,388.6 554.9,389.6 553.8,390.2" fill="rgb(143,140,140)"/><polygon points="556.9,387.8 558.4,387.0 556.0,389.0" fill="rgb(131,128,128)"/><polygon points="556.9,387.8 556.0,389.0 554.9,389.6" fill="rgb(153,150,150)"/>
<polygon points="547.0,394.0 548.1,393.4 547.7,393.8" fill="rgb(69,66,66)"/><polygon points="547.0,394.0 547.7,393.8 546.8,394.3" fill="rgb(71,68,68)"/><polygon points="548.1,393.4 549.2,392.8 548.6,393.3" fill="rgb(74,71,71)"/><polygon points="548.1,393.4 548.6,393.3 547.7,393.8" fill="rgb(66,63,63)"/><polygon points="549.2,392.8 550.4,392.1 549.5,392.8" fill="rgb(94,91,91)"/><polygon points="549.2,392.8 549.5,392.8 548.6,393.3" fill="rgb(93,90,90)"/><polygon points="550.4,392.1 551.5,391.5 550.4,392.3" fill="rgb(101,98,98)"/><polygon points="550.4,392.1 550.4,392.3 549.5,392.8" fill="rgb(108,105,105)"/><polygon points="551.5,391.5 552.6,390.9 551.3,391.8" fill="rgb(104,101,101)"/><polygon points="551.5,391.5 551.3,391.8 550.4,392.3" fill="rgb(96,93,93)"/><polygon points="552.6,390.9 553.8,390.2 552.2,391.3" fill="rgb(121,118,118)"/><polygon points="552.6,390.9 552.2,391.3 551.3,391.8" fill="rgb(128,125,125)"/><polygon points="553.8,390.2 554.9,389.6 553.1,390.8" fill="rgb(123,120,120)"/><polygon points="553.8,390.2 553.1,390.8 552.2,391.3" fill="rgb(139,136,136)"/><polygon points="554.9,389.6 556.0,389.0 554.0,390.3" fill="rgb(156,153,153)"/><polygon points="554.9,389.6 554.0,390.3 553.1,390.8" fill="rgb(136,133,133)"/>
<polygon points="546.8,394.3 547.7,393.8 547.3,394.2" fill="rgb(63,60,60)"/><polygon points="546.8,394.3 547.3,394.2 546.6,394.6" fill="rgb(65,62,62)"/><polygon points="547.7,393.8 548.6,393.3 548.0,393.9" fill="rgb(71,68,68)"/><polygon points="547.7,393.8 548.0,393.9 547.3,394.2" fill="rgb(64,61,61)"/><polygon points="548.6,393.3 549.5,392.8 548.6,393.5" fill="rgb(77,74,74)"/><polygon points="548.6,393.3 548.6,393.5 548.0,393.9" fill="rgb(91,88,88)"/><polygon points="549.5,392.8 550.4,392.3 549.3,393.1" fill="rgb(104,101,101)"/><polygon points="549.5,392.8 549.3,393.1 548.6,393.5" fill="rgb(95,92,92)"/><polygon points="550.4,392.3 551.3,391.8 550.0,392.7" fill="rgb(96,93,93)"/><polygon points="550.4,392.3 550.0,392.7 549.3,393.1" fill="rgb(117,114,114)"/><polygon points="551.3,391.8 552.2,391.3 550.6,392.4" fill="rgb(127,124,124)"/><polygon points="551.3,391.8 550.6,392.4 550.0,392.7" fill="rgb(112,109,109)"/><polygon points="552.2,391.3 553.1,390.8 551.3,392.0" fill="rgb(134,131,131)"/><polygon points="552.2,391.3 551.3,392.0 550.6,392.4" fill="rgb(143,140,140)"/><polygon points="553.1,390.8 554.0,390.3 552.0,391.6" fill="rgb(154,151,151)"/><polygon points="553.1,390.8 552.0,391.6 551.3,392.0" fill="rgb(144,141,141)"/>
<polygon points="546.6,394.6 547.3,394.2 546.9,394.6" fill="rgb(60,57,57)"/><polygon points="546.6,394.6 546.9,394.6 546.4,394.9" fill="rgb(63,60,60)"/><polygon points="547.3,394.2 548.0,393.9 547.3,394.4" fill="rgb(64,61,61)"/><polygon points="547.3,394.2 547.3,394.4 546.9,394.6" fill="rgb(64,61,61)"/><polygon points="548.0,393.9 548.6,393.5 547.8,394.1" fill="rgb(75,72,72)"/><polygon points="548.0,393.9 547.8,394.1 547.3,394.4" fill="rgb(90,87,87)"/><polygon points="548.6,393.5 549.3,393.1 548.2,393.9" fill="rgb(92,89,89)"/><polygon points="548.6,393.5 548.2,393.9 547.8,394.1" fill="rgb(98,95,95)"/><polygon points="549.3,393.1 550.0,392.7 548.6,393.6" fill="rgb(105,102,102)"/><polygon points="549.3,393.1 548.6,393.6 548.2,393.9" fill="rgb(108,105,105)"/><polygon points="550.0,392.7 550.6,392.4 549.1,393.4" fill="rgb(110,107,107)"/><polygon points="550.0,392.7 549.1,393.4 548.6,393.6" fill="rgb(107,104,104)"/><polygon points="550.6,392.4 551.3,392.0 549.5,393.1" fill="rgb(146,143,143)"/><polygon points="550.6,392.4 549.5,393.1 549.1,393.4" fill="rgb(128,125,125)"/><polygon points="551.3,392.0 552.0,391.6 550.0,392.9" fill="rgb(133,130,130)"/><polygon points="551.3,392.0 550.0,392.9 549.5,393.1" fill="rgb(147,144,144)"/>
<polygon points="546.4,394.9 546.9,394.6 546.4,395.1" fill="rgb(68,65,65)"/><polygon points="546.4,394.9 546.4,395.1 546.2,395.2" fill="rgb(51,48,48)"/><polygon points="546.9,394.6 547.3,394.4 546.7,394.9" fill="rgb(75,72,72)"/><polygon points="546.9,394.6 546.7,394.9 546.4,395.1" fill="rgb(68,65,65)"/><polygon points="547.3,394.4 547.8,394.1 546.9,394.8" fill="rgb(85,82,82)"/><polygon points="547.3,394.4 546.9,394.8 546.7,394.9" fill="rgb(71,68,68)"/><polygon points="547.8,394.1 548.2,393.9 547.1,394.7" fill="rgb(83,80,80)"/><polygon points="547.8,394.1 547.1,394.7 546.9,394.8" fill="rgb(110,107,107)"/><polygon points="548.2,393.9 548.6,393.6 547.3,394.6" fill="rgb(118,115,115)"/><polygon points="548.2,393.9 547.3,394.6 547.1,394.7" fill="rgb(108,105,105)"/><polygon points="548.6,393.6 549.1,393.4 547.5,394.4" fill="rgb(122,119,119)"/><polygon points="548.6,393.6 547.5,394.4 547.3,394.6" fill="rgb(113,110,110)"/><polygon points="549.1,393.4 549.5,393.1 547.8,394.3" fill="rgb(140,137,137)"/><polygon points="549.1,393.4 547.8,394.3 547.5,394.4" fill="rgb(130,127,127)"/><polygon points="549.5,393.1 550.0,392.9 548.0,394.2" fill="rgb(156,153,153)"/><polygon points="549.5,393.1 548.0,394.2 547.8,394.3" fill="rgb(151,148,148)"/>
<polygon points="546.2,395.2 546.4,395.1 546.0,395.5" fill="rgb(69,66,66)"/><polygon points="546.2,395.2 546.0,395.5 546.0,395.5" fill="rgb(73,70,70)"/><polygon points="546.4,395.1 546.7,394.9 546.0,395.5" fill="rgb(65,62,62)"/><polygon points="546.4,395.1 546.0,395.5 546.0,395.5" fill="rgb(59,56,56)"/><polygon points="546.7,394.9 546.9,394.8 546.0,395.5" fill="rgb(76,73,73)"/><polygon points="546.7,394.9 546.0,395.5 546.0,395.5" fill="rgb(75,72,72)"/><polygon points="546.9,394.8 547.1,394.7 546.0,395.5" fill="rgb(84,81,81)"/><polygon points="546.9,394.8 546.0,395.5 546.0,395.5" fill="rgb(83,80,80)"/><polygon points="547.1,394.7 547.3,394.6 546.0,395.5" fill="rgb(110,107,107)"/><polygon points="547.1,394.7 546.0,395.5 546.0,395.5" fill="rgb(118,115,115)"/><polygon points="547.3,394.6 547.5,394.4 546.0,395.5" fill="rgb(119,116,116)"/><polygon points="547.3,394.6 546.0,395.5 546.0,395.5" fill="rgb(132,129,129)"/><polygon points="547.5,394.4 547.8,394.3 546.0,395.5" fill="rgb(143,140,140)"/><polygon points="547.5,394.4 546.0,395.5 546.0,395.5" fill="rgb(119,116,116)"/><polygon points="547.8,394.3 548.0,394.2 546.0,395.5" fill="rgb(146,143,143)"/><polygon points="547.8,394.3 546.0,395.5 546.0,395.5" fill="rgb(141,138,138)"/>
<defs><pattern id="d1" width="2" height="2" patternUnits="userSpaceOnUse"><rect width="1" height="1" fill="#000"/></pattern><pattern id="d2" width="2" height="2" patternUnits="userSpaceOnUse"><rect width="1" height="1" fill="#000"/><rect x="1" y="1" width="1" height="1" fill="#000"/></pattern><pattern id="d3" width="2" height="2" patternUnits="userSpaceOnUse"><rect width="2" height="1" fill="#000"/><rect y="1" width="1" height="1" fill="#000"/></pattern><pattern id="hh" width="6" height="5" patternUnits="userSpaceOnUse"><rect x="0" y="0" width="3" height="1" fill="#666"/><rect x="2" y="1" width="1" height="2" fill="#666"/><rect x="2" y="3" width="3" height="1" fill="#666"/><rect x="4" y="1" width="1" height="1" fill="#888"/></pattern><pattern id="sp" width="7" height="6" patternUnits="userSpaceOnUse"><rect x="1" y="1" width="1" height="1" fill="#ddd"/><rect x="4" y="4" width="1" height="1" fill="#ccc"/></pattern></defs>
<polygon points="380.2,137.1 383.4,143.5 386.6,150.0 389.8,156.4 393.0,162.8 396.3,169.2 400.3,172.6 404.3,176.0 408.3,179.4 412.3,182.8 416.4,186.2 421.2,190.0 426.0,193.8 430.9,197.6 435.7,201.4 440.6,205.2 445.0,205.2 449.5,205.3 454.0,205.4 458.5,205.5 462.9,205.6 465.9,208.9 468.9,212.1 471.9,215.4 474.9,218.6 477.9,221.8 480.8,224.6 483.6,227.4 475.6,234.2 472.8,231.6 470.0,229.0 467.0,225.6 464.0,222.2 461.0,218.8 458.0,215.4 455.0,212.0 450.4,212.8 445.8,213.6 441.2,214.4 436.6,215.2 432.0,216.0 427.2,212.2 422.4,208.4 417.6,204.6 412.8,200.8 408.0,197.0 404.2,193.6 400.4,190.2 396.6,186.8 392.8,183.4 389.0,180.0 386.4,172.6 383.8,165.2 381.2,157.8 378.6,150.4 376.0,143.0" fill="url(#d1)"/>
<polygon points="372.6,122.9 376.9,125.2 381.2,127.4 385.5,129.6 389.5,134.8 393.5,140.0 397.5,145.1 401.5,150.3 405.5,155.5 409.8,158.9 414.1,162.2 418.4,165.6 422.7,169.0 427.0,172.3 431.9,176.2 436.8,179.9 441.7,183.8 446.6,187.5 451.5,191.3 455.8,192.6 460.1,193.8 464.4,195.0 468.7,196.3 473.0,197.5 476.0,200.6 479.0,203.6 482.0,206.6 485.0,209.7 488.0,212.8 490.9,215.8 493.8,218.8 496.7,221.8 499.6,224.8 502.5,227.8 505.4,231.2 494.9,239.1 492.1,235.7 489.3,233.0 486.5,230.2 483.6,227.4 480.8,224.6 477.9,221.8 474.9,218.6 471.9,215.4 468.9,212.1 465.9,208.9 462.9,205.6 458.5,205.5 454.0,205.4 449.5,205.3 445.0,205.2 440.6,205.2 435.7,201.4 430.9,197.6 426.0,193.8 421.2,190.0 416.4,186.2 412.3,182.8 408.3,179.4 404.3,176.0 400.3,172.6 396.3,169.2 393.0,162.8 389.8,156.4 386.6,150.0 383.4,143.5 380.2,137.1 376.3,134.8 372.4,132.5 368.5,130.1" fill="url(#d1)"/>
<polygon points="421.0,132.5 425.8,135.8 430.6,139.2 435.3,142.5 440.1,145.8 444.9,149.2 449.9,153.0 454.8,156.8 459.8,160.6 464.8,164.4 469.8,168.2 473.8,171.3 477.9,174.5 481.9,177.6 485.9,180.7 489.9,183.9 492.9,186.6 495.9,189.3 498.9,192.0 501.9,194.8 504.9,197.5 507.9,200.9 510.9,204.2 513.9,207.6 516.9,211.0 519.9,214.4 523.1,218.1 526.3,221.9 529.4,225.7 532.6,229.5 535.8,233.3 538.9,237.2 541.9,241.0 545.0,244.9 548.1,248.8 532.0,257.5 529.2,253.8 526.5,250.1 523.7,246.4 521.0,242.7 518.0,239.1 515.1,235.6 512.1,232.0 509.2,228.5 506.2,224.9 503.3,221.8 500.4,218.7 497.4,215.7 494.5,212.6 491.6,209.5 488.6,206.5 485.6,203.5 482.6,200.6 479.6,197.6 476.6,194.6 472.4,193.0 468.1,191.3 463.9,189.7 459.6,188.1 455.4,186.4 450.5,182.6 445.6,178.8 440.6,175.0 435.7,171.2 430.8,167.4 426.4,164.1 422.0,160.7 417.6,157.3 413.2,154.0 408.8,150.6" fill="url(#sp)"/>
<polygon points="524.2,217.3 527.4,221.1 530.6,224.9 533.8,228.7 537.0,232.5 540.1,236.4 543.2,240.3 546.3,244.2 549.4,248.1 552.5,252.0 555.2,256.0 557.9,260.0 560.6,264.0 553.0,267.4 550.5,263.5 547.9,259.6 545.4,255.7 542.4,251.9 539.5,248.0 536.5,244.2 533.6,240.4 530.6,236.6 527.5,232.9 524.4,229.2 521.3,225.5 518.2,221.8" fill="url(#hh)"/>
<polygon points="560.6,264.0 563.3,268.0 566.0,272.0 567.8,276.0 569.6,280.0 571.4,284.0 573.2,288.0 575.0,292.0 576.0,296.0 577.0,300.0 578.0,304.0 579.0,308.0 565.7,312.0 564.6,308.1 563.5,304.3 562.4,300.4 561.3,296.5 559.5,292.7 557.7,288.9 555.9,285.2 554.1,281.4 552.3,277.6 549.8,273.8 547.4,269.9" fill="url(#hh)"/>
<polygon points="579.0,308.0 580.0,312.0 580.8,316.0 581.6,320.0 582.4,324.0 583.2,328.0 584.0,332.0 583.7,335.6 583.4,339.2 583.1,342.8 582.8,346.4 582.5,350.0 581.5,353.2 580.5,356.4 579.5,359.6 578.5,362.8 577.5,366.0 575.6,368.6 573.7,371.2 571.8,373.8 569.9,376.4 568.0,379.0 565.6,381.0 563.2,383.0 560.8,385.0 558.4,387.0 556.0,389.0 554.0,390.3 551.1,391.9 552.4,391.0 553.5,389.5 554.6,388.0 555.8,386.4 556.9,384.9 558.0,383.4 558.9,380.9 559.8,378.4 560.7,375.8 561.6,373.3 562.5,370.8 563.0,367.6 563.5,364.4 564.1,361.2 564.6,358.0 565.1,354.8 565.1,351.3 565.1,347.8 565.2,344.2 565.2,340.7 565.2,337.2 564.4,333.3 563.6,329.4 562.8,325.4 562.0,321.5 561.2,317.6 560.0,313.8" fill="url(#hh)"/>
<polygon points="494.1,239.6 496.8,242.9 499.6,246.3 502.3,249.6 505.0,252.9 507.4,256.4 509.8,259.9 512.1,263.4 514.5,266.9 516.9,270.4 518.9,273.9 520.9,277.4 522.8,281.0 524.8,284.5 526.8,288.0 528.6,291.4 530.4,294.7 532.2,298.1 534.0,301.4 535.8,304.8 537.1,308.5 538.4,312.2 539.8,315.8 541.1,319.5 542.4,323.2 543.2,327.0 544.0,330.9 544.8,334.7 545.6,338.6 546.4,342.4 546.7,345.8 546.9,349.3 547.2,352.7 547.4,356.2 547.7,359.6 547.7,362.8 547.6,366.0 547.6,369.2 547.5,372.4 547.5,375.6 547.6,378.0 547.7,380.5 547.8,382.9 547.9,385.4 548.0,387.8 548.2,388.8 548.3,389.9 548.5,390.9 548.6,392.0 548.8,393.0 548.2,393.5 547.7,394.0 547.1,394.5 546.4,394.9 546.6,394.6 546.8,394.3 547.0,394.0 546.2,393.2 545.4,392.4 544.6,391.6 543.8,390.8 543.0,390.0 542.4,387.6 541.8,385.2 541.2,382.8 540.6,380.4 540.0,378.0 539.8,374.8 539.6,371.6 539.4,368.4 539.2,365.2 539.0,362.0 538.6,358.6 538.2,355.2 537.8,351.8 537.4,348.4 537.0,345.0 536.2,341.2 535.4,337.4 534.6,333.6 533.8,329.8 533.0,326.0 531.6,322.4 530.2,318.8 528.8,315.2 527.4,311.6 526.0,308.0 524.2,304.8 522.4,301.6 520.6,298.4 518.8,295.2 517.0,292.0 515.2,288.6 513.4,285.2 511.6,281.8 509.8,278.4 508.0,275.0 505.8,271.6 503.6,268.2 501.4,264.8 499.2,261.4 497.0,258.0 494.4,254.8 491.8,251.6 489.2,248.4 486.6,245.2" fill="url(#d3)"/>
<polygon points="495.2,228.3 498.1,231.2 500.9,234.6 503.7,238.0 506.5,241.5 509.4,244.9 512.2,248.3 514.7,251.9 517.3,255.5 519.8,259.1 522.4,262.7 524.9,266.3 527.1,269.9 529.2,273.5 531.3,277.1 533.5,280.8 535.6,284.4 537.4,287.9 539.2,291.4 541.0,294.9 542.8,298.4 544.6,301.9 545.9,305.7 547.1,309.4 548.4,313.2 549.6,316.9 550.9,320.7 551.7,324.6 552.5,328.4 553.3,332.3 554.1,336.2 554.9,340.1 555.0,343.5 555.1,347.0 555.3,350.5 555.4,354.0 555.5,357.4 555.3,360.6 555.0,363.8 554.8,367.0 554.5,370.2 554.2,373.4 553.9,375.9 553.6,378.4 553.2,380.9 552.9,383.3 552.5,385.8 552.1,387.1 551.7,388.3 551.3,389.6 550.8,390.8 550.4,392.1 549.5,392.8 548.7,393.5 547.7,394.0 548.2,393.5 548.8,393.0 548.6,392.0 548.5,390.9 548.3,389.9 548.2,388.8 548.0,387.8 547.9,385.4 547.8,382.9 547.7,380.5 547.6,378.0 547.5,375.6 547.5,372.4 547.6,369.2 547.6,366.0 547.7,362.8 547.7,359.6 547.4,356.2 547.2,352.7 546.9,349.3 546.7,345.8 546.4,342.4 545.6,338.6 544.8,334.7 544.0,330.9 543.2,327.0 542.4,323.2 541.1,319.5 539.8,315.8 538.4,312.2 537.1,308.5 535.8,304.8 534.0,301.4 532.2,298.1 530.4,294.7 528.6,291.4 526.8,288.0 524.8,284.5 522.8,281.0 520.9,277.4 518.9,273.9 516.9,270.4 514.5,266.9 512.1,263.4 509.8,259.9 507.4,256.4 505.0,252.9 502.3,249.6 499.6,246.3 496.8,242.9 494.1,239.6 491.4,236.3 488.6,233.5" fill="url(#d1)"/>
<polygon points="391,181 387,190 390,192 394,191 402,195 412,197 418,199 410,192 398,187" fill="#827d7d"/>
<polygon points="418,200 419,212 422,215 425,213 424,205" fill="#827d7d"/>
<polygon points="431,214 433,218 436,218 438,214 441,217 444,216 445,212" fill="#827d7d"/>
<polygon points="450,216 452,206 458,202 463,201 465,210 466,224 458,222" fill="#000"/>
<ellipse cx="518" cy="244" rx="4" ry="2.6" fill="#1c1c1c"/>
<ellipse cx="430" cy="173" rx="4" ry="2.5" fill="#111"/>
<polygon points="359.1,118.1 363.5,119.5 367.8,121.7 372.0,124.0 376.3,126.2 380.5,128.4 384.7,130.7 388.6,136.0 392.5,141.4 396.4,146.7 400.3,152.1 404.2,157.5 408.4,160.8 392.8,183.4 389.0,180.0 386.4,172.6 383.8,165.2 381.2,157.8 378.6,150.4 376.0,143.0 372.4,140.6 368.8,138.2 365.2,135.8 361.6,133.4 358.0,131.0 354.0,129.6" fill="#000" opacity="0.85"/>
<polygon points="407.1,162.8 411.3,166.2 415.5,169.5 419.7,172.9 424.0,176.3 408.0,197.0 404.2,193.6 400.4,190.2 396.6,186.8 392.8,183.4" fill="#000" opacity="0.5"/>
<path d="M346.2 126.1 L350.1 127.9 L354.0 129.5 L358.1 130.8 L361.9 132.9 L365.7 134.9 L369.4 137.2 L372.9 139.9 L376.2 142.7 L378.6 150.3 L381.4 157.6 L384.4 164.3 L387.5 171.0 L390.2 178.2 L393.7 182.1 L397.0 186.3 L400.5 190.1 L404.5 193.3 L408.8 195.9 L414.1 199.1 L419.0 202.8" stroke="#827d7d" stroke-width="1.5" fill="none"/>
<path d="M346.7 125.0 L350.8 126.3 L355.0 127.4 L359.2 128.4 L363.0 130.7 L366.7 133.3 L370.1 136.0 L373.7 138.7 L377.4 141.0 L380.5 147.6 L383.8 154.1 L386.7 160.9 L389.4 168.2 L391.7 176.0 L395.3 179.8 L399.3 183.1 L403.6 185.8 L408.0 188.5 L412.1 191.7" stroke="#827d7d" stroke-width="1.5" fill="none"/>
<path d="M347.4 122.8 L351.7 123.9 L356.0 125.1 L360.0 126.7 L363.7 129.5 L367.3 132.1 L371.1 134.4 L375.2 136.4 L379.3 138.4 L382.5 144.8 L385.4 151.7 L388.0 159.0 L390.7 166.2 L393.8 172.9 L398.2 175.7 L402.6 178.3 L406.8 181.5" stroke="#827d7d" stroke-width="1.5" fill="none"/>
<path d="M348.1 120.8 L352.3 122.4 L356.4 124.2 L360.4 125.9 L364.3 128.2 L368.4 130.2 L372.5 132.2 L376.6 134.3 L380.4 136.8 L383.3 143.7 L386.2 150.5 L389.4 157.0 L392.9 163.0 L396.6 168.7 L400.9 171.7 L404.7 175.5 L408.2 179.6 L411.7 183.6 L415.8 186.9 L421.1 190.1 L426.5 193.2" stroke="#827d7d" stroke-width="1.5" fill="none"/>
<path d="M348.5 119.8 L352.6 121.5 L356.9 123.0 L361.3 124.1 L365.5 126.1 L369.6 128.1 L373.5 130.6 L377.3 133.3 L381.0 135.9 L384.3 142.2 L388.0 148.0 L391.7 153.6 L395.4 159.3 L398.6 165.7 L402.2 169.8 L405.9 173.8 L409.9 177.3 L414.4 180.1 L419.0 182.7" stroke="#827d7d" stroke-width="1.5" fill="none"/>
<path d="M348.9 118.6 L353.3 119.8 L357.8 120.9 L362.3 122.1 L366.3 124.4 L370.2 127.1 L374.1 129.7 L378.1 132.1 L382.3 134.1 L386.2 139.5 L390.0 145.0 L393.5 151.0 L396.6 157.5 L399.7 164.1 L403.8 167.6 L408.3 170.4 L413.0 173.1" stroke="#827d7d" stroke-width="1.5" fill="none"/>
<path d="M349.7 116.5 L354.2 117.7 L358.6 119.2 L362.8 121.0 L366.8 123.6 L370.9 126.0 L375.1 128.0 L379.6 129.8 L383.9 131.8 L387.6 137.4 L391.1 143.5 L394.4 149.7 L397.9 155.6 L401.9 160.8 L406.6 163.4 L411.2 166.3 L415.3 169.8 L419.0 173.9 L422.7 178.0 L427.4 182.0 L432.6 185.3" stroke="#827d7d" stroke-width="1.5" fill="none"/>
<path d="M350.2 115.0 L354.5 116.8 L358.8 118.6 L363.2 120.2 L367.5 122.3 L371.9 124.1 L376.4 126.0 L380.6 128.3 L384.6 130.9 L388.1 136.7 L391.8 142.4 L395.9 147.6 L400.2 152.3 L404.4 157.1 L408.6 160.6 L412.4 164.6 L416.2 168.7 L420.2 172.3 L424.7 175.3" stroke="#827d7d" stroke-width="1.5" fill="none"/>
</g>
<g shape-rendering="crispEdges">
<path d="M286.5 121.5 L437.5 256.5" stroke="#f00" fill="none"/>
<path d="M437.5 256.5 L523.5 311.5" stroke="#0f0" fill="none"/>
<path d="M437.5 256.5 L362.5 357.5" stroke="#00f" fill="none"/>
<path class="c" d="M235.5 39.5 L387.5 42.5 L385.5 156.5 L233.5 153.5 Z"/>
<path class="c" d="M239.5 39.5 L236.5 144.5"/>
<path class="c" d="M384.5 42.5 L383.5 137.5"/>
<path class="c" d="M236.5 144.5 L383.5 137.5 L373.5 240.5 L234.5 261.5 Z"/>
<path class="c" d="M236.5 147.5 L383.5 140.5"/>
<path class="c" d="M234.5 261.5 L234.5 264.5 L373.5 243.5 L373.5 240.5"/>
<path class="c" d="M234.5 243.5 L373.5 222.5 L372.5 339.5 L231.5 359.5 Z"/>
<path class="c" d="M234.5 247.5 L373.5 226.5"/>
<path class="c" d="M231.5 359.5 L231.5 362.5 L372.5 342.5 L372.5 339.5"/>
<path class="c" d="M234.5 261.5 L231.5 359.5"/>
<path class="c" d="M222.5 314.5 L369.5 317.5 L365.5 426.5 L218.5 424.5 Z"/>
<path class="c" d="M222.5 317.5 L369.5 321.5"/>
<path class="c" d="M218.5 424.5 L217.5 427.5 L365.5 431.5 L365.5 426.5"/>
<path class="c" d="M365.5 49.5 L518.5 49.5 L508.5 162.5 L359.5 161.5 Z"/>
<path class="c" d="M365.5 52.5 L518.5 53.5"/>
<path class="c" d="M359.5 158.5 L508.5 159.5"/>
<path class="c" d="M361.5 143.5 L505.5 137.5 L498.5 241.5 L357.5 250.5 Z"/>
<path class="c" d="M361.5 146.5 L505.5 140.5"/>
<path class="c" d="M357.5 250.5 L357.5 253.5 L498.5 243.5 L498.5 241.5"/>
<path class="c" d="M359.5 234.5 L501.5 228.5 L496.5 328.5 L357.5 339.5 Z"/>
<path class="c" d="M359.5 237.5 L501.5 231.5"/>
<path class="c" d="M357.5 339.5 L357.5 343.5 L496.5 331.5 L496.5 328.5"/>
<path class="c" d="M357.5 250.5 L359.5 234.5"/>
<path class="c" d="M360.5 335.5 L499.5 315.5 L511.5 465.5 L358.5 464.5 Z"/>
<path class="c" d="M364.5 335.5 L362.5 464.5"/>
<path class="c" d="M499.5 315.5 L505.5 316.5 L516.5 465.5 L511.5 465.5"/>
<path class="c" d="M491.5 163.5 L491.5 49.5 L495.5 49.5"/>
<path class="c" d="M491.5 50.5 L494.5 50.5"/>
<path class="c" d="M639.5 49.5 L639.5 163.5"/>
<path class="c" d="M490.5 143.5 L642.5 145.5 L642.5 264.5 L491.5 248.5 Z"/>
<path class="c" d="M490.5 146.5 L642.5 148.5"/>
<path class="c" d="M491.5 248.5 L491.5 251.5 L642.5 267.5 L642.5 264.5"/>
<path class="c" d="M643.5 145.5 L643.5 206.5"/>
<path class="c" d="M491.5 163.5 L490.5 143.5"/>
<path class="c" d="M489.5 231.5 L642.5 246.5 L642.5 363.5 L488.5 335.5 Z"/>
<path class="c" d="M489.5 233.5 L642.5 250.5"/>
<path class="c" d="M488.5 335.5 L488.5 338.5 L642.5 366.5 L642.5 363.5"/>
<path class="c" d="M483.5 317.5 L624.5 316.5 L622.5 423.5 L482.5 424.5 Z"/>
<path class="c" d="M483.5 319.5 L624.5 319.5"/>
<path class="c" d="M482.5 424.5 L482.5 426.5 L622.5 426.5 L622.5 423.5"/>
<path d="M495.5 49.5 H644.5 V163.5 H495.5 Z" fill="none" stroke="#f0f"/>
<path d="M495 49.5 H645" fill="none" stroke="#ff0" stroke-dasharray="4 4" stroke-dashoffset="4"/>
<path d="M495 163.5 H645" fill="none" stroke="#ff0" stroke-dasharray="4 4" stroke-dashoffset="2"/>
<path d="M495.5 49 V164" fill="none" stroke="#ff0" stroke-dasharray="4 4" stroke-dashoffset="4"/>
<path d="M644.5 49 V164" fill="none" stroke="#ff0" stroke-dasharray="4 4" stroke-dashoffset="4"/>
</g>
<g shape-rendering="crispEdges">
<rect x="480.50" y="15" width="13.63" height="19" fill="rgb(0,0,0)"/><rect x="493.83" y="15" width="13.63" height="19" fill="rgb(15,15,15)"/><rect x="507.17" y="15" width="13.63" height="19" fill="rgb(30,30,30)"/><rect x="520.50" y="15" width="13.63" height="19" fill="rgb(45,45,45)"/><rect x="533.83" y="15" width="13.63" height="19" fill="rgb(60,60,60)"/><rect x="547.17" y="15" width="13.63" height="19" fill="rgb(75,75,75)"/><rect x="560.50" y="15" width="13.63" height="19" fill="rgb(90,90,90)"/><rect x="573.83" y="15" width="13.63" height="19" fill="rgb(105,105,105)"/><rect x="587.17" y="15" width="13.63" height="19" fill="rgb(120,120,120)"/><rect x="600.50" y="15" width="13.63" height="19" fill="rgb(135,135,135)"/><rect x="613.83" y="15" width="13.63" height="19" fill="rgb(150,150,150)"/><rect x="627.17" y="15" width="13.63" height="19" fill="rgb(165,165,165)"/><rect x="640.50" y="15" width="13.63" height="19" fill="rgb(180,180,180)"/><rect x="653.83" y="15" width="13.63" height="19" fill="rgb(195,195,195)"/><rect x="667.17" y="15" width="13.63" height="19" fill="rgb(210,210,210)"/><rect x="680.50" y="15" width="13.63" height="19" fill="rgb(225,225,225)"/><rect x="693.83" y="15" width="13.63" height="19" fill="rgb(240,240,240)"/><rect x="707.17" y="15" width="13.63" height="19" fill="rgb(255,255,255)"/>
<path d="M480.5 12 V36 M721.5 12 V36 M528.5 34 V37 M576.5 34 V37 M624.5 34 V37 M672.5 34 V37" stroke="#fff" fill="none"/>
</g>
<filter id="nf" x="0" y="0" width="723" height="637" filterUnits="userSpaceOnUse"><feOffset dx="0" dy="0"/></filter>
<g filter="url(#nf)">
<text transform="translate(480,11.6) scale(1,1.16)" xml:space="preserve">0</text>
<text transform="translate(715,11.6) scale(1,1.16)" xml:space="preserve">1</text>
<text transform="translate(528,48.6) scale(1,1.16)" xml:space="preserve">0.2</text>
<text transform="translate(576,48.6) scale(1,1.16)" xml:space="preserve">0.4</text>
<text transform="translate(624,48.6) scale(1,1.16)" xml:space="preserve">0.6</text>
<text transform="translate(672,48.6) scale(1,1.16)" xml:space="preserve">0.8</text>
</g>
<g shape-rendering="crispEdges"><rect x="0" y="405" width="76" height="16" fill="#fff"/><rect x="1" y="406" width="14" height="7" fill="#000"/><rect x="15" y="413" width="16" height="7" fill="#000"/><rect x="31" y="406" width="15" height="7" fill="#000"/><rect x="46" y="413" width="15" height="7" fill="#000"/><rect x="61" y="406" width="14" height="7" fill="#000"/></g>
<g filter="url(#nf)">
<text transform="translate(25.5,403) scale(1,1.16)" xml:space="preserve">5 km</text>
<text transform="translate(82.5,419) scale(1,1.16)" xml:space="preserve">MSI:  2000-337T10:44:10.00 to 2000-337T10:55:34.00 (6/0151164084 to 6/0151164768)</text>
<text transform="translate(6.7,442) scale(1,1.16)" xml:space="preserve">MidSouthGlobals_337</text>
<text transform="translate(6.7,456) scale(1,1.16)" xml:space="preserve">Mosaic 21</text>
<text transform="translate(6.7,470) scale(1,1.16)" xml:space="preserve">3x4_4 mosaic in filter 4, clean</text>
</g>
</svg>
</body></html>
